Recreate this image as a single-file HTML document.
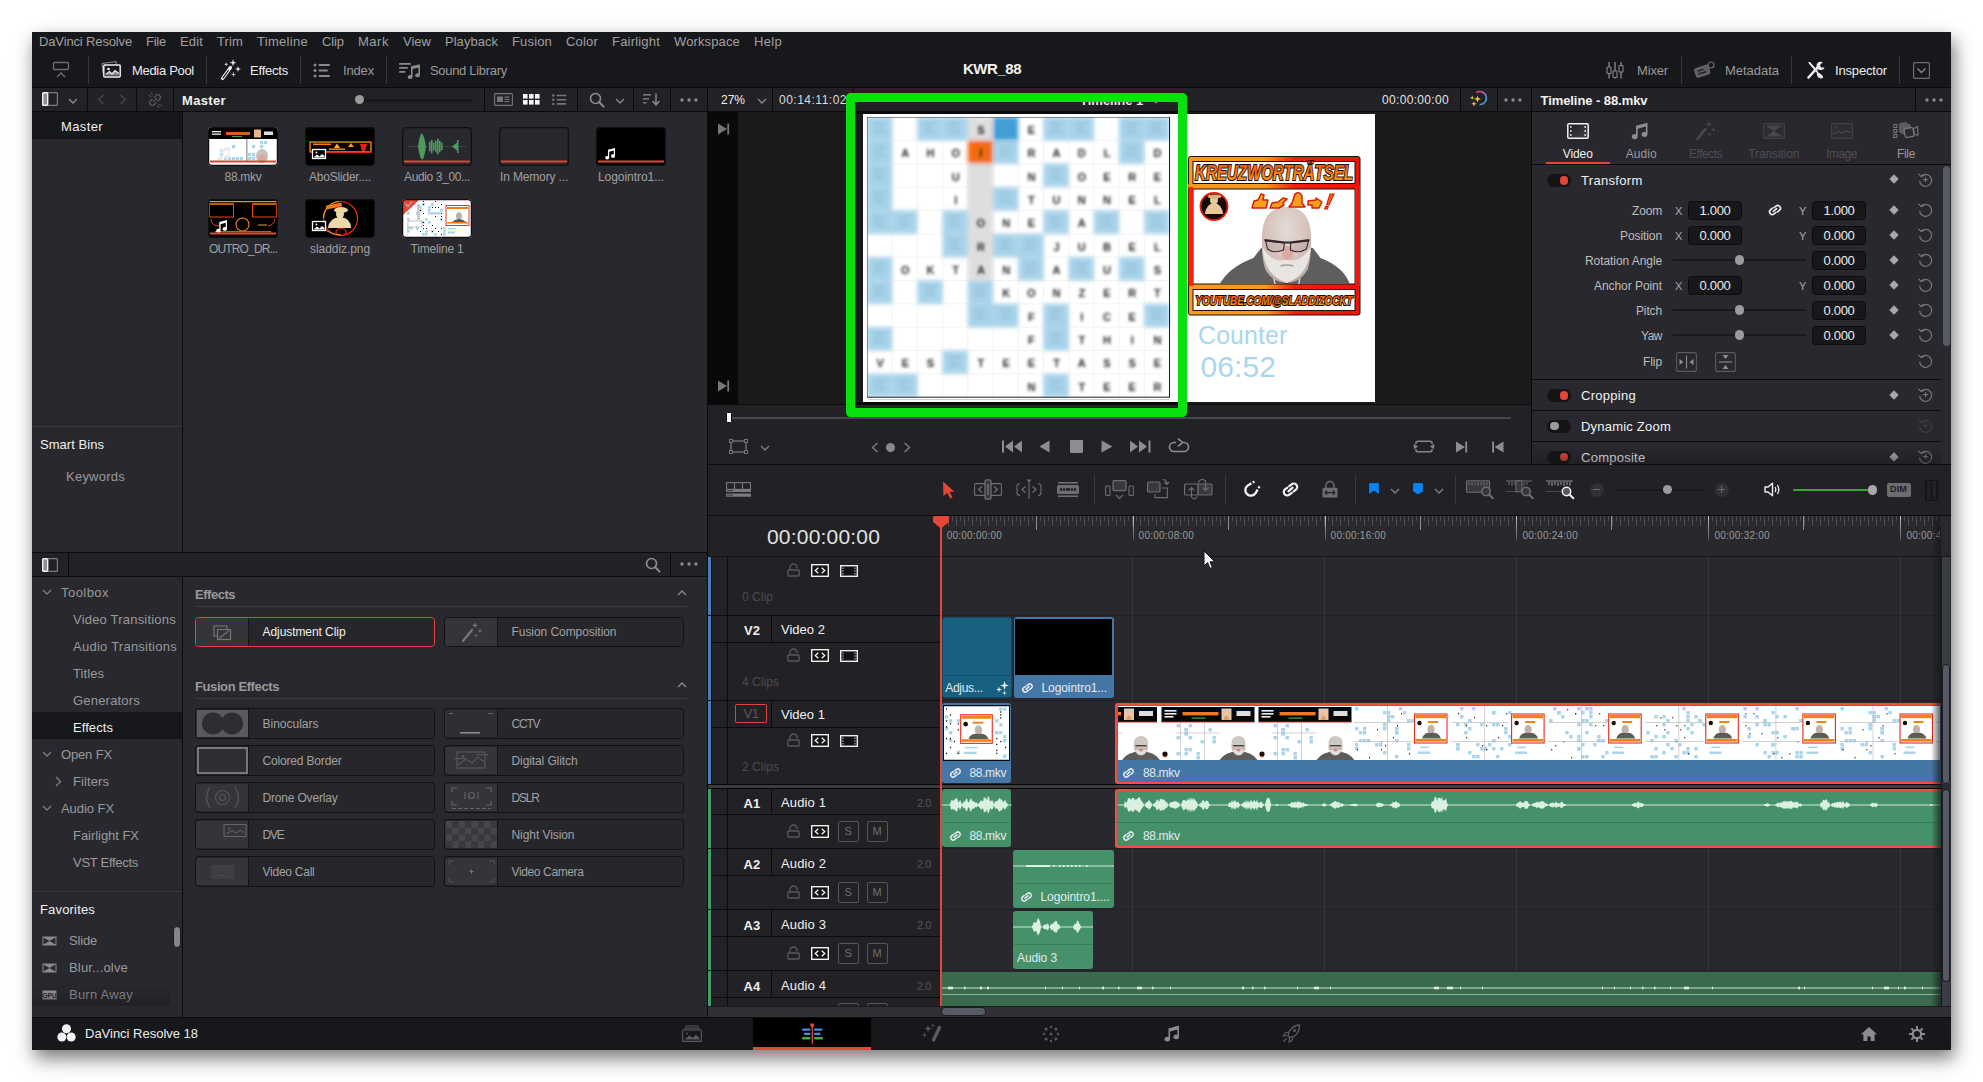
<!DOCTYPE html>
<html><head><meta charset="utf-8"><title>DaVinci Resolve - KWR_88</title>
<style>
html,body{margin:0;padding:0;background:#fff;}
body{width:1983px;height:1082px;position:relative;overflow:hidden;
font-family:"Liberation Sans",sans-serif;font-size:13px;}
div,span,svg{position:absolute;box-sizing:border-box;}
span{white-space:nowrap;display:block;}
svg{overflow:visible;}
</style></head><body>
<div style="left:32px;top:32px;width:1919px;height:1018px;background:#28282e;box-shadow:3px 8px 16px rgba(0,0,0,0.47),2px 10px 30px rgba(0,0,0,0.1);"></div>
<div style="left:32px;top:32px;width:1919px;height:55px;background:#17181b;"></div>
<div style="left:32px;top:87px;width:1919px;height:1px;background:#0b0b0d;"></div>
<span style="left:39.0px;top:31.9px;height:19px;line-height:19px;font-size:13px;color:#a0a0a0;letter-spacing:-0.14px;">DaVinci Resolve</span>
<span style="left:146.0px;top:31.9px;height:19px;line-height:19px;font-size:13px;color:#a0a0a0;letter-spacing:-0.24px;">File</span>
<span style="left:180.0px;top:31.9px;height:19px;line-height:19px;font-size:13px;color:#a0a0a0;letter-spacing:0.15px;">Edit</span>
<span style="left:217.0px;top:31.9px;height:19px;line-height:19px;font-size:13px;color:#a0a0a0;letter-spacing:0.12px;">Trim</span>
<span style="left:257.0px;top:31.9px;height:19px;line-height:19px;font-size:13px;color:#a0a0a0;letter-spacing:0.29px;">Timeline</span>
<span style="left:322.0px;top:31.9px;height:19px;line-height:19px;font-size:13px;color:#a0a0a0;letter-spacing:-0.10px;">Clip</span>
<span style="left:358.0px;top:31.9px;height:19px;line-height:19px;font-size:13px;color:#a0a0a0;letter-spacing:0.53px;">Mark</span>
<span style="left:403.0px;top:31.9px;height:19px;line-height:19px;font-size:13px;color:#a0a0a0;letter-spacing:0.01px;">View</span>
<span style="left:445.0px;top:31.9px;height:19px;line-height:19px;font-size:13px;color:#a0a0a0;letter-spacing:0.03px;">Playback</span>
<span style="left:512.0px;top:31.9px;height:19px;line-height:19px;font-size:13px;color:#a0a0a0;letter-spacing:0.16px;">Fusion</span>
<span style="left:566.0px;top:31.9px;height:19px;line-height:19px;font-size:13px;color:#a0a0a0;letter-spacing:0.18px;">Color</span>
<span style="left:612.0px;top:31.9px;height:19px;line-height:19px;font-size:13px;color:#a0a0a0;letter-spacing:0.19px;">Fairlight</span>
<span style="left:674.0px;top:31.9px;height:19px;line-height:19px;font-size:13px;color:#a0a0a0;letter-spacing:0.13px;">Workspace</span>
<span style="left:754.0px;top:31.9px;height:19px;line-height:19px;font-size:13px;color:#a0a0a0;letter-spacing:0.31px;">Help</span>
<div style="left:88px;top:56px;width:1px;height:28px;background:#38383c;"></div>
<div style="left:206px;top:56px;width:1px;height:28px;background:#38383c;"></div>
<div style="left:300px;top:56px;width:1px;height:28px;background:#38383c;"></div>
<div style="left:386px;top:56px;width:1px;height:28px;background:#38383c;"></div>
<div style="left:1681px;top:56px;width:1px;height:28px;background:#38383c;"></div>
<div style="left:1791px;top:56px;width:1px;height:28px;background:#38383c;"></div>
<div style="left:1899px;top:56px;width:1px;height:28px;background:#38383c;"></div>
<svg style="left:52px;top:61px;" width="18" height="18" viewBox="0 0 18 18"><rect x="1.5" y="1.5" width="15" height="7" rx="1" fill="none" stroke="#6e6e72" stroke-width="1.3"/><path d="M5 16 L9 12 L13 16" fill="none" stroke="#6e6e72" stroke-width="1.4"/></svg>
<svg style="left:100px;top:60px;" width="22" height="20" viewBox="0 0 22 20"><path d="M2 3.5 L16 1.5 L16.4 4" fill="none" stroke="#8c8c8c" stroke-width="1.1"/><path d="M2 3.5 L3 13" fill="none" stroke="#8c8c8c" stroke-width="1.1"/><rect x="3.8" y="5" width="16.4" height="12" rx="1" fill="#17181b" stroke="#f0f0f0" stroke-width="1.5"/><circle cx="8.5" cy="9" r="1.3" fill="#f0f0f0"/><path d="M5.5 15.5 L9.5 11.5 L12 14 L15 10.5 L18.8 13.5 L18.8 15.5 Z" fill="#8a8a8a"/><path d="M5.5 14.5 L9.5 11.5 L12 14 L15 10.5 L18.8 13.5" fill="none" stroke="#f0f0f0" stroke-width="1.2"/></svg>
<span style="left:132.0px;top:60.5px;height:19px;line-height:19px;font-size:13px;color:#ececec;letter-spacing:-0.31px;">Media Pool</span>
<svg style="left:219px;top:58px;" width="24" height="24" viewBox="0 0 24 24"><path d="M3.5 20.5 L11.5 9.5" stroke="#f0f0f0" stroke-width="3.2" stroke-linecap="round"/><path d="M4 19.8 L9.3 12.5" stroke="#17181b" stroke-width="1.2" stroke-linecap="round"/><path d="M14 1 L14.8 4 L17.6 4.8 L14.8 5.6 L14 8.6 L13.2 5.6 L10.4 4.8 L13.2 4 Z" fill="#f0f0f0"/><path d="M19 8 L19.7 10.3 L22 11 L19.7 11.7 L19 14 L18.3 11.7 L16 11 L18.3 10.3 Z" fill="#f0f0f0"/><path d="M14.5 14 L15.1 15.9 L17 16.5 L15.1 17.1 L14.5 19 L13.9 17.1 L12 16.5 L13.9 15.9 Z" fill="#f0f0f0"/><path d="M7.2 4.2 L7.7 5.8 L9.3 6.3 L7.7 6.8 L7.2 8.4 L6.7 6.8 L5.1 6.3 L6.7 5.8 Z" fill="#f0f0f0"/></svg>
<span style="left:250.0px;top:60.5px;height:19px;line-height:19px;font-size:13px;color:#ececec;letter-spacing:-0.21px;">Effects</span>
<svg style="left:313px;top:61.5px;" width="18" height="17" viewBox="0 0 18 17"><circle cx="2" cy="3" r="1.5" fill="#8a8a8a"/><rect x="5.5" y="2" width="11.5" height="2" rx="1" fill="#8a8a8a"/><circle cx="2" cy="8.5" r="1.5" fill="#8a8a8a"/><rect x="5.5" y="7.5" width="9.5" height="2" rx="1" fill="#8a8a8a"/><circle cx="2" cy="14" r="1.5" fill="#8a8a8a"/><rect x="5.5" y="13" width="11.5" height="2" rx="1" fill="#8a8a8a"/></svg>
<span style="left:343.0px;top:60.5px;height:19px;line-height:19px;font-size:13px;color:#9a9a9a;letter-spacing:-0.16px;">Index</span>
<svg style="left:399px;top:62px;" width="22" height="18" viewBox="0 0 22 18"><rect x="0" y="1" width="12" height="1.8" rx=".9" fill="#8a8a8a"/><rect x="0" y="5" width="9" height="1.8" rx=".9" fill="#8a8a8a"/><rect x="0" y="9" width="6.5" height="1.8" rx=".9" fill="#8a8a8a"/><path d="M12 4.2 L21 2.2 L21 13.3 A2.4 2 0 1 1 19.4 11.4 L19.4 5.8 L13.6 7 L13.6 15 A2.4 2 0 1 1 12 13.1 Z" fill="#8a8a8a"/></svg>
<span style="left:430.0px;top:60.5px;height:19px;line-height:19px;font-size:13px;color:#9a9a9a;letter-spacing:-0.31px;">Sound Library</span>
<span style="left:963.0px;top:58.4px;height:21px;line-height:21px;font-size:15px;color:#f2f2f2;font-weight:700;letter-spacing:-0.47px;">KWR_88</span>
<svg style="left:1607px;top:61.5px;" width="18" height="17" viewBox="0 0 18 17"><rect x="1.4" y="0" width="1.3" height="16.5" fill="#8a8a8a"/><rect x="0" y="5" width="4" height="6.5" rx="0.8" fill="#17181b" stroke="#8a8a8a" stroke-width="1.1"/><rect x="7.4" y="0" width="1.3" height="16.5" fill="#8a8a8a"/><rect x="6" y="9" width="4" height="6.5" rx="0.8" fill="#17181b" stroke="#8a8a8a" stroke-width="1.1"/><rect x="13.4" y="0" width="1.3" height="16.5" fill="#8a8a8a"/><rect x="12" y="3.5" width="4" height="6.5" rx="0.8" fill="#17181b" stroke="#8a8a8a" stroke-width="1.1"/></svg>
<span style="left:1637.0px;top:60.5px;height:19px;line-height:19px;font-size:13px;color:#9a9a9a;letter-spacing:-0.16px;">Mixer</span>
<svg style="left:1694px;top:60px;" width="22" height="20" viewBox="0 0 22 20"><g transform="rotate(-18 9 12)"><rect x="1.5" y="6.5" width="14" height="9" rx="1.5" fill="#5e5e62" stroke="#6c6c70" stroke-width="1"/><rect x="4" y="9" width="6" height="1.2" fill="#17181b"/><rect x="4" y="12" width="8" height="1.2" fill="#17181b"/></g><circle cx="17" cy="5" r="3" fill="none" stroke="#6c6c70" stroke-width="1.2"/></svg>
<span style="left:1725.0px;top:60.5px;height:19px;line-height:19px;font-size:13px;color:#9a9a9a;letter-spacing:-0.03px;">Metadata</span>
<svg style="left:1805px;top:60px;" width="22" height="20" viewBox="0 0 22 20"><path d="M3 2.5 L5 2 L13 11 L11.5 12.5 Z" fill="#f0f0f0"/><path d="M11.5 11 L17.5 15.5 Q19 18.5 16 18.5 Q12.5 18 12 15 Z" fill="#f0f0f0"/><path d="M3.5 17.5 L12.5 7.5" stroke="#f0f0f0" stroke-width="2.6" stroke-linecap="round"/><path d="M17.8 2.2 A4.2 4.2 0 1 0 19.6 7.4 L16.2 7.6 L14.8 5.2 Z" fill="#f0f0f0"/></svg>
<span style="left:1835.0px;top:60.5px;height:19px;line-height:19px;font-size:13px;color:#ececec;letter-spacing:-0.16px;">Inspector</span>
<svg style="left:1913px;top:61.5px;" width="17" height="17" viewBox="0 0 17 17"><rect x=".6" y=".6" width="15.8" height="15.8" rx="1" fill="none" stroke="#6e6e72" stroke-width="1.2"/><path d="M4.5 6.5 L8.5 10.5 L12.5 6.5" fill="none" stroke="#8a8a8a" stroke-width="1.4"/></svg>
<div style="left:32px;top:88px;width:675px;height:23px;background:#212126;"></div>
<div style="left:32px;top:111px;width:675px;height:1px;background:#0b0b0d;"></div>
<div style="left:87px;top:88px;width:1px;height:23px;background:#0b0b0d;"></div>
<div style="left:136px;top:88px;width:1px;height:23px;background:#0b0b0d;"></div>
<div style="left:173px;top:88px;width:1px;height:23px;background:#0b0b0d;"></div>
<div style="left:484px;top:88px;width:1px;height:23px;background:#0b0b0d;"></div>
<div style="left:577px;top:88px;width:1px;height:23px;background:#0b0b0d;"></div>
<div style="left:633px;top:88px;width:1px;height:23px;background:#0b0b0d;"></div>
<div style="left:670px;top:88px;width:1px;height:23px;background:#0b0b0d;"></div>
<svg style="left:42px;top:92px;" width="16" height="14" viewBox="0 0 16 14"><rect x=".6" y=".6" width="14.8" height="12.8" rx="1" fill="none" stroke="#7c7c80" stroke-width="1.2"/><rect x=".7" y=".7" width="5" height="12.6" rx="1" fill="#8e8e90" stroke="#f2f2f2" stroke-width="1.4"/></svg>
<svg style="left:68px;top:97.5px;" width="10" height="6" viewBox="0 0 10 6"><path d="M1 1 L5 5 L9 1" fill="none" stroke="#8a8a8a" stroke-width="1.4"/></svg>
<svg style="left:97px;top:94px;" width="8" height="11" viewBox="0 0 8 11"><path d="M6.5 1 L1.5 5.5 L6.5 10" fill="none" stroke="#48484c" stroke-width="1.4"/></svg>
<svg style="left:119px;top:94px;" width="8" height="11" viewBox="0 0 8 11"><path d="M1.5 1 L6.5 5.5 L1.5 10" fill="none" stroke="#48484c" stroke-width="1.4"/></svg>
<svg style="left:146px;top:91px;" width="18" height="17" viewBox="0 0 18 17"><g fill="none" stroke="#56565a" stroke-width="1.4" stroke-linecap="round"><path d="M8.3 6.2 L10 4.5 A2.6 2.6 0 0 1 13.7 8.2 L12 9.9"/><path d="M9.9 12 L8.2 13.7 A2.6 2.6 0 0 1 4.5 10 L6.2 8.3"/><path d="M7.6 10.6 L10.6 7.6"/><path d="M3 4.5 L5 5.5 M5.5 2 L6.3 4 M13.5 13.5 L15.5 14.5 M12 14.5 L12.8 16.5" stroke-width="1"/></g></svg>
<span style="left:182.0px;top:91.2px;height:19px;line-height:19px;font-size:13px;color:#f2f2f2;font-weight:700;letter-spacing:0.35px;">Master</span>
<div style="left:363px;top:98.5px;width:110px;height:3px;background:#19191c;border-radius:1.5px;"></div>
<div style="left:354.5px;top:95px;width:9px;height:9px;background:#9a9a9a;border-radius:50%;"></div>
<svg style="left:494px;top:93px;" width="19" height="13" viewBox="0 0 19 13"><rect x=".6" y=".6" width="17.8" height="11.8" rx="1" fill="none" stroke="#77777b" stroke-width="1.1"/><rect x="3" y="3.5" width="6" height="5.5" fill="#77777b"/><rect x="10.5" y="3.5" width="5" height="1.1" fill="#77777b"/><rect x="10.5" y="5.8" width="5" height="1.1" fill="#77777b"/><rect x="10.5" y="8" width="5" height="1.1" fill="#77777b"/></svg>
<svg style="left:523px;top:94px;" width="17" height="11" viewBox="0 0 17 11"><rect x="0" y="0" width="4.6" height="4.6" fill="#f4f4f4"/><rect x="6" y="0" width="4.6" height="4.6" fill="#f4f4f4"/><rect x="12" y="0" width="4.6" height="4.6" fill="#f4f4f4"/><rect x="0" y="6" width="4.6" height="4.6" fill="#f4f4f4"/><rect x="6" y="6" width="4.6" height="4.6" fill="#f4f4f4"/><rect x="12" y="6" width="4.6" height="4.6" fill="#f4f4f4"/></svg>
<svg style="left:552px;top:94px;" width="15" height="12" viewBox="0 0 15 12"><circle cx="1.3" cy="1.5" r="1.2" fill="#77777b"/><rect x="4.5" y="0.7" width="10" height="1.6" rx=".8" fill="#77777b"/><circle cx="1.3" cy="5.7" r="1.2" fill="#77777b"/><rect x="4.5" y="4.9" width="10" height="1.6" rx=".8" fill="#77777b"/><circle cx="1.3" cy="9.9" r="1.2" fill="#77777b"/><rect x="4.5" y="9.1" width="10" height="1.6" rx=".8" fill="#77777b"/></svg>
<svg style="left:589px;top:91.5px;" width="16" height="16" viewBox="0 0 16 16"><circle cx="6.5" cy="6.5" r="5" fill="none" stroke="#8e8e8e" stroke-width="1.6"/><path d="M10.3 10.3 L14.6 14.6" stroke="#8e8e8e" stroke-width="2" stroke-linecap="round"/></svg>
<svg style="left:614.5px;top:97.5px;" width="10" height="6" viewBox="0 0 10 6"><path d="M1 1 L5 5 L9 1" fill="none" stroke="#8a8a8a" stroke-width="1.4"/></svg>
<svg style="left:643px;top:93px;" width="18" height="13" viewBox="0 0 18 13"><rect x="0" y="1" width="8" height="1.6" fill="#77777b"/><rect x="0" y="5" width="6" height="1.6" fill="#77777b"/><rect x="0" y="9" width="3.5" height="1.6" fill="#77777b"/><path d="M13 .5 L13 11.5 M9.5 8 L13 11.8 L16.5 8" fill="none" stroke="#8a8a8a" stroke-width="1.5"/></svg>
<svg style="left:680px;top:97.5px;" width="18" height="4" viewBox="0 0 18 4"><circle cx="2" cy="2" r="1.7" fill="#8a8a8a"/><circle cx="9" cy="2" r="1.7" fill="#8a8a8a"/><circle cx="16" cy="2" r="1.7" fill="#8a8a8a"/></svg>
<div style="left:32px;top:112px;width:150px;height:27px;background:#17181b;"></div>
<div style="left:182px;top:112px;width:1px;height:440px;background:#0b0b0d;"></div>
<span style="left:61.0px;top:117.4px;height:19px;line-height:19px;font-size:13px;color:#f0f0f0;letter-spacing:0.38px;">Master</span>
<div style="left:32px;top:426px;width:150px;height:1px;background:#38383d;"></div>
<span style="left:40.0px;top:434.5px;height:19px;line-height:19px;font-size:13px;color:#f0f0f0;letter-spacing:0.04px;">Smart Bins</span>
<span style="left:66.0px;top:466.5px;height:19px;line-height:19px;font-size:13px;color:#9a9a9a;letter-spacing:0.24px;">Keywords</span>
<svg style="left:208px;top:126.5px;overflow:hidden;border-radius:4px" width="70" height="39" viewBox="0 0 70 39"><rect x="0" y="0" width="70" height="39" rx="3.5" fill="#fff"/><rect x="1" y="1" width="68" height="11" fill="#000"/><rect x="4" y="4" width="9" height="1.3" fill="#eee"/><rect x="4" y="6.5" width="9" height="1.3" fill="#eee"/><rect x="18" y="5" width="24" height="3" fill="#e25a18"/><rect x="24" y="9" width="10" height="1" fill="#2fae3a"/><rect x="46" y="2.5" width="7" height="8" fill="#e7b58a"/><rect x="56" y="4.5" width="9" height="3.5" fill="#ddd"/><rect x="24" y="30" width="3.2" height="3.2" fill="#a9d4ea"/><rect x="44" y="18" width="3.2" height="3.2" fill="#a9d4ea"/><rect x="32" y="30" width="3.2" height="3.2" fill="#a9d4ea"/><rect x="40" y="30" width="3.2" height="3.2" fill="#a9d4ea"/><rect x="16" y="30" width="3.2" height="3.2" fill="#a9d4ea"/><rect x="12" y="26" width="3.2" height="3.2" fill="#a9d4ea"/><rect x="28" y="30" width="3.2" height="3.2" fill="#a9d4ea"/><rect x="24" y="18" width="3.2" height="3.2" fill="#a9d4ea"/><rect x="56" y="26" width="3.2" height="3.2" fill="#a9d4ea"/><rect x="44" y="30" width="3.2" height="3.2" fill="#a9d4ea"/><rect x="40" y="26" width="3.2" height="3.2" fill="#a9d4ea"/><rect x="52" y="18" width="3.2" height="3.2" fill="#a9d4ea"/><rect x="24" y="18" width="3.2" height="3.2" fill="#a9d4ea"/><rect x="44" y="26" width="3.2" height="3.2" fill="#a9d4ea"/><rect x="56" y="14" width="3.2" height="3.2" fill="#a9d4ea"/><rect x="52" y="14" width="3.2" height="3.2" fill="#a9d4ea"/><rect x="20" y="30" width="3.2" height="3.2" fill="#a9d4ea"/><rect x="12" y="22" width="3.2" height="3.2" fill="#a9d4ea"/><rect x="12" y="22" width="3.2" height="3.2" fill="#a9d4ea"/><rect x="40" y="30" width="3.2" height="3.2" fill="#a9d4ea"/><rect x="56" y="26" width="3.2" height="3.2" fill="#a9d4ea"/><rect x="56" y="26" width="3.2" height="3.2" fill="#a9d4ea"/><rect x="38.5" y="12" width=".8" height="22" fill="#555"/><ellipse cx="54" cy="29" rx="6" ry="7" fill="#c9c0bc"/><ellipse cx="54" cy="32" rx="4.5" ry="4" fill="#d9a8a0"/><g transform="translate(9 20) scale(1.25)"><path d="M3 1.8 L10 0 L10 8.2 A2 1.7 0 1 1 8.8 6.6 L8.8 2.6 L4.2 3.8 L4.2 9.8 A2 1.7 0 1 1 3 8.2 Z" fill="#e8e8e8"/></g><rect x="2" y="33.5" width="66" height="2" fill="#d9483b"/><rect x=".5" y=".5" width="69" height="38" rx="3.5" fill="none" stroke="#101012" stroke-width="1.5"/></svg>
<svg style="left:305px;top:126.5px;overflow:hidden;border-radius:4px" width="70" height="39" viewBox="0 0 70 39"><rect x="0" y="0" width="70" height="39" rx="3.5" fill="#000"/><rect x="4.5" y="14.5" width="62" height="11" rx="1" fill="none" stroke="#ee2a12" stroke-width="1.2"/><rect x="5.5" y="15.5" width="60" height="9" fill="none" stroke="#f39a12" stroke-width=".7"/><rect x="8" y="16.5" width="18" height="1.6" fill="#f07a1a"/><rect x="24" y="21.5" width="16" height="1.4" fill="#f39a12"/><path d="M29 21 L32 16.5 L35 21 Z" fill="#f5b640"/><path d="M43 20 L46 16 L49 20 Z" fill="#f5a020"/><path d="M55 17 L62 17 L60 24 L57 24 Z" fill="#e81f10"/><rect x="7.5" y="22.5" width="13" height="9" fill="#000" stroke="#fff" stroke-width="1.3"/><circle cx="11.5" cy="25.5" r="1" fill="#fff"/><path d="M8.5 30.5 L12.0 27.5 L14.5 29.5 L17.0 27.0 L19.5 29.0 L19.5 30.5 Z" fill="#fff"/><rect x=".5" y=".5" width="69" height="38" rx="3.5" fill="none" stroke="#101012" stroke-width="1.5"/></svg>
<svg style="left:402px;top:126.5px;overflow:hidden;border-radius:4px" width="70" height="39" viewBox="0 0 70 39"><rect x="0" y="0" width="70" height="39" rx="3.5" fill="#28282e"/><path d="M6 19.5 L64 19.5" stroke="#3b5d45" stroke-width=".6"/><path d="M16 19.5 Q18 6 20 6.5 Q22 8 24 19.5 Q22 33 20 32.5 Q18 32 16 19.5 Z" fill="#4e9a61"/><rect x="27" y="14.5" width="1.6" height="10" rx=".8" fill="#4e9a61"/><rect x="29" y="12.5" width="1.6" height="14" rx=".8" fill="#4e9a61"/><rect x="31" y="15.5" width="1.6" height="8" rx=".8" fill="#4e9a61"/><rect x="33" y="13.5" width="1.6" height="12" rx=".8" fill="#4e9a61"/><rect x="35" y="11.5" width="1.6" height="16" rx=".8" fill="#4e9a61"/><rect x="37" y="13.5" width="1.6" height="12" rx=".8" fill="#4e9a61"/><rect x="39" y="15.5" width="1.6" height="8" rx=".8" fill="#4e9a61"/><path d="M50 19.5 L55 15.5 L55 23.5 Z" fill="#4e9a61"/><rect x="55" y="13" width="1.5" height="13" fill="#4e9a61"/><rect x="2" y="33.5" width="66" height="2" fill="#d9483b"/><rect x=".5" y=".5" width="69" height="38" rx="3.5" fill="none" stroke="#101012" stroke-width="1.5"/></svg>
<svg style="left:499px;top:126.5px;overflow:hidden;border-radius:4px" width="70" height="39" viewBox="0 0 70 39"><rect x="0" y="0" width="70" height="39" rx="3.5" fill="#28282e"/><rect x="2" y="33.5" width="66" height="2" fill="#d9483b"/><rect x=".5" y=".5" width="69" height="38" rx="3.5" fill="none" stroke="#101012" stroke-width="1.5"/></svg>
<svg style="left:596px;top:126.5px;overflow:hidden;border-radius:4px" width="70" height="39" viewBox="0 0 70 39"><rect x="0" y="0" width="70" height="39" rx="3.5" fill="#000"/><g transform="translate(9 21) scale(1.0)"><path d="M3 1.8 L10 0 L10 8.2 A2 1.7 0 1 1 8.8 6.6 L8.8 2.6 L4.2 3.8 L4.2 9.8 A2 1.7 0 1 1 3 8.2 Z" fill="#fff"/></g><rect x="2" y="33.5" width="66" height="2" fill="#d9483b"/><rect x=".5" y=".5" width="69" height="38" rx="3.5" fill="none" stroke="#101012" stroke-width="1.5"/></svg>
<svg style="left:208px;top:198.5px;overflow:hidden;border-radius:4px" width="70" height="39" viewBox="0 0 70 39"><rect x="0" y="0" width="70" height="39" rx="3.5" fill="#000"/><rect x="1" y="2" width="68" height="1.2" fill="#f39a12"/><rect x="1.5" y="5" width="24" height="13" fill="none" stroke="#e8481a" stroke-width="1"/><rect x="44.5" y="5" width="24" height="13" fill="none" stroke="#e8481a" stroke-width="1"/><path d="M1.5 5 L25.5 5 M44.5 5 L68.5 5" stroke="#f39a12" stroke-width="1"/><circle cx="34.5" cy="25.5" r="6.5" fill="none" stroke="#f07a1a" stroke-width="1.2"/><path d="M3 20 Q3 27 12 27 M67 20 Q66 26 60 27" fill="none" stroke="#e8481a" stroke-width="1"/><rect x="50" y="25.5" width="9" height="1" fill="#f39a12"/><rect x="7" y="32" width="56" height="1.4" fill="#e8481a"/><g transform="translate(8 21) scale(1.1)"><path d="M3 1.8 L10 0 L10 8.2 A2 1.7 0 1 1 8.8 6.6 L8.8 2.6 L4.2 3.8 L4.2 9.8 A2 1.7 0 1 1 3 8.2 Z" fill="#fff"/></g><rect x="2" y="33.5" width="66" height="2" fill="#d9483b"/><rect x=".5" y=".5" width="69" height="38" rx="3.5" fill="none" stroke="#101012" stroke-width="1.5"/></svg>
<svg style="left:305px;top:198.5px;overflow:hidden;border-radius:4px" width="70" height="39" viewBox="0 0 70 39"><rect x="0" y="0" width="70" height="39" rx="3.5" fill="#000"/><circle cx="35.5" cy="19.5" r="17" fill="none" stroke="#ef2a12" stroke-width="1.2"/><path d="M18.5 19 A17 17 0 0 1 34 2.5" fill="none" stroke="#f39a12" stroke-width="1.2"/><rect x="21" y="5" width="16" height="4" fill="#f07a1a" transform="rotate(-12 29 7)"/><ellipse cx="36" cy="11" rx="7" ry="3" fill="#ead9a4"/><ellipse cx="35" cy="15" rx="4" ry="4.5" fill="#ecd9a8"/><path d="M23 29 Q24 19 35 18 Q46 19 46 29 Z" fill="#ecd9a8"/><ellipse cx="36" cy="33" rx="5" ry="3.5" fill="none" stroke="#ef2a12" stroke-width="1.2"/><path d="M20 31 Q28 36 36 36" fill="none" stroke="#f39a12" stroke-width="1"/><rect x="7.5" y="22.5" width="13" height="9" fill="#000" stroke="#fff" stroke-width="1.3"/><circle cx="11.5" cy="25.5" r="1" fill="#fff"/><path d="M8.5 30.5 L12.0 27.5 L14.5 29.5 L17.0 27.0 L19.5 29.0 L19.5 30.5 Z" fill="#fff"/><rect x=".5" y=".5" width="69" height="38" rx="3.5" fill="none" stroke="#101012" stroke-width="1.5"/></svg>
<svg style="left:402px;top:198.5px;overflow:hidden;border-radius:4px" width="70" height="39" viewBox="0 0 70 39"><rect x="0" y="0" width="70" height="39" rx="3.5" fill="#fff"/><rect x="17" y="10" width="2.6" height="2.6" fill="#a9d4ea"/><rect x="20" y="34" width="2.6" height="2.6" fill="#a9d4ea"/><rect x="2" y="7" width="2.6" height="2.6" fill="#a9d4ea"/><rect x="41" y="28" width="2.6" height="2.6" fill="#a9d4ea"/><rect x="5" y="19" width="2.6" height="2.6" fill="#a9d4ea"/><rect x="29" y="4" width="2.6" height="2.6" fill="#a9d4ea"/><rect x="26" y="13" width="2.6" height="2.6" fill="#a9d4ea"/><rect x="2" y="7" width="2.6" height="2.6" fill="#a9d4ea"/><rect x="20" y="22" width="2.6" height="2.6" fill="#a9d4ea"/><rect x="5" y="13" width="2.6" height="2.6" fill="#a9d4ea"/><rect x="5" y="28" width="2.6" height="2.6" fill="#a9d4ea"/><rect x="20" y="4" width="2.6" height="2.6" fill="#a9d4ea"/><rect x="41" y="31" width="2.6" height="2.6" fill="#a9d4ea"/><rect x="5" y="13" width="2.6" height="2.6" fill="#a9d4ea"/><rect x="32" y="34" width="2.6" height="2.6" fill="#a9d4ea"/><rect x="29" y="4" width="2.6" height="2.6" fill="#a9d4ea"/><rect x="29" y="31" width="2.6" height="2.6" fill="#a9d4ea"/><rect x="20" y="4" width="2.6" height="2.6" fill="#a9d4ea"/><rect x="11" y="4" width="2.6" height="2.6" fill="#a9d4ea"/><rect x="26" y="10" width="2.6" height="2.6" fill="#a9d4ea"/><rect x="14" y="22" width="2.6" height="2.6" fill="#a9d4ea"/><rect x="8" y="28" width="2.6" height="2.6" fill="#a9d4ea"/><rect x="5" y="31" width="2.6" height="2.6" fill="#a9d4ea"/><rect x="14" y="28" width="2.6" height="2.6" fill="#a9d4ea"/><rect x="41" y="34" width="2.6" height="2.6" fill="#a9d4ea"/><rect x="8" y="7" width="2.6" height="2.6" fill="#a9d4ea"/><rect x="29" y="31" width="2.6" height="2.6" fill="#a9d4ea"/><rect x="32" y="13" width="2.6" height="2.6" fill="#a9d4ea"/><rect x="17" y="7" width="2.6" height="2.6" fill="#a9d4ea"/><rect x="26" y="7" width="2.6" height="2.6" fill="#a9d4ea"/><rect x="29" y="4" width="2.6" height="2.6" fill="#a9d4ea"/><rect x="29" y="13" width="2.6" height="2.6" fill="#a9d4ea"/><rect x="23" y="34" width="2.6" height="2.6" fill="#a9d4ea"/><rect x="26" y="22" width="2.6" height="2.6" fill="#a9d4ea"/><rect x="38" y="19" width="2.6" height="2.6" fill="#a9d4ea"/><rect x="23" y="31" width="2.6" height="2.6" fill="#a9d4ea"/><rect x="23" y="19" width="2.6" height="2.6" fill="#a9d4ea"/><rect x="14" y="13" width="2.6" height="2.6" fill="#a9d4ea"/><rect x="38" y="10" width="2.6" height="2.6" fill="#a9d4ea"/><rect x="35" y="13" width="2.6" height="2.6" fill="#a9d4ea"/><rect x="21" y="29" width="1" height="1" fill="#111"/><rect x="30" y="26" width="1" height="1" fill="#111"/><rect x="39" y="17" width="1" height="1" fill="#111"/><rect x="39" y="14" width="1" height="1" fill="#111"/><rect x="21" y="5" width="1" height="1" fill="#111"/><rect x="36" y="8" width="1" height="1" fill="#111"/><rect x="33" y="8" width="1" height="1" fill="#111"/><rect x="39" y="20" width="1" height="1" fill="#111"/><rect x="18" y="32" width="1" height="1" fill="#111"/><rect x="21" y="26" width="1" height="1" fill="#111"/><rect x="33" y="17" width="1" height="1" fill="#111"/><rect x="33" y="29" width="1" height="1" fill="#111"/><rect x="39" y="29" width="1" height="1" fill="#111"/><rect x="39" y="5" width="1" height="1" fill="#111"/><rect x="21" y="14" width="1" height="1" fill="#111"/><rect x="39" y="35" width="1" height="1" fill="#111"/><rect x="21" y="2" width="1" height="1" fill="#111"/><rect x="30" y="32" width="1" height="1" fill="#111"/><rect x="39" y="14" width="1" height="1" fill="#111"/><rect x="36" y="32" width="1" height="1" fill="#111"/><rect x="33" y="2" width="1" height="1" fill="#111"/><rect x="39" y="17" width="1" height="1" fill="#111"/><rect x="24" y="29" width="1" height="1" fill="#111"/><rect x="21" y="23" width="1" height="1" fill="#111"/><rect x="18" y="11" width="1" height="1" fill="#111"/><rect x="30" y="8" width="1" height="1" fill="#111"/><rect x="15" y="5" width="3" height="16" fill="#ccc"/><rect x="44" y="6.5" width="23" height="20" fill="#fff" stroke="#e23a1a" stroke-width="1"/><rect x="45" y="8" width="21" height="2" fill="#f07a1a"/><rect x="45" y="23" width="21" height="1.6" fill="#f07a1a"/><ellipse cx="57" cy="17" rx="3" ry="3.8" fill="#b9b0ac"/><path d="M50 23 Q57 17 64 23 Z" fill="#555"/><rect x="46" y="29" width="8" height="1.4" fill="#a9d4ea"/><rect x="46" y="32.5" width="7" height="2" fill="#a9d4ea"/><rect x="6" y="22" width="14" height="6" fill="#fff" stroke="#999" stroke-width=".6"/><path d="M0 0 L18 0 L0 17 Z" fill="#e0483c"/><path d="M3.5 5 L6 7.5 L10 2.5" fill="none" stroke="#b8b0a8" stroke-width="1.2"/><rect x=".5" y=".5" width="69" height="38" rx="3.5" fill="none" stroke="#101012" stroke-width="1.5"/></svg>
<span style="left:224.5px;top:168.3px;height:18px;line-height:18px;font-size:12px;color:#a0a0a0;letter-spacing:-0.28px;">88.mkv</span>
<span style="left:309.0px;top:168.3px;height:18px;line-height:18px;font-size:12px;color:#a0a0a0;letter-spacing:-0.21px;">AboSlider....</span>
<span style="left:404.0px;top:168.3px;height:18px;line-height:18px;font-size:12px;color:#a0a0a0;letter-spacing:-0.36px;">Audio 3_00...</span>
<span style="left:500.0px;top:168.3px;height:18px;line-height:18px;font-size:12px;color:#a0a0a0;letter-spacing:-0.15px;">In Memory ...</span>
<span style="left:598.0px;top:168.3px;height:18px;line-height:18px;font-size:12px;color:#a0a0a0;letter-spacing:-0.05px;">Logointro1...</span>
<span style="left:209.0px;top:240.3px;height:18px;line-height:18px;font-size:12px;color:#a0a0a0;letter-spacing:-0.85px;">OUTRO_DR...</span>
<span style="left:310.0px;top:240.3px;height:18px;line-height:18px;font-size:12px;color:#a0a0a0;letter-spacing:-0.06px;">sladdiz.png</span>
<span style="left:410.5px;top:240.3px;height:18px;line-height:18px;font-size:12px;color:#a0a0a0;letter-spacing:-0.19px;">Timeline 1</span>
<div style="left:32px;top:552px;width:675px;height:1px;background:#0b0b0d;"></div>
<div style="left:707px;top:88px;width:1px;height:929px;background:#0b0b0d;"></div>
<div style="left:708px;top:88px;width:823px;height:23px;background:#212126;"></div>
<div style="left:708px;top:111px;width:823px;height:1px;background:#0b0b0d;"></div>
<div style="left:772px;top:88px;width:1px;height:23px;background:#0b0b0d;"></div>
<div style="left:853px;top:88px;width:1px;height:23px;background:#0b0b0d;"></div>
<div style="left:1460px;top:88px;width:1px;height:23px;background:#0b0b0d;"></div>
<div style="left:1497px;top:88px;width:1px;height:23px;background:#0b0b0d;"></div>
<div style="left:1531px;top:88px;width:1px;height:377px;background:#0b0b0d;"></div>
<span style="left:721.0px;top:91.0px;height:18px;line-height:18px;font-size:12px;color:#f0f0f0;letter-spacing:-0.01px;">27%</span>
<svg style="left:756.5px;top:97.5px;" width="10" height="6" viewBox="0 0 10 6"><path d="M1 1 L5 5 L9 1" fill="none" stroke="#8a8a8a" stroke-width="1.4"/></svg>
<span style="left:779.0px;top:91.0px;height:18px;line-height:18px;font-size:12px;color:#dcdcdc;letter-spacing:0.50px;">00:14:11:02</span>
<span style="left:1382.0px;top:91.0px;height:18px;line-height:18px;font-size:12px;color:#e4e4e4;letter-spacing:0.33px;">00:00:00:00</span>
<svg style="left:1469px;top:90px;" width="20" height="20" viewBox="0 0 20 20"><defs><linearGradient id="cw" x1="0" y1="0" x2="1" y2="1"><stop offset="0" stop-color="#e8502a"/><stop offset=".45" stop-color="#c05cd8"/><stop offset=".8" stop-color="#3aa0e0"/><stop offset="1" stop-color="#48c060"/></linearGradient></defs><path d="M7.5 2.5 A6.5 6.5 0 1 1 10.5 14.5" fill="none" stroke="url(#cw)" stroke-width="1.6"/><path d="M8.5 5.5 L9.4 8.1 L12 9 L9.4 9.9 L8.5 12.5 L7.6 9.9 L5 9 L7.6 8.1 Z" fill="#e8c83a"/><path d="M3.2 5.5 L3.8 7.2 L5.5 7.8 L3.8 8.4 L3.2 10.1 L2.6 8.4 L.9 7.8 L2.6 7.2 Z" fill="#e8c83a"/><path d="M5 11 L5.7 13 L7.7 13.7 L5.7 14.4 L5 16.4 L4.3 14.4 L2.3 13.7 L4.3 13 Z" fill="#e8c83a"/></svg>
<svg style="left:1504px;top:97.5px;" width="18" height="4" viewBox="0 0 18 4"><circle cx="2" cy="2" r="1.7" fill="#8a8a8a"/><circle cx="9" cy="2" r="1.7" fill="#8a8a8a"/><circle cx="16" cy="2" r="1.7" fill="#8a8a8a"/></svg>
<div style="left:708px;top:112px;width:823px;height:292px;background:#1a1a1a;"></div>
<div style="left:708px;top:112px;width:30px;height:292px;background:#090909;"></div>
<div style="left:708px;top:404px;width:823px;height:1px;background:#0b0b0d;"></div>
<svg style="left:718px;top:122.5px;" width="12" height="12" viewBox="0 0 12 12"><path d="M0 .5 L9 6 L0 11.5 Z" fill="#77777a"/><rect x="9.3" y=".5" width="1.8" height="11" fill="#77777a"/></svg>
<svg style="left:718px;top:380px;" width="12" height="12" viewBox="0 0 12 12"><path d="M0 .5 L9 6 L0 11.5 Z" fill="#77777a"/><rect x="9.3" y=".5" width="1.8" height="11" fill="#77777a"/></svg>
<div style="left:708px;top:405px;width:823px;height:59px;background:#212126;"></div>
<div style="left:708px;top:464px;width:1243px;height:1px;background:#0b0b0d;"></div>
<div style="left:1180px;top:114px;width:195px;height:288px;background:#fff;"></div>
<div style="left:850px;top:98px;width:333px;height:315px;background:#1a1a1a;"></div>
<div style="left:850px;top:402px;width:333px;height:3px;background:#070708;"></div>
<div style="left:850px;top:405px;width:333px;height:8px;background:#212126;"></div>
<div style="left:852px;top:100px;width:330px;height:11px;background:#212126;"></div>
<div style="left:852px;top:111px;width:330px;height:2.5px;background:#0a0a0c;"></div>
<div style="left:855px;top:101px;width:324px;height:9px;overflow:hidden;"><span style="left:225px;top:-10.5px;height:19px;line-height:19px;font-size:13px;font-weight:700;color:#e8e8e8;">Timeline 1</span><svg style="left:297px;top:-1px" width="8" height="5"><path d="M1 0 L4 3 L7 0" fill="none" stroke="#888" stroke-width="1.2"/></svg></div>
<div style="left:863px;top:114px;width:318px;height:288px;background:#fff;"></div>
<svg style="left:866.9px;top:117.2px;overflow:hidden" width="304" height="281"><defs><filter id="bl" x="-5%" y="-5%" width="110%" height="110%"><feGaussianBlur stdDeviation="1.9"/></filter><filter id="bl2"><feGaussianBlur stdDeviation="1.4"/></filter></defs><g filter="url(#bl)"><rect x="0.0" y="0.0" width="25.2" height="23.4" fill="#a6d3ea"/><rect x="50.4" y="0.0" width="25.2" height="23.4" fill="#a6d3ea"/><rect x="75.6" y="0.0" width="25.2" height="23.4" fill="#a6d3ea"/><rect x="100.8" y="0.0" width="25.2" height="23.4" fill="#dedede"/><rect x="126.1" y="0.0" width="25.2" height="23.4" fill="#3c9fd8"/><rect x="176.5" y="0.0" width="25.2" height="23.4" fill="#a6d3ea"/><rect x="201.7" y="0.0" width="25.2" height="23.4" fill="#a6d3ea"/><rect x="252.1" y="0.0" width="25.2" height="23.4" fill="#a6d3ea"/><rect x="277.3" y="0.0" width="25.2" height="23.4" fill="#a6d3ea"/><rect x="0.0" y="23.4" width="25.2" height="23.4" fill="#a6d3ea"/><rect x="100.8" y="23.4" width="25.2" height="23.4" fill="#f46a10"/><rect x="126.1" y="23.4" width="25.2" height="23.4" fill="#a6d3ea"/><rect x="252.1" y="23.4" width="25.2" height="23.4" fill="#a6d3ea"/><rect x="0.0" y="46.7" width="25.2" height="23.4" fill="#a6d3ea"/><rect x="100.8" y="46.7" width="25.2" height="23.4" fill="#dedede"/><rect x="176.5" y="46.7" width="25.2" height="23.4" fill="#a6d3ea"/><rect x="0.0" y="70.1" width="25.2" height="23.4" fill="#a6d3ea"/><rect x="100.8" y="70.1" width="25.2" height="23.4" fill="#dedede"/><rect x="126.1" y="70.1" width="25.2" height="23.4" fill="#a6d3ea"/><rect x="0.0" y="93.4" width="25.2" height="23.4" fill="#a6d3ea"/><rect x="25.2" y="93.4" width="25.2" height="23.4" fill="#a6d3ea"/><rect x="75.6" y="93.4" width="25.2" height="23.4" fill="#a6d3ea"/><rect x="100.8" y="93.4" width="25.2" height="23.4" fill="#dedede"/><rect x="176.5" y="93.4" width="25.2" height="23.4" fill="#a6d3ea"/><rect x="226.9" y="93.4" width="25.2" height="23.4" fill="#a6d3ea"/><rect x="277.3" y="93.4" width="25.2" height="23.4" fill="#a6d3ea"/><rect x="75.6" y="116.8" width="25.2" height="23.4" fill="#a6d3ea"/><rect x="100.8" y="116.8" width="25.2" height="23.4" fill="#dedede"/><rect x="126.1" y="116.8" width="25.2" height="23.4" fill="#a6d3ea"/><rect x="151.3" y="116.8" width="25.2" height="23.4" fill="#a6d3ea"/><rect x="0.0" y="140.1" width="25.2" height="23.4" fill="#a6d3ea"/><rect x="100.8" y="140.1" width="25.2" height="23.4" fill="#dedede"/><rect x="151.3" y="140.1" width="25.2" height="23.4" fill="#a6d3ea"/><rect x="201.7" y="140.1" width="25.2" height="23.4" fill="#a6d3ea"/><rect x="252.1" y="140.1" width="25.2" height="23.4" fill="#a6d3ea"/><rect x="0.0" y="163.5" width="25.2" height="23.4" fill="#a6d3ea"/><rect x="50.4" y="163.5" width="25.2" height="23.4" fill="#a6d3ea"/><rect x="100.8" y="163.5" width="25.2" height="23.4" fill="#a6d3ea"/><rect x="100.8" y="186.8" width="25.2" height="23.4" fill="#a6d3ea"/><rect x="126.1" y="186.8" width="25.2" height="23.4" fill="#a6d3ea"/><rect x="176.5" y="186.8" width="25.2" height="23.4" fill="#a6d3ea"/><rect x="277.3" y="186.8" width="25.2" height="23.4" fill="#a6d3ea"/><rect x="0.0" y="210.2" width="25.2" height="23.4" fill="#a6d3ea"/><rect x="176.5" y="210.2" width="25.2" height="23.4" fill="#a6d3ea"/><rect x="75.6" y="233.5" width="25.2" height="23.4" fill="#a6d3ea"/><rect x="0.0" y="256.9" width="25.2" height="23.4" fill="#a6d3ea"/><rect x="25.2" y="256.9" width="25.2" height="23.4" fill="#a6d3ea"/><rect x="176.5" y="256.9" width="25.2" height="23.4" fill="#a6d3ea"/></g><g stroke="#d8d8d8" stroke-width="1" opacity=".3"><path d="M25.2 0 V280.2"/><path d="M50.4 0 V280.2"/><path d="M75.6 0 V280.2"/><path d="M100.8 0 V280.2"/><path d="M126.1 0 V280.2"/><path d="M151.3 0 V280.2"/><path d="M176.5 0 V280.2"/><path d="M201.7 0 V280.2"/><path d="M226.9 0 V280.2"/><path d="M252.1 0 V280.2"/><path d="M277.3 0 V280.2"/><path d="M0 23.4 H302.5"/><path d="M0 46.7 H302.5"/><path d="M0 70.1 H302.5"/><path d="M0 93.4 H302.5"/><path d="M0 116.8 H302.5"/><path d="M0 140.1 H302.5"/><path d="M0 163.5 H302.5"/><path d="M0 186.8 H302.5"/><path d="M0 210.2 H302.5"/><path d="M0 233.5 H302.5"/><path d="M0 256.9 H302.5"/></g><g filter="url(#bl2)" font-family="Liberation Sans, sans-serif" font-weight="700" font-size="11" fill="#262626" text-anchor="middle"><text x="113.9" y="16.8">S</text><text x="164.4" y="16.8">E</text><text x="38.3" y="40.2">A</text><text x="63.5" y="40.2">H</text><text x="88.7" y="40.2">O</text><text x="113.9" y="40.2">I</text><text x="164.4" y="40.2">R</text><text x="189.6" y="40.2">A</text><text x="214.8" y="40.2">D</text><text x="240.0" y="40.2">L</text><text x="290.4" y="40.2">D</text><text x="88.7" y="63.5">U</text><text x="164.4" y="63.5">N</text><text x="214.8" y="63.5">O</text><text x="240.0" y="63.5">E</text><text x="265.2" y="63.5">R</text><text x="290.4" y="63.5">E</text><text x="88.7" y="86.9">I</text><text x="164.4" y="86.9">T</text><text x="189.6" y="86.9">U</text><text x="214.8" y="86.9">N</text><text x="240.0" y="86.9">N</text><text x="265.2" y="86.9">E</text><text x="290.4" y="86.9">L</text><text x="113.9" y="110.2">O</text><text x="139.2" y="110.2">N</text><text x="164.4" y="110.2">E</text><text x="214.8" y="110.2">A</text><text x="113.9" y="133.6">R</text><text x="189.6" y="133.6">J</text><text x="214.8" y="133.6">U</text><text x="240.0" y="133.6">B</text><text x="265.2" y="133.6">E</text><text x="290.4" y="133.6">L</text><text x="38.3" y="156.9">O</text><text x="63.5" y="156.9">K</text><text x="88.7" y="156.9">T</text><text x="113.9" y="156.9">A</text><text x="139.2" y="156.9">N</text><text x="189.6" y="156.9">A</text><text x="240.0" y="156.9">U</text><text x="290.4" y="156.9">S</text><text x="139.2" y="180.3">K</text><text x="164.4" y="180.3">O</text><text x="189.6" y="180.3">N</text><text x="214.8" y="180.3">Z</text><text x="240.0" y="180.3">E</text><text x="265.2" y="180.3">R</text><text x="290.4" y="180.3">T</text><text x="164.4" y="203.6">F</text><text x="214.8" y="203.6">I</text><text x="240.0" y="203.6">C</text><text x="265.2" y="203.6">E</text><text x="164.4" y="227.0">F</text><text x="214.8" y="227.0">T</text><text x="240.0" y="227.0">H</text><text x="265.2" y="227.0">I</text><text x="290.4" y="227.0">N</text><text x="13.1" y="250.3">V</text><text x="38.3" y="250.3">E</text><text x="63.5" y="250.3">S</text><text x="113.9" y="250.3">T</text><text x="139.2" y="250.3">E</text><text x="164.4" y="250.3">E</text><text x="189.6" y="250.3">T</text><text x="214.8" y="250.3">A</text><text x="240.0" y="250.3">S</text><text x="265.2" y="250.3">S</text><text x="290.4" y="250.3">E</text><text x="164.4" y="273.7">N</text><text x="214.8" y="273.7">T</text><text x="240.0" y="273.7">E</text><text x="265.2" y="273.7">E</text><text x="290.4" y="273.7">R</text><rect x="7.0" y="6.0" width="11" height="1.2" fill="#7f9fb4" opacity=".55"/><rect x="7.0" y="10.0" width="9" height="1.2" fill="#7f9fb4" opacity=".55"/><rect x="7.0" y="14.0" width="11" height="1.2" fill="#7f9fb4" opacity=".55"/><rect x="57.4" y="6.0" width="11" height="1.2" fill="#7f9fb4" opacity=".55"/><rect x="57.4" y="10.0" width="9" height="1.2" fill="#7f9fb4" opacity=".55"/><rect x="57.4" y="14.0" width="11" height="1.2" fill="#7f9fb4" opacity=".55"/><rect x="82.6" y="6.0" width="11" height="1.2" fill="#7f9fb4" opacity=".55"/><rect x="82.6" y="10.0" width="9" height="1.2" fill="#7f9fb4" opacity=".55"/><rect x="82.6" y="14.0" width="11" height="1.2" fill="#7f9fb4" opacity=".55"/><rect x="133.1" y="6.0" width="11" height="1.2" fill="#7f9fb4" opacity=".55"/><rect x="133.1" y="10.0" width="9" height="1.2" fill="#7f9fb4" opacity=".55"/><rect x="133.1" y="14.0" width="11" height="1.2" fill="#7f9fb4" opacity=".55"/><rect x="183.5" y="6.0" width="11" height="1.2" fill="#7f9fb4" opacity=".55"/><rect x="183.5" y="10.0" width="9" height="1.2" fill="#7f9fb4" opacity=".55"/><rect x="183.5" y="14.0" width="11" height="1.2" fill="#7f9fb4" opacity=".55"/><rect x="208.7" y="6.0" width="11" height="1.2" fill="#7f9fb4" opacity=".55"/><rect x="208.7" y="10.0" width="9" height="1.2" fill="#7f9fb4" opacity=".55"/><rect x="208.7" y="14.0" width="11" height="1.2" fill="#7f9fb4" opacity=".55"/><rect x="259.1" y="6.0" width="11" height="1.2" fill="#7f9fb4" opacity=".55"/><rect x="259.1" y="10.0" width="9" height="1.2" fill="#7f9fb4" opacity=".55"/><rect x="259.1" y="14.0" width="11" height="1.2" fill="#7f9fb4" opacity=".55"/><rect x="284.3" y="6.0" width="11" height="1.2" fill="#7f9fb4" opacity=".55"/><rect x="284.3" y="10.0" width="9" height="1.2" fill="#7f9fb4" opacity=".55"/><rect x="284.3" y="14.0" width="11" height="1.2" fill="#7f9fb4" opacity=".55"/><rect x="7.0" y="29.4" width="11" height="1.2" fill="#7f9fb4" opacity=".55"/><rect x="7.0" y="33.4" width="9" height="1.2" fill="#7f9fb4" opacity=".55"/><rect x="7.0" y="37.4" width="11" height="1.2" fill="#7f9fb4" opacity=".55"/><rect x="133.1" y="29.4" width="11" height="1.2" fill="#7f9fb4" opacity=".55"/><rect x="133.1" y="33.4" width="9" height="1.2" fill="#7f9fb4" opacity=".55"/><rect x="133.1" y="37.4" width="11" height="1.2" fill="#7f9fb4" opacity=".55"/><rect x="259.1" y="29.4" width="11" height="1.2" fill="#7f9fb4" opacity=".55"/><rect x="259.1" y="33.4" width="9" height="1.2" fill="#7f9fb4" opacity=".55"/><rect x="259.1" y="37.4" width="11" height="1.2" fill="#7f9fb4" opacity=".55"/><rect x="7.0" y="52.7" width="11" height="1.2" fill="#7f9fb4" opacity=".55"/><rect x="7.0" y="56.7" width="9" height="1.2" fill="#7f9fb4" opacity=".55"/><rect x="7.0" y="60.7" width="11" height="1.2" fill="#7f9fb4" opacity=".55"/><rect x="183.5" y="52.7" width="11" height="1.2" fill="#7f9fb4" opacity=".55"/><rect x="183.5" y="56.7" width="9" height="1.2" fill="#7f9fb4" opacity=".55"/><rect x="183.5" y="60.7" width="11" height="1.2" fill="#7f9fb4" opacity=".55"/><rect x="7.0" y="76.1" width="11" height="1.2" fill="#7f9fb4" opacity=".55"/><rect x="7.0" y="80.1" width="9" height="1.2" fill="#7f9fb4" opacity=".55"/><rect x="7.0" y="84.1" width="11" height="1.2" fill="#7f9fb4" opacity=".55"/><rect x="133.1" y="76.1" width="11" height="1.2" fill="#7f9fb4" opacity=".55"/><rect x="133.1" y="80.1" width="9" height="1.2" fill="#7f9fb4" opacity=".55"/><rect x="133.1" y="84.1" width="11" height="1.2" fill="#7f9fb4" opacity=".55"/><rect x="7.0" y="99.4" width="11" height="1.2" fill="#7f9fb4" opacity=".55"/><rect x="7.0" y="103.4" width="9" height="1.2" fill="#7f9fb4" opacity=".55"/><rect x="7.0" y="107.4" width="11" height="1.2" fill="#7f9fb4" opacity=".55"/><rect x="32.2" y="99.4" width="11" height="1.2" fill="#7f9fb4" opacity=".55"/><rect x="32.2" y="103.4" width="9" height="1.2" fill="#7f9fb4" opacity=".55"/><rect x="32.2" y="107.4" width="11" height="1.2" fill="#7f9fb4" opacity=".55"/><rect x="82.6" y="99.4" width="11" height="1.2" fill="#7f9fb4" opacity=".55"/><rect x="82.6" y="103.4" width="9" height="1.2" fill="#7f9fb4" opacity=".55"/><rect x="82.6" y="107.4" width="11" height="1.2" fill="#7f9fb4" opacity=".55"/><rect x="183.5" y="99.4" width="11" height="1.2" fill="#7f9fb4" opacity=".55"/><rect x="183.5" y="103.4" width="9" height="1.2" fill="#7f9fb4" opacity=".55"/><rect x="183.5" y="107.4" width="11" height="1.2" fill="#7f9fb4" opacity=".55"/><rect x="233.9" y="99.4" width="11" height="1.2" fill="#7f9fb4" opacity=".55"/><rect x="233.9" y="103.4" width="9" height="1.2" fill="#7f9fb4" opacity=".55"/><rect x="233.9" y="107.4" width="11" height="1.2" fill="#7f9fb4" opacity=".55"/><rect x="284.3" y="99.4" width="11" height="1.2" fill="#7f9fb4" opacity=".55"/><rect x="284.3" y="103.4" width="9" height="1.2" fill="#7f9fb4" opacity=".55"/><rect x="284.3" y="107.4" width="11" height="1.2" fill="#7f9fb4" opacity=".55"/><rect x="82.6" y="122.8" width="11" height="1.2" fill="#7f9fb4" opacity=".55"/><rect x="82.6" y="126.8" width="9" height="1.2" fill="#7f9fb4" opacity=".55"/><rect x="82.6" y="130.8" width="11" height="1.2" fill="#7f9fb4" opacity=".55"/><rect x="133.1" y="122.8" width="11" height="1.2" fill="#7f9fb4" opacity=".55"/><rect x="133.1" y="126.8" width="9" height="1.2" fill="#7f9fb4" opacity=".55"/><rect x="133.1" y="130.8" width="11" height="1.2" fill="#7f9fb4" opacity=".55"/><rect x="158.3" y="122.8" width="11" height="1.2" fill="#7f9fb4" opacity=".55"/><rect x="158.3" y="126.8" width="9" height="1.2" fill="#7f9fb4" opacity=".55"/><rect x="158.3" y="130.8" width="11" height="1.2" fill="#7f9fb4" opacity=".55"/><rect x="7.0" y="146.1" width="11" height="1.2" fill="#7f9fb4" opacity=".55"/><rect x="7.0" y="150.1" width="9" height="1.2" fill="#7f9fb4" opacity=".55"/><rect x="7.0" y="154.1" width="11" height="1.2" fill="#7f9fb4" opacity=".55"/><rect x="158.3" y="146.1" width="11" height="1.2" fill="#7f9fb4" opacity=".55"/><rect x="158.3" y="150.1" width="9" height="1.2" fill="#7f9fb4" opacity=".55"/><rect x="158.3" y="154.1" width="11" height="1.2" fill="#7f9fb4" opacity=".55"/><rect x="208.7" y="146.1" width="11" height="1.2" fill="#7f9fb4" opacity=".55"/><rect x="208.7" y="150.1" width="9" height="1.2" fill="#7f9fb4" opacity=".55"/><rect x="208.7" y="154.1" width="11" height="1.2" fill="#7f9fb4" opacity=".55"/><rect x="259.1" y="146.1" width="11" height="1.2" fill="#7f9fb4" opacity=".55"/><rect x="259.1" y="150.1" width="9" height="1.2" fill="#7f9fb4" opacity=".55"/><rect x="259.1" y="154.1" width="11" height="1.2" fill="#7f9fb4" opacity=".55"/><rect x="7.0" y="169.5" width="11" height="1.2" fill="#7f9fb4" opacity=".55"/><rect x="7.0" y="173.5" width="9" height="1.2" fill="#7f9fb4" opacity=".55"/><rect x="7.0" y="177.5" width="11" height="1.2" fill="#7f9fb4" opacity=".55"/><rect x="57.4" y="169.5" width="11" height="1.2" fill="#7f9fb4" opacity=".55"/><rect x="57.4" y="173.5" width="9" height="1.2" fill="#7f9fb4" opacity=".55"/><rect x="57.4" y="177.5" width="11" height="1.2" fill="#7f9fb4" opacity=".55"/><rect x="107.8" y="169.5" width="11" height="1.2" fill="#7f9fb4" opacity=".55"/><rect x="107.8" y="173.5" width="9" height="1.2" fill="#7f9fb4" opacity=".55"/><rect x="107.8" y="177.5" width="11" height="1.2" fill="#7f9fb4" opacity=".55"/><rect x="107.8" y="192.8" width="11" height="1.2" fill="#7f9fb4" opacity=".55"/><rect x="107.8" y="196.8" width="9" height="1.2" fill="#7f9fb4" opacity=".55"/><rect x="107.8" y="200.8" width="11" height="1.2" fill="#7f9fb4" opacity=".55"/><rect x="133.1" y="192.8" width="11" height="1.2" fill="#7f9fb4" opacity=".55"/><rect x="133.1" y="196.8" width="9" height="1.2" fill="#7f9fb4" opacity=".55"/><rect x="133.1" y="200.8" width="11" height="1.2" fill="#7f9fb4" opacity=".55"/><rect x="183.5" y="192.8" width="11" height="1.2" fill="#7f9fb4" opacity=".55"/><rect x="183.5" y="196.8" width="9" height="1.2" fill="#7f9fb4" opacity=".55"/><rect x="183.5" y="200.8" width="11" height="1.2" fill="#7f9fb4" opacity=".55"/><rect x="284.3" y="192.8" width="11" height="1.2" fill="#7f9fb4" opacity=".55"/><rect x="284.3" y="196.8" width="9" height="1.2" fill="#7f9fb4" opacity=".55"/><rect x="284.3" y="200.8" width="11" height="1.2" fill="#7f9fb4" opacity=".55"/><rect x="7.0" y="216.2" width="11" height="1.2" fill="#7f9fb4" opacity=".55"/><rect x="7.0" y="220.2" width="9" height="1.2" fill="#7f9fb4" opacity=".55"/><rect x="7.0" y="224.2" width="11" height="1.2" fill="#7f9fb4" opacity=".55"/><rect x="183.5" y="216.2" width="11" height="1.2" fill="#7f9fb4" opacity=".55"/><rect x="183.5" y="220.2" width="9" height="1.2" fill="#7f9fb4" opacity=".55"/><rect x="183.5" y="224.2" width="11" height="1.2" fill="#7f9fb4" opacity=".55"/><rect x="82.6" y="239.5" width="11" height="1.2" fill="#7f9fb4" opacity=".55"/><rect x="82.6" y="243.5" width="9" height="1.2" fill="#7f9fb4" opacity=".55"/><rect x="82.6" y="247.5" width="11" height="1.2" fill="#7f9fb4" opacity=".55"/><rect x="7.0" y="262.9" width="11" height="1.2" fill="#7f9fb4" opacity=".55"/><rect x="7.0" y="266.9" width="9" height="1.2" fill="#7f9fb4" opacity=".55"/><rect x="7.0" y="270.9" width="11" height="1.2" fill="#7f9fb4" opacity=".55"/><rect x="32.2" y="262.9" width="11" height="1.2" fill="#7f9fb4" opacity=".55"/><rect x="32.2" y="266.9" width="9" height="1.2" fill="#7f9fb4" opacity=".55"/><rect x="32.2" y="270.9" width="11" height="1.2" fill="#7f9fb4" opacity=".55"/><rect x="183.5" y="262.9" width="11" height="1.2" fill="#7f9fb4" opacity=".55"/><rect x="183.5" y="266.9" width="9" height="1.2" fill="#7f9fb4" opacity=".55"/><rect x="183.5" y="270.9" width="11" height="1.2" fill="#7f9fb4" opacity=".55"/></g><rect x="0" y="0" width="302.5" height="280.2" fill="none" stroke="#222" stroke-width="1"/></svg>
<div style="left:868px;top:399px;width:302px;height:1px;background:#d0d0d0;"></div>
<div style="left:845.9px;top:92.6px;width:341px;height:324.4px;border:9px solid #08e010;border-radius:4.5px;"></div>
<svg style="left:1187.5px;top:156px" width="173" height="160" viewBox="0 0 173 160"><defs><linearGradient id="fr" x1="0" y1="0" x2="1" y2="0"><stop offset="0" stop-color="#f8981c"/><stop offset=".45" stop-color="#f8981c"/><stop offset=".62" stop-color="#f0200c"/><stop offset="1" stop-color="#f01008"/></linearGradient><linearGradient id="tx" x1="0" y1="0" x2="0" y2="1"><stop offset="0" stop-color="#f04a10"/><stop offset="1" stop-color="#f8a81c"/></linearGradient><clipPath id="ph"><rect x="5" y="33" width="162" height="95"/></clipPath><filter id="bl3"><feGaussianBlur stdDeviation="0.7"/></filter></defs><rect x=".5" y=".5" width="171.5" height="158.5" rx="2" fill="url(#fr)" stroke="#201008" stroke-width="1"/><rect x="5" y="5.5" width="162" height="22" fill="#fff" stroke="#201008" stroke-width="1"/><rect x="5" y="33" width="162" height="95" fill="#fff" stroke="#201008" stroke-width="1"/><rect x="5" y="133.5" width="162" height="21" fill="#fff" stroke="#201008" stroke-width="1"/><rect x="0" y="28.5" width="172" height="3" fill="url(#fr)"/><rect x=".5" y="31" width="4.5" height="99" fill="#f3260e"/><rect x="167" y="31" width="5" height="99" fill="#f3160a"/><g clip-path="url(#ph)" filter="url(#bl3)"><g transform="translate(98.5 77) scale(1.0)"><defs><radialGradient id="hd" cx=".5" cy=".3" r=".7"><stop offset="0" stop-color="#e3dbd8"/><stop offset=".6" stop-color="#d6c2ba"/><stop offset="1" stop-color="#b9a9a4"/></radialGradient></defs><path d="M-68 53 Q-58 34 -33 25 L-27 17 Q-24 12 -20 18 L20 18 Q25 12 28 17 L34 25 Q58 34 64 53 Z" fill="#5f5d5d"/><path d="M-24 10 Q-22 40 0 52 Q22 40 24 10 Z" fill="#454444"/><path d="M-14 40 L-11 53 M14 40 L12 53" stroke="#d8d8d8" stroke-width="1.4"/><path d="M0 -26 Q23 -26 24.5 2 Q25.5 24 21 37 Q13 50 0 50 Q-13 50 -21 37 Q-25.5 24 -24.5 2 Q-23 -26 0 -26 Z" fill="url(#hd)"/><path d="M-24 14 Q-23 42 0 50 Q23 42 24 14 Q15 30 0 27 Q-15 30 -24 14 Z" fill="#e9e5e2"/><ellipse cx="1" cy="20" rx="5.5" ry="7" fill="#dba9a4"/><path d="M-6 33 Q0 31 7 33" stroke="#a89a9c" stroke-width="1.6" fill="none"/><path d="M-21 8 L-2 10 L-3 17 Q-12 21 -19 16 Z M4 10 L22 8 L20 16 Q12 21 4 17 Z" fill="#9d9398" fill-opacity=".3" stroke="#3a2b2a" stroke-width="1.1"/><path d="M-22 7 L-2 9.5 L4 9.5 L23 7" stroke="#33262a" stroke-width="2.2" fill="none"/></g></g><circle cx="26" cy="50.5" r="13.5" fill="#120a06" stroke="#e81c0c" stroke-width="1.8"/><path d="M17 58 Q18 48 26 47 Q34 48 35 58 Z" fill="#e9c99a"/><ellipse cx="26" cy="44" rx="4" ry="4.2" fill="#e9c99a"/><ellipse cx="26.5" cy="40.5" rx="7" ry="2" fill="#d9b27a"/><path d="M64 52 L66 45 L70 44 L73 38 L76 39 L75 44 L80 44 L78 52 Z" fill="#f8a01c" stroke="#d81c0c" stroke-width="1.5" stroke-linejoin="round"/><path d="M82 52 L84 47 L90 46 L95 42 L99 43 L95 47 L96 49 L91 52 Z" fill="#f8a01c" stroke="#d81c0c" stroke-width="1.5" stroke-linejoin="round"/><path d="M101 51 L104 47 L107 38 Q112 35 114 40 L114 47 L117 51 Z" fill="#f8a01c" stroke="#d81c0c" stroke-width="1.5" stroke-linejoin="round"/><path d="M120 45 L128 44 L128 42 L134 46 L131 52 L124 52 L124 49 L120 49 Z" fill="#f8a01c" stroke="#d81c0c" stroke-width="1.5" stroke-linejoin="round"/><path d="M142 38 L146 38 L141 49 L138.5 49 Z M137.4 50.5 L140.2 50.5 L139.5 53 L136.7 53 Z" fill="#f8601c" stroke="#d81c0c" stroke-width="1.1"/><g font-family="Liberation Sans, sans-serif" font-weight="700" font-style="italic" paint-order="stroke" stroke="#200c06" stroke-width="2.2" fill="url(#tx)"><text x="86" y="24.2" font-size="22" text-anchor="middle" textLength="158" lengthAdjust="spacingAndGlyphs">KREUZWORTRÄTSEL</text><text x="86" y="148.6" font-size="13" text-anchor="middle" textLength="157" lengthAdjust="spacingAndGlyphs">YOUTUBE.COM/@SLADDIZOCKT</text></g></svg>
<span style="left:1198.0px;top:320.2px;height:31px;line-height:31px;font-size:25px;color:#a9d7ee;letter-spacing:0.08px;">Counter</span>
<span style="left:1200.5px;top:349.4px;height:36px;line-height:36px;font-size:30px;color:#a9d7ee;letter-spacing:0.08px;">06:52</span>
<div style="left:730px;top:417px;width:781px;height:2px;background:#454852;border-radius:1px;"></div>
<div style="left:725.5px;top:412.3px;width:6px;height:11px;background:#fafafa;border:1px solid #0a0a0a;border-radius:1.5px;"></div>
<svg style="left:729px;top:439px;" width="19" height="15" viewBox="0 0 19 15"><rect x="2" y="2" width="15" height="11" fill="none" stroke="#7d7d80" stroke-width="1.2"/><rect x="0.5" y="0.5" width="3" height="3" fill="#212126" stroke="#7d7d80" stroke-width=".9"/><rect x="0.5" y="11.5" width="3" height="3" fill="#212126" stroke="#7d7d80" stroke-width=".9"/><rect x="15.5" y="0.5" width="3" height="3" fill="#212126" stroke="#7d7d80" stroke-width=".9"/><rect x="15.5" y="11.5" width="3" height="3" fill="#212126" stroke="#7d7d80" stroke-width=".9"/></svg>
<svg style="left:759.5px;top:444.5px;" width="10" height="6" viewBox="0 0 10 6"><path d="M1 1 L5 5 L9 1" fill="none" stroke="#7d7d80" stroke-width="1.4"/></svg>
<svg style="left:871px;top:441.5px;" width="8" height="11" viewBox="0 0 8 11"><path d="M6.5 1 L1.5 5.5 L6.5 10" fill="none" stroke="#7d7d80" stroke-width="1.4"/></svg>
<div style="left:885.5px;top:443px;width:9px;height:9px;background:#8a8a8c;border-radius:50%;"></div>
<svg style="left:903px;top:441.5px;" width="8" height="11" viewBox="0 0 8 11"><path d="M1.5 1 L6.5 5.5 L1.5 10" fill="none" stroke="#7d7d80" stroke-width="1.4"/></svg>
<svg style="left:1002px;top:440px;" width="21" height="13" viewBox="0 0 21 13"><rect x="0" y=".5" width="2" height="12" fill="#8e8e90"/><path d="M11 .5 L3 6.5 L11 12.5 Z M20 .5 L12 6.5 L20 12.5 Z" fill="#8e8e90"/></svg>
<svg style="left:1039px;top:440px;" width="11" height="13" viewBox="0 0 11 13"><path d="M10.5 .5 L.5 6.5 L10.5 12.5 Z" fill="#8e8e90"/></svg>
<div style="left:1069.5px;top:440px;width:13px;height:13px;background:#8e8e90;border-radius:1px;"></div>
<svg style="left:1101px;top:440px;" width="12" height="13" viewBox="0 0 12 13"><path d="M.5 .5 L11.5 6.5 L.5 12.5 Z" fill="#8e8e90"/></svg>
<svg style="left:1130px;top:440px;" width="21" height="13" viewBox="0 0 21 13"><path d="M0 .5 L8 6.5 L0 12.5 Z M9 .5 L17 6.5 L9 12.5 Z" fill="#8e8e90"/><rect x="18.5" y=".5" width="2" height="12" fill="#8e8e90"/></svg>
<svg style="left:1168px;top:438px;" width="22" height="16" viewBox="0 0 22 16"><path d="M6 4.5 H16 A4.5 4.5 0 0 1 16 13.5 H6 A4.5 4.5 0 0 1 6 4.5" fill="none" stroke="#8e8e90" stroke-width="1.6"/><rect x="8" y="2" width="7" height="5" fill="#212126"/><path d="M10 .6 L14.6 4.5 L10 8.4" fill="none" stroke="#8e8e90" stroke-width="1.6"/></svg>
<svg style="left:1413px;top:439px;" width="22" height="15" viewBox="0 0 22 15"><rect x="2.8" y="2.2" width="16.4" height="10.6" rx="2.6" fill="none" stroke="#85858a" stroke-width="1.5"/><rect x="1" y="5" width="4" height="5" fill="#212126"/><rect x="17" y="5" width="4" height="5" fill="#212126"/><path d="M.8 4.8 L5 7.5 L.8 10.2 Z M21.2 4.8 L17 7.5 L21.2 10.2 Z" fill="#85858a"/></svg>
<svg style="left:1455.5px;top:440.5px;" width="12" height="12" viewBox="0 0 12 12"><path d="M0 .5 L9 6 L0 11.5 Z" fill="#8e8e90"/><rect x="9.3" y=".5" width="1.8" height="11" fill="#8e8e90"/></svg>
<svg style="left:1492px;top:440.5px;" width="12" height="12" viewBox="0 0 12 12"><rect x=".2" y=".5" width="1.8" height="11" fill="#8e8e90"/><path d="M11.5 .5 L2.5 6 L11.5 11.5 Z" fill="#8e8e90"/></svg>
<div style="left:1532px;top:88px;width:419px;height:23px;background:#212126;"></div>
<div style="left:1532px;top:111px;width:419px;height:1px;background:#0b0b0d;"></div>
<div style="left:1915px;top:88px;width:1px;height:23px;background:#0b0b0d;"></div>
<span style="left:1540.5px;top:90.9px;height:19px;line-height:19px;font-size:13px;color:#f2f2f2;font-weight:700;letter-spacing:-0.07px;">Timeline - 88.mkv</span>
<svg style="left:1925px;top:97.5px;" width="18" height="4" viewBox="0 0 18 4"><circle cx="2" cy="2" r="1.7" fill="#8a8a8a"/><circle cx="9" cy="2" r="1.7" fill="#8a8a8a"/><circle cx="16" cy="2" r="1.7" fill="#8a8a8a"/></svg>
<div style="left:1532px;top:163.5px;width:419px;height:1px;background:#0b0b0d;"></div>
<div style="left:1546px;top:161.5px;width:64px;height:2.5px;background:#e5463a;"></div>
<span style="left:1562.7px;top:145.0px;height:18px;line-height:18px;font-size:12px;color:#f0f0f0;letter-spacing:-0.09px;">Video</span>
<span style="left:1625.7px;top:145.0px;height:18px;line-height:18px;font-size:12px;color:#9a9a9a;letter-spacing:0.06px;">Audio</span>
<span style="left:1689.1px;top:145.0px;height:18px;line-height:18px;font-size:12px;color:#4e4e52;letter-spacing:-0.49px;">Effects</span>
<span style="left:1748.3px;top:145.0px;height:18px;line-height:18px;font-size:12px;color:#4e4e52;letter-spacing:-0.12px;">Transition</span>
<span style="left:1826.0px;top:145.0px;height:18px;line-height:18px;font-size:12px;color:#4e4e52;letter-spacing:-0.47px;">Image</span>
<span style="left:1897.0px;top:145.0px;height:18px;line-height:18px;font-size:12px;color:#9a9a9a;letter-spacing:-0.34px;">File</span>
<svg style="left:1567px;top:123px;" width="22" height="16" viewBox="0 0 22 16"><defs><linearGradient id="vg" x1="0" y1="0" x2="1" y2="1"><stop offset="0" stop-color="#1a1a1d"/><stop offset="1" stop-color="#48484c"/></linearGradient></defs><rect x=".8" y=".8" width="20.4" height="14.4" rx="1" fill="url(#vg)" stroke="#f2f2f2" stroke-width="1.5"/><rect x="3" y="3.2" width="1.6" height="1.6" fill="#f2f2f2"/><rect x="3" y="7.2" width="1.6" height="1.6" fill="#f2f2f2"/><rect x="3" y="11.2" width="1.6" height="1.6" fill="#f2f2f2"/><rect x="17.4" y="3.2" width="1.6" height="1.6" fill="#f2f2f2"/><rect x="17.4" y="7.2" width="1.6" height="1.6" fill="#f2f2f2"/><rect x="17.4" y="11.2" width="1.6" height="1.6" fill="#f2f2f2"/></svg>
<svg style="left:1631px;top:122px;" width="18" height="18" viewBox="0 0 18 18"><path d="M5 3.8 L16.5 .8 L16.5 12.5 A3 2.5 0 1 1 14.8 10.2 L14.8 4.6 L6.7 6.7 L6.7 14.8 A3 2.5 0 1 1 5 12.5 Z" fill="#8e8e90"/></svg>
<svg style="left:1695px;top:121px;" width="22" height="20" viewBox="0 0 22 20"><path d="M2.5 18 L10.5 8" stroke="#4a4a4e" stroke-width="2.4" stroke-linecap="round"/><path d="M14 0 L14.7 2.6 L17.3 3.3 L14.7 4 L14 6.6 L13.3 4 L10.7 3.3 L13.3 2.6 Z M18.5 6 L19.1 8 L21 8.6 L19.1 9.2 L18.5 11.2 L17.9 9.2 L16 8.6 L17.9 8 Z M14.5 11 L15 12.6 L16.6 13.1 L15 13.6 L14.5 15.2 L14 13.6 L12.4 13.1 L14 12.6 Z" fill="#4a4a4e"/></svg>
<svg style="left:1763px;top:123px;" width="22" height="16" viewBox="0 0 22 16"><rect x=".6" y=".6" width="20.8" height="14.8" rx="1" fill="#2c2c31" stroke="#424246" stroke-width="1.2"/><path d="M2.5 2.5 H19.5 L11 8 Z M2.5 13.5 H19.5 L11 8 Z" fill="#48484c"/></svg>
<svg style="left:1831px;top:123px;" width="22" height="16" viewBox="0 0 22 16"><rect x=".6" y=".6" width="20.8" height="14.8" rx="1" fill="#2c2c31" stroke="#424246" stroke-width="1.2"/><circle cx="5" cy="4.5" r="1" fill="#48484c"/><path d="M2.5 11.5 L7.5 8 L11 10.5 L15 7.5 L19.5 10" fill="none" stroke="#48484c" stroke-width="1.1"/></svg>
<svg style="left:1893px;top:121px;" width="26" height="20" viewBox="0 0 26 20"><rect x=".8" y="3.5" width="3" height="3" fill="none" stroke="#7a7a7e" stroke-width="1"/><rect x=".8" y="8.5" width="3" height="3" fill="none" stroke="#7a7a7e" stroke-width="1"/><rect x=".8" y="13.5" width="3" height="3" fill="none" stroke="#7a7a7e" stroke-width="1"/><path d="M6 2.5 L12 1 L18 4 L18 13 L10 13.5 L6 11 Z" fill="#5c5c60"/><rect x="11.5" y="7" width="9" height="9" rx="1.5" fill="#2a2a2f" stroke="#7a7a7e" stroke-width="1.2" transform="rotate(-10 16 11)"/><path d="M20.5 7.5 L24.5 5.5 L25 14 L21.5 13.5 Z" fill="none" stroke="#7a7a7e" stroke-width="1.1"/></svg>
<div style="left:1547px;top:173.8px;width:24px;height:13px;background:#141417;border-radius:7px;"></div>
<div style="left:1559.5px;top:176.10000000000002px;width:8.6px;height:8.6px;background:#e5463a;border-radius:50%;"></div>
<span style="left:1581.0px;top:170.9px;height:19px;line-height:19px;font-size:13px;color:#f2f2f2;letter-spacing:0.31px;">Transform</span>
<svg style="left:1889.3px;top:174.3px;" width="10" height="10" viewBox="0 0 10 10"><path d="M5 .3 L9.7 5 L5 9.7 L.3 5 Z" fill="#a8a8a8"/></svg>
<svg style="left:1917.5px;top:171.8px;" width="15" height="15" viewBox="0 0 15 15"><path d="M3.2 4.2 A6 6 0 1 1 1.6 8.6" fill="none" stroke="#78787c" stroke-width="1.2"/><path d="M.6 1.8 L3.2 4.6 L6.4 3.2" fill="none" stroke="#78787c" stroke-width="1.2"/><path d="M5.2 7.6 H9.8 M7.5 5.3 V9.9" stroke="#78787c" stroke-width="1.1"/></svg>
<span style="left:1632.0px;top:202.1px;height:18px;line-height:18px;font-size:12px;color:#bdbdbd;letter-spacing:-0.17px;">Zoom</span>
<span style="left:1620.0px;top:227.1px;height:18px;line-height:18px;font-size:12px;color:#bdbdbd;letter-spacing:-0.09px;">Position</span>
<span style="left:1585.0px;top:252.1px;height:18px;line-height:18px;font-size:12px;color:#bdbdbd;letter-spacing:-0.07px;">Rotation Angle</span>
<span style="left:1594.0px;top:277.1px;height:18px;line-height:18px;font-size:12px;color:#bdbdbd;letter-spacing:-0.06px;">Anchor Point</span>
<span style="left:1636.0px;top:302.1px;height:18px;line-height:18px;font-size:12px;color:#bdbdbd;letter-spacing:-0.13px;">Pitch</span>
<span style="left:1641.0px;top:327.1px;height:18px;line-height:18px;font-size:12px;color:#bdbdbd;letter-spacing:-0.48px;">Yaw</span>
<span style="left:1643.0px;top:352.8px;height:18px;line-height:18px;font-size:12px;color:#bdbdbd;letter-spacing:-0.09px;">Flip</span>
<span style="left:1675.0px;top:203.1px;height:17px;line-height:17px;font-size:11px;color:#a8a8a8;">X</span>
<span style="left:1799.0px;top:203.1px;height:17px;line-height:17px;font-size:11px;color:#a8a8a8;">Y</span>
<div style="left:1688px;top:200.49999999999997px;width:54px;height:19.6px;background:#18181b;border:1px solid #0c0c0e;border-radius:3.5px;"></div>
<span style="left:1699.5px;top:200.9px;height:19px;line-height:19px;font-size:13px;color:#ececec;letter-spacing:-0.31px;">1.000</span>
<div style="left:1812px;top:200.49999999999997px;width:54px;height:19.6px;background:#18181b;border:1px solid #0c0c0e;border-radius:3.5px;"></div>
<span style="left:1823.5px;top:200.9px;height:19px;line-height:19px;font-size:13px;color:#ececec;letter-spacing:-0.31px;">1.000</span>
<span style="left:1675.0px;top:228.1px;height:17px;line-height:17px;font-size:11px;color:#a8a8a8;">X</span>
<span style="left:1799.0px;top:228.1px;height:17px;line-height:17px;font-size:11px;color:#a8a8a8;">Y</span>
<div style="left:1688px;top:225.49999999999997px;width:54px;height:19.6px;background:#18181b;border:1px solid #0c0c0e;border-radius:3.5px;"></div>
<span style="left:1699.5px;top:225.9px;height:19px;line-height:19px;font-size:13px;color:#ececec;letter-spacing:-0.31px;">0.000</span>
<div style="left:1812px;top:225.49999999999997px;width:54px;height:19.6px;background:#18181b;border:1px solid #0c0c0e;border-radius:3.5px;"></div>
<span style="left:1823.5px;top:225.9px;height:19px;line-height:19px;font-size:13px;color:#ececec;letter-spacing:-0.31px;">0.000</span>
<span style="left:1675.0px;top:278.2px;height:17px;line-height:17px;font-size:11px;color:#a8a8a8;">X</span>
<span style="left:1799.0px;top:278.2px;height:17px;line-height:17px;font-size:11px;color:#a8a8a8;">Y</span>
<div style="left:1688px;top:275.5px;width:54px;height:19.6px;background:#18181b;border:1px solid #0c0c0e;border-radius:3.5px;"></div>
<span style="left:1699.5px;top:276.0px;height:19px;line-height:19px;font-size:13px;color:#ececec;letter-spacing:-0.31px;">0.000</span>
<div style="left:1812px;top:275.5px;width:54px;height:19.6px;background:#18181b;border:1px solid #0c0c0e;border-radius:3.5px;"></div>
<span style="left:1823.5px;top:276.0px;height:19px;line-height:19px;font-size:13px;color:#ececec;letter-spacing:-0.31px;">0.000</span>
<div style="left:1672px;top:259.1px;width:134px;height:2px;background:#19191c;border-radius:1px;"></div>
<div style="left:1734.8px;top:255.40000000000003px;width:9.4px;height:9.4px;background:#9c9c9c;border-radius:50%;"></div>
<div style="left:1812px;top:250.5px;width:54px;height:19.6px;background:#18181b;border:1px solid #0c0c0e;border-radius:3.5px;"></div>
<span style="left:1823.5px;top:250.9px;height:19px;line-height:19px;font-size:13px;color:#ececec;letter-spacing:-0.31px;">0.000</span>
<div style="left:1672px;top:309.1px;width:134px;height:2px;background:#19191c;border-radius:1px;"></div>
<div style="left:1734.8px;top:305.40000000000003px;width:9.4px;height:9.4px;background:#9c9c9c;border-radius:50%;"></div>
<div style="left:1812px;top:300.5px;width:54px;height:19.6px;background:#18181b;border:1px solid #0c0c0e;border-radius:3.5px;"></div>
<span style="left:1823.5px;top:301.0px;height:19px;line-height:19px;font-size:13px;color:#ececec;letter-spacing:-0.31px;">0.000</span>
<div style="left:1672px;top:334.1px;width:134px;height:2px;background:#19191c;border-radius:1px;"></div>
<div style="left:1734.8px;top:330.40000000000003px;width:9.4px;height:9.4px;background:#9c9c9c;border-radius:50%;"></div>
<div style="left:1812px;top:325.5px;width:54px;height:19.6px;background:#18181b;border:1px solid #0c0c0e;border-radius:3.5px;"></div>
<span style="left:1823.5px;top:326.0px;height:19px;line-height:19px;font-size:13px;color:#ececec;letter-spacing:-0.31px;">0.000</span>
<svg style="left:1767px;top:203px;" width="16" height="14" viewBox="0 0 16 14"><g fill="none" stroke="#f0f0f0" stroke-width="1.6" stroke-linecap="round"><path d="M7 4.6 L9 3.2 A2.7 2.7 0 0 1 12.4 7.4 L10.6 8.8"/><path d="M9 9.4 L7 10.8 A2.7 2.7 0 0 1 3.6 6.6 L5.4 5.2"/><path d="M6.3 8.3 L9.7 5.7"/></g></svg>
<svg style="left:1889.3px;top:204.9px;" width="10" height="10" viewBox="0 0 10 10"><path d="M5 .3 L9.7 5 L5 9.7 L.3 5 Z" fill="#a8a8a8"/></svg>
<svg style="left:1917.5px;top:202.4px;" width="15" height="15" viewBox="0 0 15 15"><path d="M3.2 4.2 A6 6 0 1 1 1.6 8.6" fill="none" stroke="#78787c" stroke-width="1.2"/><path d="M.6 1.8 L3.2 4.6 L6.4 3.2" fill="none" stroke="#78787c" stroke-width="1.2"/></svg>
<svg style="left:1889.3px;top:229.9px;" width="10" height="10" viewBox="0 0 10 10"><path d="M5 .3 L9.7 5 L5 9.7 L.3 5 Z" fill="#a8a8a8"/></svg>
<svg style="left:1917.5px;top:227.4px;" width="15" height="15" viewBox="0 0 15 15"><path d="M3.2 4.2 A6 6 0 1 1 1.6 8.6" fill="none" stroke="#78787c" stroke-width="1.2"/><path d="M.6 1.8 L3.2 4.6 L6.4 3.2" fill="none" stroke="#78787c" stroke-width="1.2"/></svg>
<svg style="left:1889.3px;top:254.90000000000003px;" width="10" height="10" viewBox="0 0 10 10"><path d="M5 .3 L9.7 5 L5 9.7 L.3 5 Z" fill="#a8a8a8"/></svg>
<svg style="left:1917.5px;top:252.40000000000003px;" width="15" height="15" viewBox="0 0 15 15"><path d="M3.2 4.2 A6 6 0 1 1 1.6 8.6" fill="none" stroke="#78787c" stroke-width="1.2"/><path d="M.6 1.8 L3.2 4.6 L6.4 3.2" fill="none" stroke="#78787c" stroke-width="1.2"/></svg>
<svg style="left:1889.3px;top:279.90000000000003px;" width="10" height="10" viewBox="0 0 10 10"><path d="M5 .3 L9.7 5 L5 9.7 L.3 5 Z" fill="#a8a8a8"/></svg>
<svg style="left:1917.5px;top:277.40000000000003px;" width="15" height="15" viewBox="0 0 15 15"><path d="M3.2 4.2 A6 6 0 1 1 1.6 8.6" fill="none" stroke="#78787c" stroke-width="1.2"/><path d="M.6 1.8 L3.2 4.6 L6.4 3.2" fill="none" stroke="#78787c" stroke-width="1.2"/></svg>
<svg style="left:1889.3px;top:304.90000000000003px;" width="10" height="10" viewBox="0 0 10 10"><path d="M5 .3 L9.7 5 L5 9.7 L.3 5 Z" fill="#a8a8a8"/></svg>
<svg style="left:1917.5px;top:302.40000000000003px;" width="15" height="15" viewBox="0 0 15 15"><path d="M3.2 4.2 A6 6 0 1 1 1.6 8.6" fill="none" stroke="#78787c" stroke-width="1.2"/><path d="M.6 1.8 L3.2 4.6 L6.4 3.2" fill="none" stroke="#78787c" stroke-width="1.2"/></svg>
<svg style="left:1889.3px;top:329.90000000000003px;" width="10" height="10" viewBox="0 0 10 10"><path d="M5 .3 L9.7 5 L5 9.7 L.3 5 Z" fill="#a8a8a8"/></svg>
<svg style="left:1917.5px;top:327.40000000000003px;" width="15" height="15" viewBox="0 0 15 15"><path d="M3.2 4.2 A6 6 0 1 1 1.6 8.6" fill="none" stroke="#78787c" stroke-width="1.2"/><path d="M.6 1.8 L3.2 4.6 L6.4 3.2" fill="none" stroke="#78787c" stroke-width="1.2"/></svg>
<svg style="left:1917.5px;top:352.5px;" width="15" height="15" viewBox="0 0 15 15"><path d="M3.2 4.2 A6 6 0 1 1 1.6 8.6" fill="none" stroke="#78787c" stroke-width="1.2"/><path d="M.6 1.8 L3.2 4.6 L6.4 3.2" fill="none" stroke="#78787c" stroke-width="1.2"/></svg>
<svg style="left:1676px;top:352px;" width="21" height="20" viewBox="0 0 21 20"><rect x=".6" y=".6" width="19.8" height="18.8" rx="2" fill="none" stroke="#5a5a5e" stroke-width="1.1"/><g transform="rotate(0 10.5 10)"><path d="M10.5 3.5 V16.5" stroke="#8e8e90" stroke-width="1.1"/><path d="M3.5 7 L7.5 10 L3.5 13 Z M17.5 7 L13.5 10 L17.5 13 Z" fill="#8e8e90"/></g></svg>
<svg style="left:1715px;top:352px;" width="21" height="20" viewBox="0 0 21 20"><rect x=".6" y=".6" width="19.8" height="18.8" rx="2" fill="none" stroke="#5a5a5e" stroke-width="1.1"/><g transform="rotate(90 10.5 10)"><path d="M10.5 3.5 V16.5" stroke="#8e8e90" stroke-width="1.1"/><path d="M3.5 7 L7.5 10 L3.5 13 Z M17.5 7 L13.5 10 L17.5 13 Z" fill="#8e8e90"/></g></svg>
<div style="left:1532px;top:379px;width:409px;height:1px;background:#0b0b0d;"></div>
<div style="left:1532px;top:410px;width:409px;height:1px;background:#0b0b0d;"></div>
<div style="left:1532px;top:441px;width:409px;height:1px;background:#0b0b0d;"></div>
<div style="left:1547px;top:388.8px;width:24px;height:13px;background:#141417;border-radius:7px;"></div>
<div style="left:1559.5px;top:391.1px;width:8.6px;height:8.6px;background:#e5463a;border-radius:50%;"></div>
<span style="left:1581.0px;top:386.0px;height:19px;line-height:19px;font-size:13px;color:#f2f2f2;letter-spacing:0.28px;">Cropping</span>
<svg style="left:1889.3px;top:389.7px;" width="10" height="10" viewBox="0 0 10 10"><path d="M5 .3 L9.7 5 L5 9.7 L.3 5 Z" fill="#a8a8a8"/></svg>
<svg style="left:1917.5px;top:387.2px;" width="15" height="15" viewBox="0 0 15 15"><path d="M3.2 4.2 A6 6 0 1 1 1.6 8.6" fill="none" stroke="#78787c" stroke-width="1.2"/><path d="M.6 1.8 L3.2 4.6 L6.4 3.2" fill="none" stroke="#78787c" stroke-width="1.2"/><path d="M5.2 7.6 H9.8 M7.5 5.3 V9.9" stroke="#78787c" stroke-width="1.1"/></svg>
<div style="left:1547px;top:419.5px;width:24px;height:13px;background:#141417;border-radius:7px;"></div>
<div style="left:1550px;top:421.8px;width:8.6px;height:8.6px;background:#9a9a9a;border-radius:50%;"></div>
<span style="left:1581.0px;top:416.8px;height:19px;line-height:19px;font-size:13px;color:#f2f2f2;letter-spacing:0.21px;">Dynamic Zoom</span>
<svg style="left:1917.5px;top:418.0px;" width="15" height="15" viewBox="0 0 15 15"><path d="M3.2 4.2 A6 6 0 1 1 1.6 8.6" fill="none" stroke="#404044" stroke-width="1.2"/><path d="M.6 1.8 L3.2 4.6 L6.4 3.2" fill="none" stroke="#404044" stroke-width="1.2"/><path d="M5.2 7.6 H9.8 M7.5 5.3 V9.9" stroke="#404044" stroke-width="1.1"/></svg>
<div style="left:1547px;top:450.5px;width:24px;height:13px;background:#141417;border-radius:7px;"></div>
<div style="left:1559.5px;top:452.8px;width:8.6px;height:8.6px;background:#e5463a;border-radius:50%;"></div>
<span style="left:1581.0px;top:447.7px;height:19px;line-height:19px;font-size:13px;color:#f2f2f2;letter-spacing:0.26px;">Composite</span>
<svg style="left:1889.3px;top:451.5px;" width="10" height="10" viewBox="0 0 10 10"><path d="M5 .3 L9.7 5 L5 9.7 L.3 5 Z" fill="#a8a8a8"/></svg>
<svg style="left:1917.5px;top:449.0px;" width="15" height="15" viewBox="0 0 15 15"><path d="M3.2 4.2 A6 6 0 1 1 1.6 8.6" fill="none" stroke="#78787c" stroke-width="1.2"/><path d="M.6 1.8 L3.2 4.6 L6.4 3.2" fill="none" stroke="#78787c" stroke-width="1.2"/><path d="M5.2 7.6 H9.8 M7.5 5.3 V9.9" stroke="#78787c" stroke-width="1.1"/></svg>
<div style="left:1532px;top:448px;width:409px;height:16px;background:linear-gradient(rgba(20,20,24,0),rgba(20,20,24,.4));"></div>
<div style="left:1943px;top:166px;width:6.5px;height:180px;background:#575b66;border-radius:3.5px;"></div>
<div style="left:32px;top:553px;width:675px;height:23px;background:#212126;"></div>
<div style="left:32px;top:576px;width:675px;height:1px;background:#0b0b0d;"></div>
<div style="left:68px;top:552px;width:1px;height:24px;background:#0b0b0d;"></div>
<div style="left:670px;top:552px;width:1px;height:24px;background:#0b0b0d;"></div>
<svg style="left:42px;top:557.5px;" width="16" height="14" viewBox="0 0 16 14"><rect x=".6" y=".6" width="14.8" height="12.8" rx="1" fill="none" stroke="#7c7c80" stroke-width="1.2"/><rect x=".7" y=".7" width="5" height="12.6" rx="1" fill="#8e8e90" stroke="#f2f2f2" stroke-width="1.4"/></svg>
<svg style="left:644.5px;top:556.5px;" width="16" height="16" viewBox="0 0 16 16"><circle cx="6.5" cy="6.5" r="5" fill="none" stroke="#8e8e8e" stroke-width="1.6"/><path d="M10.3 10.3 L14.6 14.6" stroke="#8e8e8e" stroke-width="2" stroke-linecap="round"/></svg>
<svg style="left:680px;top:562px;" width="18" height="4" viewBox="0 0 18 4"><circle cx="2" cy="2" r="1.7" fill="#8a8a8a"/><circle cx="9" cy="2" r="1.7" fill="#8a8a8a"/><circle cx="16" cy="2" r="1.7" fill="#8a8a8a"/></svg>
<div style="left:182px;top:577px;width:1px;height:440px;background:#0b0b0d;"></div>
<div style="left:32px;top:712px;width:150px;height:27px;background:#17181b;"></div>
<span style="left:61.0px;top:583.0px;height:19px;line-height:19px;font-size:13px;color:#9a9a9a;letter-spacing:0.45px;">Toolbox</span>
<svg style="left:41.5px;top:589.0px;" width="10" height="6" viewBox="0 0 10 6"><path d="M1 1 L5 5 L9 1" fill="none" stroke="#7d7d80" stroke-width="1.4"/></svg>
<span style="left:73.0px;top:610.0px;height:19px;line-height:19px;font-size:13px;color:#9a9a9a;letter-spacing:0.20px;">Video Transitions</span>
<span style="left:73.0px;top:637.0px;height:19px;line-height:19px;font-size:13px;color:#9a9a9a;letter-spacing:0.25px;">Audio Transitions</span>
<span style="left:73.0px;top:664.0px;height:19px;line-height:19px;font-size:13px;color:#9a9a9a;letter-spacing:0.07px;">Titles</span>
<span style="left:73.0px;top:691.0px;height:19px;line-height:19px;font-size:13px;color:#9a9a9a;letter-spacing:0.20px;">Generators</span>
<span style="left:73.0px;top:718.0px;height:19px;line-height:19px;font-size:13px;color:#f0f0f0;letter-spacing:0.07px;">Effects</span>
<span style="left:61.0px;top:745.0px;height:19px;line-height:19px;font-size:13px;color:#9a9a9a;letter-spacing:-0.15px;">Open FX</span>
<svg style="left:41.5px;top:751.0px;" width="10" height="6" viewBox="0 0 10 6"><path d="M1 1 L5 5 L9 1" fill="none" stroke="#7d7d80" stroke-width="1.4"/></svg>
<span style="left:73.0px;top:772.0px;height:19px;line-height:19px;font-size:13px;color:#9a9a9a;letter-spacing:0.09px;">Filters</span>
<svg style="left:55px;top:775.5px;" width="7" height="11" viewBox="0 0 7 11"><path d="M1 1 L5.5 5.5 L1 10" fill="none" stroke="#7d7d80" stroke-width="1.4"/></svg>
<span style="left:61.0px;top:799.0px;height:19px;line-height:19px;font-size:13px;color:#9a9a9a;letter-spacing:-0.06px;">Audio FX</span>
<svg style="left:41.5px;top:805.0px;" width="10" height="6" viewBox="0 0 10 6"><path d="M1 1 L5 5 L9 1" fill="none" stroke="#7d7d80" stroke-width="1.4"/></svg>
<span style="left:73.0px;top:826.0px;height:19px;line-height:19px;font-size:13px;color:#9a9a9a;letter-spacing:-0.04px;">Fairlight FX</span>
<span style="left:73.0px;top:853.0px;height:19px;line-height:19px;font-size:13px;color:#9a9a9a;letter-spacing:-0.29px;">VST Effects</span>
<div style="left:32px;top:891px;width:150px;height:1px;background:#38383d;"></div>
<span style="left:40.0px;top:900.2px;height:19px;line-height:19px;font-size:13px;color:#f0f0f0;letter-spacing:0.17px;">Favorites</span>
<svg style="left:42px;top:935.5px;" width="15" height="10" viewBox="0 0 15 10"><rect x=".5" y=".5" width="14" height="9" fill="#8a8a8c"/><path d="M1.5 1.5 L7.5 5 L1.5 8.5 Z M13.5 1.5 L7.5 5 L13.5 8.5 Z" fill="#2a2a2f"/></svg>
<span style="left:69.0px;top:931.0px;height:19px;line-height:19px;font-size:13px;color:#9a9a9a;letter-spacing:-0.18px;">Slide</span>
<svg style="left:42px;top:962.5px;" width="15" height="10" viewBox="0 0 15 10"><rect x=".5" y=".5" width="14" height="9" fill="#8a8a8c"/><path d="M1.5 1.5 L7.5 5 L1.5 8.5 Z M13.5 1.5 L7.5 5 L13.5 8.5 Z" fill="#2a2a2f"/></svg>
<span style="left:69.0px;top:958.2px;height:19px;line-height:19px;font-size:13px;color:#9a9a9a;letter-spacing:0.17px;">Blur...olve</span>
<svg style="left:42px;top:989.5px;" width="15" height="10" viewBox="0 0 15 10"><rect x=".5" y=".5" width="14" height="9" fill="#a2a2a4"/><text x="7.5" y="7.8" font-size="6.5" font-weight="700" text-anchor="middle" fill="#28282e" font-family="Liberation Sans, sans-serif">GPU</text></svg>
<span style="left:69.0px;top:985.0px;height:19px;line-height:19px;font-size:13px;color:#9a9a9a;letter-spacing:0.23px;">Burn Away</span>
<div style="left:32px;top:984px;width:139px;height:22px;background:linear-gradient(rgba(24,24,28,0),rgba(24,24,28,.45));"></div>
<div style="left:32px;top:1006px;width:150px;height:11px;background:#28282e;"></div>
<div style="left:172.5px;top:926px;width:8px;height:22px;background:#85858a;border-radius:4px;border:1px solid #1a1a1e;"></div>
<span style="left:195.0px;top:584.8px;height:19px;line-height:19px;font-size:13px;color:#9a9a9a;font-weight:700;letter-spacing:-0.48px;">Effects</span>
<svg style="left:676.5px;top:590.0px;" width="10" height="6" viewBox="0 0 10 6"><path d="M1 5 L5 1 L9 5" fill="none" stroke="#8a8a8a" stroke-width="1.4"/></svg>
<div style="left:195px;top:606px;width:492px;height:1px;background:#3a3a40;"></div>
<div style="left:194.5px;top:616.5px;width:240px;height:30.5px;background:#26262b;border:1.6px solid #e5463a;border-radius:3.5px;"></div>
<div style="left:196.0px;top:618.0px;width:51.5px;height:27.5px;background:#34343a;border-radius:2.5px 0 0 2.5px;"></div>
<div style="left:247.5px;top:617.5px;width:1px;height:28.5px;background:#151517;"></div>
<svg style="left:196.5px;top:618.5px;overflow:hidden" width="51" height="27" viewBox="0 0 51 27"><rect x="17" y="7" width="13" height="10" fill="none" stroke="#77777b" stroke-width="1.1"/><rect x="20.5" y="10.5" width="13" height="10" fill="#34343a" stroke="#77777b" stroke-width="1.1"/><path d="M22 19.5 L32 11.5" stroke="#77777b" stroke-width="1.1"/></svg>
<span style="left:262.5px;top:623.4px;height:18px;line-height:18px;font-size:12px;color:#f0f0f0;letter-spacing:-0.07px;">Adjustment Clip</span>
<div style="left:443.5px;top:616.5px;width:240px;height:30.5px;background:#26262b;border:1px solid #121214;border-radius:3.5px;"></div>
<div style="left:445.0px;top:618.0px;width:51.5px;height:27.5px;background:#34343a;border-radius:2.5px 0 0 2.5px;"></div>
<div style="left:496.5px;top:617.5px;width:1px;height:28.5px;background:#151517;"></div>
<svg style="left:445.5px;top:618.5px;overflow:hidden" width="51" height="27" viewBox="0 0 51 27"><path d="M17 22 L26 11" stroke="#77777b" stroke-width="2.2" stroke-linecap="round"/><path d="M29 3 L29.7 5.6 L32.3 6.3 L29.7 7 L29 9.6 L28.3 7 L25.7 6.3 L28.3 5.6 Z M34 9.5 L34.6 11.4 L36.5 12 L34.6 12.6 L34 14.5 L33.4 12.6 L31.5 12 L33.4 11.4 Z M30 14.5 L30.5 16 L32 16.5 L30.5 17 L30 18.5 L29.5 17 L28 16.5 L29.5 16 Z" fill="#77777b"/></svg>
<span style="left:511.5px;top:623.4px;height:18px;line-height:18px;font-size:12px;color:#a2a2a2;letter-spacing:-0.06px;">Fusion Composition</span>
<span style="left:195.0px;top:676.7px;height:19px;line-height:19px;font-size:13px;color:#9a9a9a;font-weight:700;letter-spacing:-0.40px;">Fusion Effects</span>
<svg style="left:676.5px;top:682.0px;" width="10" height="6" viewBox="0 0 10 6"><path d="M1 5 L5 1 L9 5" fill="none" stroke="#8a8a8a" stroke-width="1.4"/></svg>
<div style="left:195px;top:698px;width:492px;height:1px;background:#3a3a40;"></div>
<div style="left:194.5px;top:708px;width:240px;height:30.5px;background:#26262b;border:1px solid #121214;border-radius:3.5px;"></div>
<div style="left:196.0px;top:709.5px;width:51.5px;height:27.5px;background:#34343a;border-radius:2.5px 0 0 2.5px;"></div>
<div style="left:247.5px;top:709px;width:1px;height:28.5px;background:#151517;"></div>
<svg style="left:196.5px;top:710px;overflow:hidden" width="51" height="27" viewBox="0 0 51 27"><rect width="51" height="27" fill="#5a5a5e"/><circle cx="16" cy="13.5" r="11" fill="#2e2e32"/><circle cx="35" cy="13.5" r="11" fill="#2e2e32"/></svg>
<span style="left:262.5px;top:714.9px;height:18px;line-height:18px;font-size:12px;color:#a2a2a2;letter-spacing:-0.00px;">Binoculars</span>
<div style="left:443.5px;top:708px;width:240px;height:30.5px;background:#26262b;border:1px solid #121214;border-radius:3.5px;"></div>
<div style="left:445.0px;top:709.5px;width:51.5px;height:27.5px;background:#34343a;border-radius:2.5px 0 0 2.5px;"></div>
<div style="left:496.5px;top:709px;width:1px;height:28.5px;background:#151517;"></div>
<svg style="left:445.5px;top:710px;overflow:hidden" width="51" height="27" viewBox="0 0 51 27"><rect width="51" height="27" fill="#2e2e33"/><rect x="14" y="22" width="20" height="1.6" fill="#8a8a8e"/><rect x="3" y="3" width="4" height="1" fill="#66666a"/><rect x="42" y="3" width="5" height="1" fill="#66666a"/></svg>
<span style="left:511.5px;top:714.9px;height:18px;line-height:18px;font-size:12px;color:#a2a2a2;letter-spacing:-1.20px;">CCTV</span>
<div style="left:194.5px;top:745px;width:240px;height:30.5px;background:#26262b;border:1px solid #121214;border-radius:3.5px;"></div>
<div style="left:196.0px;top:746.5px;width:51.5px;height:27.5px;background:#34343a;border-radius:2.5px 0 0 2.5px;"></div>
<div style="left:247.5px;top:746px;width:1px;height:28.5px;background:#151517;"></div>
<svg style="left:196.5px;top:747px;overflow:hidden" width="51" height="27" viewBox="0 0 51 27"><rect x="1" y="1" width="49" height="25" fill="#2e2e33" stroke="#88888c" stroke-width="1.6"/></svg>
<span style="left:262.5px;top:751.9px;height:18px;line-height:18px;font-size:12px;color:#a2a2a2;letter-spacing:-0.17px;">Colored Border</span>
<div style="left:443.5px;top:745px;width:240px;height:30.5px;background:#26262b;border:1px solid #121214;border-radius:3.5px;"></div>
<div style="left:445.0px;top:746.5px;width:51.5px;height:27.5px;background:#34343a;border-radius:2.5px 0 0 2.5px;"></div>
<div style="left:496.5px;top:746px;width:1px;height:28.5px;background:#151517;"></div>
<svg style="left:445.5px;top:747px;overflow:hidden" width="51" height="27" viewBox="0 0 51 27"><rect x="11" y="5" width="28" height="16" fill="none" stroke="#55555a" stroke-width="1.2"/><circle cx="17" cy="9.5" r="1.4" fill="#55555a"/><path d="M12 18 L20 12 L26 16 L32 10 L38 15" fill="none" stroke="#55555a" stroke-width="1.2"/><rect x="8" y="11" width="12" height="1.2" fill="#55555a"/><rect x="30" y="7" width="12" height="1.2" fill="#55555a"/></svg>
<span style="left:511.5px;top:751.9px;height:18px;line-height:18px;font-size:12px;color:#a2a2a2;letter-spacing:-0.10px;">Digital Glitch</span>
<div style="left:194.5px;top:782px;width:240px;height:30.5px;background:#26262b;border:1px solid #121214;border-radius:3.5px;"></div>
<div style="left:196.0px;top:783.5px;width:51.5px;height:27.5px;background:#34343a;border-radius:2.5px 0 0 2.5px;"></div>
<div style="left:247.5px;top:783px;width:1px;height:28.5px;background:#151517;"></div>
<svg style="left:196.5px;top:784px;overflow:hidden" width="51" height="27" viewBox="0 0 51 27"><circle cx="25.5" cy="13.5" r="7" fill="none" stroke="#55555a" stroke-width="1.2"/><circle cx="25.5" cy="13.5" r="3" fill="none" stroke="#55555a" stroke-width="1.2"/><path d="M13 3 Q6 13.5 13 24 M38 3 Q45 13.5 38 24" fill="none" stroke="#55555a" stroke-width="1.2"/></svg>
<span style="left:262.5px;top:788.9px;height:18px;line-height:18px;font-size:12px;color:#a2a2a2;letter-spacing:-0.18px;">Drone Overlay</span>
<div style="left:443.5px;top:782px;width:240px;height:30.5px;background:#26262b;border:1px solid #121214;border-radius:3.5px;"></div>
<div style="left:445.0px;top:783.5px;width:51.5px;height:27.5px;background:#34343a;border-radius:2.5px 0 0 2.5px;"></div>
<div style="left:496.5px;top:783px;width:1px;height:28.5px;background:#151517;"></div>
<svg style="left:445.5px;top:784px;overflow:hidden" width="51" height="27" viewBox="0 0 51 27"><path d="M6 8 V4 H11 M40 4 H45 V8 M6 17 V21 H11 M40 21 H45 V17" fill="none" stroke="#66666a" stroke-width="1.2"/><circle cx="25.5" cy="11.5" r="3" fill="none" stroke="#66666a" stroke-width="1.2"/><path d="M19 8 V15 M32 8 V15" stroke="#66666a" stroke-width="1"/><path d="M6 24.5 H45" stroke="#66666a" stroke-width="1" stroke-dasharray="4 2"/></svg>
<span style="left:511.5px;top:788.9px;height:18px;line-height:18px;font-size:12px;color:#a2a2a2;letter-spacing:-1.20px;">DSLR</span>
<div style="left:194.5px;top:819px;width:240px;height:30.5px;background:#26262b;border:1px solid #121214;border-radius:3.5px;"></div>
<div style="left:196.0px;top:820.5px;width:51.5px;height:27.5px;background:#34343a;border-radius:2.5px 0 0 2.5px;"></div>
<div style="left:247.5px;top:820px;width:1px;height:28.5px;background:#151517;"></div>
<svg style="left:196.5px;top:821px;overflow:hidden" width="51" height="27" viewBox="0 0 51 27"><rect x="27" y="3.5" width="22" height="12" fill="none" stroke="#66666a" stroke-width="1"/><circle cx="32" cy="7.5" r="1" fill="#66666a"/><path d="M29 13 L35 9.5 L39 12 L43 9 L47 11.5" fill="none" stroke="#66666a" stroke-width="1"/></svg>
<span style="left:262.5px;top:825.9px;height:18px;line-height:18px;font-size:12px;color:#a2a2a2;letter-spacing:-1.20px;">DVE</span>
<div style="left:443.5px;top:819px;width:240px;height:30.5px;background:#26262b;border:1px solid #121214;border-radius:3.5px;"></div>
<div style="left:445.0px;top:820.5px;width:51.5px;height:27.5px;background:#34343a;border-radius:2.5px 0 0 2.5px;"></div>
<div style="left:496.5px;top:820px;width:1px;height:28.5px;background:#151517;"></div>
<svg style="left:445.5px;top:821px;overflow:hidden" width="51" height="27" viewBox="0 0 51 27"><rect x="0.0" y="0.0" width="6.4" height="6.75" fill="#46464b"/><rect x="6.4" y="0.0" width="6.4" height="6.75" fill="#38383d"/><rect x="12.8" y="0.0" width="6.4" height="6.75" fill="#46464b"/><rect x="19.2" y="0.0" width="6.4" height="6.75" fill="#38383d"/><rect x="25.6" y="0.0" width="6.4" height="6.75" fill="#46464b"/><rect x="32.0" y="0.0" width="6.4" height="6.75" fill="#38383d"/><rect x="38.4" y="0.0" width="6.4" height="6.75" fill="#46464b"/><rect x="44.8" y="0.0" width="6.4" height="6.75" fill="#38383d"/><rect x="0.0" y="6.8" width="6.4" height="6.75" fill="#38383d"/><rect x="6.4" y="6.8" width="6.4" height="6.75" fill="#46464b"/><rect x="12.8" y="6.8" width="6.4" height="6.75" fill="#38383d"/><rect x="19.2" y="6.8" width="6.4" height="6.75" fill="#46464b"/><rect x="25.6" y="6.8" width="6.4" height="6.75" fill="#38383d"/><rect x="32.0" y="6.8" width="6.4" height="6.75" fill="#46464b"/><rect x="38.4" y="6.8" width="6.4" height="6.75" fill="#38383d"/><rect x="44.8" y="6.8" width="6.4" height="6.75" fill="#46464b"/><rect x="0.0" y="13.5" width="6.4" height="6.75" fill="#46464b"/><rect x="6.4" y="13.5" width="6.4" height="6.75" fill="#38383d"/><rect x="12.8" y="13.5" width="6.4" height="6.75" fill="#46464b"/><rect x="19.2" y="13.5" width="6.4" height="6.75" fill="#38383d"/><rect x="25.6" y="13.5" width="6.4" height="6.75" fill="#46464b"/><rect x="32.0" y="13.5" width="6.4" height="6.75" fill="#38383d"/><rect x="38.4" y="13.5" width="6.4" height="6.75" fill="#46464b"/><rect x="44.8" y="13.5" width="6.4" height="6.75" fill="#38383d"/><rect x="0.0" y="20.2" width="6.4" height="6.75" fill="#38383d"/><rect x="6.4" y="20.2" width="6.4" height="6.75" fill="#46464b"/><rect x="12.8" y="20.2" width="6.4" height="6.75" fill="#38383d"/><rect x="19.2" y="20.2" width="6.4" height="6.75" fill="#46464b"/><rect x="25.6" y="20.2" width="6.4" height="6.75" fill="#38383d"/><rect x="32.0" y="20.2" width="6.4" height="6.75" fill="#46464b"/><rect x="38.4" y="20.2" width="6.4" height="6.75" fill="#38383d"/><rect x="44.8" y="20.2" width="6.4" height="6.75" fill="#46464b"/></svg>
<span style="left:511.5px;top:825.9px;height:18px;line-height:18px;font-size:12px;color:#a2a2a2;letter-spacing:-0.07px;">Night Vision</span>
<div style="left:194.5px;top:856px;width:240px;height:30.5px;background:#26262b;border:1px solid #121214;border-radius:3.5px;"></div>
<div style="left:196.0px;top:857.5px;width:51.5px;height:27.5px;background:#34343a;border-radius:2.5px 0 0 2.5px;"></div>
<div style="left:247.5px;top:857px;width:1px;height:28.5px;background:#151517;"></div>
<svg style="left:196.5px;top:858px;overflow:hidden" width="51" height="27" viewBox="0 0 51 27"><rect x="14" y="7" width="23" height="14" fill="#3e3e44"/><text x="25.5" y="18" font-size="8" text-anchor="middle" fill="#6a6a6e" font-family="Liberation Sans, sans-serif">...</text></svg>
<span style="left:262.5px;top:862.9px;height:18px;line-height:18px;font-size:12px;color:#a2a2a2;letter-spacing:-0.25px;">Video Call</span>
<div style="left:443.5px;top:856px;width:240px;height:30.5px;background:#26262b;border:1px solid #121214;border-radius:3.5px;"></div>
<div style="left:445.0px;top:857.5px;width:51.5px;height:27.5px;background:#34343a;border-radius:2.5px 0 0 2.5px;"></div>
<div style="left:496.5px;top:857px;width:1px;height:28.5px;background:#151517;"></div>
<svg style="left:445.5px;top:858px;overflow:hidden" width="51" height="27" viewBox="0 0 51 27"><path d="M3 7 V3 H8 M43 3 H48 V7 M3 20 V24 H8 M43 24 H48 V20" fill="none" stroke="#55555a" stroke-width="1"/><path d="M23.5 13.5 H27.5 M25.5 11.5 V15.5" stroke="#77777b" stroke-width="1"/></svg>
<span style="left:511.5px;top:862.9px;height:18px;line-height:18px;font-size:12px;color:#a2a2a2;letter-spacing:-0.37px;">Video Camera</span>
<div style="left:708px;top:465px;width:1243px;height:50px;background:#212126;"></div>
<svg style="left:726px;top:482px;" width="25" height="15" viewBox="0 0 25 15"><rect x=".6" y=".6" width="23.8" height="6.8" fill="none" stroke="#7a7a7e" stroke-width="1.1"/><path d="M8.5 .6 V7.4 M16.5 .6 V7.4" stroke="#7a7a7e" stroke-width="1.1"/><rect x="0" y="7" width="25" height="3" fill="#7a7a7e"/><rect x="0" y="11.5" width="25" height="3.3" rx=".6" fill="#7a7a7e"/><rect x="1" y="8" width="6" height="1" fill="#3a3a3e"/><rect x="1" y="12.6" width="6" height="1" fill="#3a3a3e"/></svg>
<svg style="left:942px;top:481px;" width="14" height="18" viewBox="0 0 14 18"><path d="M1 .5 L12.2 10.5 L7.6 11 L10.6 16.6 L8.2 17.6 L5.4 12 L1.4 15 Z" fill="#e5463a"/></svg>
<svg style="left:974px;top:479px;" width="28" height="21" viewBox="0 0 28 21"><rect x=".6" y="4.6" width="26.8" height="11.8" rx="1" fill="none" stroke="#6e6e72" stroke-width="1.1"/><rect x="11" y=".8" width="6" height="19.4" rx="2" fill="#3a3a3e" stroke="#6e6e72" stroke-width="1.3"/><rect x="13.3" y="5" width="1.6" height="11" fill="#6e6e72"/><path d="M8 7.5 L4.5 10.5 L8 13.5 M20 7.5 L23.5 10.5 L20 13.5" fill="none" stroke="#6e6e72" stroke-width="1.2"/></svg>
<svg style="left:1016px;top:479px;" width="26" height="21" viewBox="0 0 26 21"><path d="M4 4.5 Q1 5 1 7 V14 Q1 16 4 16.5 M22 4.5 Q25 5 25 7 V14 Q25 16 22 16.5" fill="none" stroke="#6e6e72" stroke-width="1.1"/><path d="M13 1 V20" stroke="#6e6e72" stroke-width="1.1"/><path d="M10.5 .5 H15.5 L13 3.5 Z" fill="#6e6e72"/><path d="M9.5 7.5 L6 10.5 L9.5 13.5 M16.5 7.5 L20 10.5 L16.5 13.5" fill="none" stroke="#6e6e72" stroke-width="1.2"/></svg>
<svg style="left:1057px;top:482px;" width="22" height="15" viewBox="0 0 22 15"><rect x="1" y="0" width="20" height="1.6" fill="#6e6e72"/><rect x="1" y="13.4" width="20" height="1.6" fill="#6e6e72"/><rect x="0" y="3" width="22" height="9" rx="1.5" fill="#6e6e72"/><path d="M2.5 7.5 L4 5.5 L5.5 7.5 L7 5.5 L8.5 7.5 L10 6 H12 L13.5 7.5 L15 5.5 L16.5 7.5 L18 5.5 L19.5 7.5 L18 9.5 L16.5 7.5 L15 9.5 L13.5 7.5 L12 9 H10 L8.5 7.5 L7 9.5 L5.5 7.5 L4 9.5 Z" fill="#212126"/></svg>
<div style="left:1093.5px;top:474.5px;width:1px;height:30px;background:#3a3a3e;"></div>
<div style="left:1224.5px;top:474.5px;width:1px;height:30px;background:#3a3a3e;"></div>
<div style="left:1355px;top:474.5px;width:1px;height:30px;background:#3a3a3e;"></div>
<div style="left:1454.5px;top:474.5px;width:1px;height:30px;background:#3a3a3e;"></div>
<svg style="left:1105px;top:480px;" width="29" height="20" viewBox="0 0 29 20"><rect x="8" y=".6" width="13" height="10" rx="1" fill="#3a3a3e" stroke="#6e6e72" stroke-width="1.2"/><rect x=".6" y="6" width="4.4" height="9.4" rx="1" fill="none" stroke="#6e6e72" stroke-width="1.1"/><rect x="24" y="6" width="4.4" height="9.4" rx="1" fill="none" stroke="#6e6e72" stroke-width="1.1"/><path d="M11 15 L14.5 18.5 L18 15" fill="none" stroke="#6e6e72" stroke-width="1.2"/></svg>
<svg style="left:1147px;top:478px;" width="24" height="21" viewBox="0 0 24 21"><rect x=".6" y="4" width="12.4" height="10" rx="1" fill="#3a3a3e" stroke="#6e6e72" stroke-width="1.2"/><path d="M8 16 V19.6 H20.4 V10 H15" fill="none" stroke="#6e6e72" stroke-width="1.1"/><path d="M15.5 1.5 Q19.5 1.5 19.8 5.5 M17.4 4 L19.8 6.4 L22.2 4" fill="none" stroke="#6e6e72" stroke-width="1.1"/></svg>
<svg style="left:1184px;top:478px;" width="29" height="22" viewBox="0 0 29 22"><rect x=".6" y="6" width="13.4" height="11" rx="1" fill="none" stroke="#6e6e72" stroke-width="1.2"/><rect x="14" y="6" width="14" height="11" rx="1" fill="#3a3a3e" stroke="#6e6e72" stroke-width="1.1"/><path d="M14 5 Q17 -1 21.5 3 V12 M18.5 9.5 L21.5 12.5 L24.5 9.5" fill="none" stroke="#6e6e72" stroke-width="1.2"/><path d="M13.5 18.5 Q10 23 7.5 19 V10 M4.5 12.5 L7.5 9.5 L10.5 12.5" fill="none" stroke="#6e6e72" stroke-width="1.2"/></svg>
<svg style="left:1242px;top:480px;" width="19" height="19" viewBox="0 0 19 19"><path d="M9.5 3.2 L5.6 5.6 A5.6 5.6 0 1 0 13.6 13.2 L15.6 9.6" fill="none" stroke="#f2f2f2" stroke-width="2.3"/><path d="M10.8 2.4 L12.4 1.4 M16.4 8.2 L17.6 6.4" stroke="#f2f2f2" stroke-width="2.3"/></svg>
<svg style="left:1281px;top:481px;" width="19" height="17" viewBox="0 0 19 17"><g fill="none" stroke="#f2f2f2" stroke-width="2.2" stroke-linecap="round"><path d="M8.2 5.2 L10.6 3.4 A3.4 3.4 0 0 1 15 8.6 L12.6 10.4"/><path d="M10.8 11.8 L8.4 13.6 A3.4 3.4 0 0 1 4 8.4 L6.4 6.6"/><path d="M7.4 10.3 L11.6 6.7"/></g></svg>
<svg style="left:1322px;top:481px;" width="16" height="17" viewBox="0 0 16 17"><path d="M4 7 V4.5 A4 4 0 0 1 12 4.5 V7" fill="none" stroke="#6e6e72" stroke-width="1.4"/><rect x=".5" y="6.8" width="15" height="9.8" rx="1.2" fill="#6e6e72"/><path d="M3 11.7 H13 M5.2 9.5 L3 11.7 L5.2 13.9 M10.8 9.5 L13 11.7 L10.8 13.9" fill="none" stroke="#212126" stroke-width="1.2"/></svg>
<svg style="left:1368px;top:482px;" width="12" height="14" viewBox="0 0 12 14"><path d="M.6 .6 H11.4 V13 L6 9 L.6 13 Z" fill="#0a84ea" stroke="#0a1220" stroke-width=".8"/></svg>
<svg style="left:1389.5px;top:487.5px;" width="10" height="6" viewBox="0 0 10 6"><path d="M1 1 L5 5 L9 1" fill="none" stroke="#7d7d80" stroke-width="1.4"/></svg>
<svg style="left:1412px;top:482px;" width="12" height="14" viewBox="0 0 12 14"><path d="M.6 2 Q.6 .6 2 .6 H10 Q11.4 .6 11.4 2 V9.5 L6 13 L.6 9.5 Z" fill="#0a84ea" stroke="#0a1220" stroke-width=".8"/></svg>
<svg style="left:1433.5px;top:487.5px;" width="10" height="6" viewBox="0 0 10 6"><path d="M1 1 L5 5 L9 1" fill="none" stroke="#7d7d80" stroke-width="1.4"/></svg>
<svg style="left:1466px;top:480px;" width="29" height="20" viewBox="0 0 29 20"><rect x=".6" y=".8" width="23" height="11.4" rx="1" fill="#38383c" stroke="#6e6e72" stroke-width="1.1"/><rect x="2.5" y="2" width="1" height="3" fill="#6e6e72"/><rect x="5.5" y="2" width="1" height="4" fill="#6e6e72"/><rect x="8.5" y="2" width="1" height="3" fill="#6e6e72"/><rect x="11.5" y="2" width="1" height="4" fill="#6e6e72"/><rect x="14.5" y="2" width="1" height="3" fill="#6e6e72"/><rect x="17.5" y="2" width="1" height="4" fill="#6e6e72"/><rect x="20.5" y="2" width="1" height="3" fill="#6e6e72"/><circle cx="20" cy="11.5" r="4.2" fill="#38383c" stroke="#6e6e72" stroke-width="1.5"/><path d="M23.2 14.7 L26.8 18.3" stroke="#6e6e72" stroke-width="2" stroke-linecap="round"/></svg>
<svg style="left:1506px;top:480px;" width="29" height="20" viewBox="0 0 29 20"><rect x="0" y=".5" width="26" height="1" fill="#6e6e72"/><rect x="0" y="11" width="26" height="1" fill="#4a4a4e"/><rect x="2.5" y="2" width="1" height="3" fill="#6e6e72"/><rect x="5.5" y="2" width="1" height="4" fill="#6e6e72"/><rect x="8.5" y="2" width="1" height="3" fill="#6e6e72"/><rect x="11.5" y="2" width="1" height="4" fill="#6e6e72"/><rect x="14.5" y="2" width="1" height="3" fill="#6e6e72"/><rect x="17.5" y="2" width="1" height="4" fill="#6e6e72"/><rect x="20.5" y="2" width="1" height="3" fill="#6e6e72"/><rect x="10" y=".8" width="6" height="11" fill="#38383c" stroke="#6e6e72" stroke-width="1"/><circle cx="20" cy="11.5" r="4.2" fill="#38383c" stroke="#6e6e72" stroke-width="1.5"/><path d="M23.2 14.7 L26.8 18.3" stroke="#6e6e72" stroke-width="2" stroke-linecap="round"/></svg>
<svg style="left:1546px;top:480px;" width="29" height="20" viewBox="0 0 29 20"><rect x="0" y=".5" width="27" height="1" fill="#8a8a8e"/><rect x="0" y="11" width="16" height="1" fill="#4a4a4e"/><rect x="2.5" y="2" width="1" height="3" fill="#a0a0a0"/><rect x="5.5" y="2" width="1" height="4" fill="#a0a0a0"/><rect x="8.5" y="2" width="1" height="3" fill="#a0a0a0"/><rect x="11.5" y="2" width="1" height="4" fill="#a0a0a0"/><rect x="14.5" y="2" width="1" height="3" fill="#a0a0a0"/><rect x="17.5" y="2" width="1" height="4" fill="#a0a0a0"/><rect x="20.5" y="2" width="1" height="3" fill="#a0a0a0"/><rect x="23.5" y="2" width="1" height="4" fill="#a0a0a0"/><circle cx="20.5" cy="11.5" r="4.2" fill="#5a5a5e" stroke="#f4f4f4" stroke-width="1.5"/><path d="M23.7 14.7 L27.3 18.3" stroke="#f4f4f4" stroke-width="2" stroke-linecap="round"/></svg>
<div style="left:1589.5px;top:482.5px;width:14px;height:14px;background:#303035;border-radius:50%;"></div>
<div style="left:1593px;top:489px;width:7px;height:1.4px;background:#6e6e72;"></div>
<div style="left:1616.5px;top:489px;width:86px;height:2px;background:#19191c;border-radius:1px;"></div>
<div style="left:1662.8px;top:485px;width:9.4px;height:9.4px;background:#9c9c9c;border-radius:50%;"></div>
<div style="left:1714.8px;top:482.5px;width:14px;height:14px;background:#303035;border-radius:50%;"></div>
<div style="left:1718.3px;top:489px;width:7px;height:1.4px;background:#6e6e72;"></div>
<div style="left:1721.1px;top:486.2px;width:1.4px;height:7px;background:#6e6e72;"></div>
<svg style="left:1764px;top:482px;" width="18" height="15" viewBox="0 0 18 15"><path d="M1 5 H4 L8.5 1.2 V13.8 L4 10 H1 Z" fill="none" stroke="#f0f0f0" stroke-width="1.4" stroke-linejoin="round"/><path d="M11 5 Q12.6 7.5 11 10 M13.4 3 Q16.2 7.5 13.4 12" fill="none" stroke="#f0f0f0" stroke-width="1.3"/></svg>
<div style="left:1793px;top:489px;width:78px;height:2.2px;background:#3aa82c;border-radius:1px;"></div>
<div style="left:1867.6px;top:485.4px;width:9.4px;height:9.4px;background:#a8a8a8;border-radius:50%;"></div>
<div style="left:1886.5px;top:482.5px;width:24px;height:14px;background:#6c6c70;border-radius:2px;"></div>
<span style="left:1890.0px;top:482.3px;height:15px;line-height:15px;font-size:9px;color:#1e1e22;font-weight:700;letter-spacing:0.17px;">DIM</span>
<svg style="left:1925px;top:479.5px;" width="13" height="21" viewBox="0 0 13 21"><path d="M1.2 .5 V20.5 M6.5 .5 V20.5 M12 .5 V20.5" stroke="#151518" stroke-width="1.6"/><rect x=".5" y=".5" width="12.2" height="20" fill="none" stroke="#151518" stroke-width="1"/></svg>
<div style="left:708px;top:516px;width:233px;height:40px;background:#212126;"></div>
<div style="left:941px;top:516px;width:1010px;height:40px;background:#28282d;"></div>
<div style="left:708px;top:515px;width:1243px;height:1px;background:#0b0b0d;"></div>
<div style="left:708px;top:556px;width:1243px;height:1px;background:#161619;"></div>
<span style="left:767.0px;top:523.1px;height:27px;line-height:27px;font-size:21px;color:#e2e2e2;letter-spacing:0.19px;">00:00:00:00</span>
<svg style="left:941px;top:516px;overflow:hidden;" width="1000" height="26" viewBox="0 0 1000 26"><defs><linearGradient id="mj" x1="0" y1="0" x2="0" y2="1"><stop offset="0" stop-color="#c8c8c8"/><stop offset="1" stop-color="#55555a"/></linearGradient></defs><rect x="3.0" y="0" width="1" height="5" fill="#4a4e55"/><rect x="7.0" y="0" width="1" height="10" fill="#4a4e55"/><rect x="11.0" y="0" width="1" height="5" fill="#4a4e55"/><rect x="15.0" y="0" width="1" height="10" fill="#4a4e55"/><rect x="19.0" y="0" width="1" height="5" fill="#4a4e55"/><rect x="23.0" y="0" width="1" height="10" fill="#4a4e55"/><rect x="27.0" y="0" width="1" height="5" fill="#4a4e55"/><rect x="31.0" y="0" width="1" height="10" fill="#4a4e55"/><rect x="35.0" y="0" width="1" height="5" fill="#4a4e55"/><rect x="39.0" y="0" width="1" height="10" fill="#4a4e55"/><rect x="43.0" y="0" width="1" height="5" fill="#4a4e55"/><rect x="47.0" y="0" width="1" height="10" fill="#4a4e55"/><rect x="51.0" y="0" width="1" height="5" fill="#4a4e55"/><rect x="55.0" y="0" width="1" height="10" fill="#4a4e55"/><rect x="59.0" y="0" width="1" height="5" fill="#4a4e55"/><rect x="63.0" y="0" width="1" height="10" fill="#4a4e55"/><rect x="67.0" y="0" width="1" height="5" fill="#4a4e55"/><rect x="71.0" y="0" width="1" height="10" fill="#4a4e55"/><rect x="75.0" y="0" width="1" height="5" fill="#4a4e55"/><rect x="79.0" y="0" width="1" height="10" fill="#4a4e55"/><rect x="83.0" y="0" width="1" height="5" fill="#4a4e55"/><rect x="87.0" y="0" width="1" height="10" fill="#4a4e55"/><rect x="91.0" y="0" width="1" height="5" fill="#4a4e55"/><rect x="95.0" y="0" width="1" height="10" fill="#4a4e55"/><rect x="99.0" y="0" width="1" height="5" fill="#4a4e55"/><rect x="103.0" y="0" width="1" height="10" fill="#4a4e55"/><rect x="107.0" y="0" width="1" height="5" fill="#4a4e55"/><rect x="111.0" y="0" width="1" height="10" fill="#4a4e55"/><rect x="115.0" y="0" width="1" height="5" fill="#4a4e55"/><rect x="119.0" y="0" width="1" height="10" fill="#4a4e55"/><rect x="123.0" y="0" width="1" height="5" fill="#4a4e55"/><rect x="127.0" y="0" width="1" height="10" fill="#4a4e55"/><rect x="131.0" y="0" width="1" height="5" fill="#4a4e55"/><rect x="135.0" y="0" width="1" height="10" fill="#4a4e55"/><rect x="139.0" y="0" width="1" height="5" fill="#4a4e55"/><rect x="143.0" y="0" width="1" height="10" fill="#4a4e55"/><rect x="147.0" y="0" width="1" height="5" fill="#4a4e55"/><rect x="151.0" y="0" width="1" height="10" fill="#4a4e55"/><rect x="155.0" y="0" width="1" height="5" fill="#4a4e55"/><rect x="159.0" y="0" width="1" height="10" fill="#4a4e55"/><rect x="163.0" y="0" width="1" height="5" fill="#4a4e55"/><rect x="167.0" y="0" width="1" height="10" fill="#4a4e55"/><rect x="171.0" y="0" width="1" height="5" fill="#4a4e55"/><rect x="175.0" y="0" width="1" height="10" fill="#4a4e55"/><rect x="179.0" y="0" width="1" height="5" fill="#4a4e55"/><rect x="183.0" y="0" width="1" height="10" fill="#4a4e55"/><rect x="187.0" y="0" width="1" height="5" fill="#4a4e55"/><rect x="191.0" y="0" width="1" height="10" fill="#4a4e55"/><rect x="195.0" y="0" width="1" height="5" fill="#4a4e55"/><rect x="199.0" y="0" width="1" height="10" fill="#4a4e55"/><rect x="203.0" y="0" width="1" height="5" fill="#4a4e55"/><rect x="207.0" y="0" width="1" height="10" fill="#4a4e55"/><rect x="211.0" y="0" width="1" height="5" fill="#4a4e55"/><rect x="215.0" y="0" width="1" height="10" fill="#4a4e55"/><rect x="219.0" y="0" width="1" height="5" fill="#4a4e55"/><rect x="223.0" y="0" width="1" height="10" fill="#4a4e55"/><rect x="227.0" y="0" width="1" height="5" fill="#4a4e55"/><rect x="231.0" y="0" width="1" height="10" fill="#4a4e55"/><rect x="235.0" y="0" width="1" height="5" fill="#4a4e55"/><rect x="239.0" y="0" width="1" height="10" fill="#4a4e55"/><rect x="243.0" y="0" width="1" height="5" fill="#4a4e55"/><rect x="247.0" y="0" width="1" height="10" fill="#4a4e55"/><rect x="251.0" y="0" width="1" height="5" fill="#4a4e55"/><rect x="255.0" y="0" width="1" height="10" fill="#4a4e55"/><rect x="259.0" y="0" width="1" height="5" fill="#4a4e55"/><rect x="263.0" y="0" width="1" height="10" fill="#4a4e55"/><rect x="267.0" y="0" width="1" height="5" fill="#4a4e55"/><rect x="271.0" y="0" width="1" height="10" fill="#4a4e55"/><rect x="275.0" y="0" width="1" height="5" fill="#4a4e55"/><rect x="279.0" y="0" width="1" height="10" fill="#4a4e55"/><rect x="283.0" y="0" width="1" height="5" fill="#4a4e55"/><rect x="287.0" y="0" width="1" height="10" fill="#4a4e55"/><rect x="291.0" y="0" width="1" height="5" fill="#4a4e55"/><rect x="295.0" y="0" width="1" height="10" fill="#4a4e55"/><rect x="299.0" y="0" width="1" height="5" fill="#4a4e55"/><rect x="303.0" y="0" width="1" height="10" fill="#4a4e55"/><rect x="307.0" y="0" width="1" height="5" fill="#4a4e55"/><rect x="311.0" y="0" width="1" height="10" fill="#4a4e55"/><rect x="315.0" y="0" width="1" height="5" fill="#4a4e55"/><rect x="319.0" y="0" width="1" height="10" fill="#4a4e55"/><rect x="323.0" y="0" width="1" height="5" fill="#4a4e55"/><rect x="327.0" y="0" width="1" height="10" fill="#4a4e55"/><rect x="331.0" y="0" width="1" height="5" fill="#4a4e55"/><rect x="335.0" y="0" width="1" height="10" fill="#4a4e55"/><rect x="339.0" y="0" width="1" height="5" fill="#4a4e55"/><rect x="343.0" y="0" width="1" height="10" fill="#4a4e55"/><rect x="347.0" y="0" width="1" height="5" fill="#4a4e55"/><rect x="351.0" y="0" width="1" height="10" fill="#4a4e55"/><rect x="355.0" y="0" width="1" height="5" fill="#4a4e55"/><rect x="359.0" y="0" width="1" height="10" fill="#4a4e55"/><rect x="363.0" y="0" width="1" height="5" fill="#4a4e55"/><rect x="367.0" y="0" width="1" height="10" fill="#4a4e55"/><rect x="371.0" y="0" width="1" height="5" fill="#4a4e55"/><rect x="375.0" y="0" width="1" height="10" fill="#4a4e55"/><rect x="379.0" y="0" width="1" height="5" fill="#4a4e55"/><rect x="383.0" y="0" width="1" height="10" fill="#4a4e55"/><rect x="387.0" y="0" width="1" height="5" fill="#4a4e55"/><rect x="391.0" y="0" width="1" height="10" fill="#4a4e55"/><rect x="395.0" y="0" width="1" height="5" fill="#4a4e55"/><rect x="399.0" y="0" width="1" height="10" fill="#4a4e55"/><rect x="403.0" y="0" width="1" height="5" fill="#4a4e55"/><rect x="407.0" y="0" width="1" height="10" fill="#4a4e55"/><rect x="411.0" y="0" width="1" height="5" fill="#4a4e55"/><rect x="415.0" y="0" width="1" height="10" fill="#4a4e55"/><rect x="419.0" y="0" width="1" height="5" fill="#4a4e55"/><rect x="423.0" y="0" width="1" height="10" fill="#4a4e55"/><rect x="427.0" y="0" width="1" height="5" fill="#4a4e55"/><rect x="431.0" y="0" width="1" height="10" fill="#4a4e55"/><rect x="435.0" y="0" width="1" height="5" fill="#4a4e55"/><rect x="439.0" y="0" width="1" height="10" fill="#4a4e55"/><rect x="443.0" y="0" width="1" height="5" fill="#4a4e55"/><rect x="447.0" y="0" width="1" height="10" fill="#4a4e55"/><rect x="451.0" y="0" width="1" height="5" fill="#4a4e55"/><rect x="455.0" y="0" width="1" height="10" fill="#4a4e55"/><rect x="459.0" y="0" width="1" height="5" fill="#4a4e55"/><rect x="463.0" y="0" width="1" height="10" fill="#4a4e55"/><rect x="467.0" y="0" width="1" height="5" fill="#4a4e55"/><rect x="471.0" y="0" width="1" height="10" fill="#4a4e55"/><rect x="475.0" y="0" width="1" height="5" fill="#4a4e55"/><rect x="479.0" y="0" width="1" height="10" fill="#4a4e55"/><rect x="483.0" y="0" width="1" height="5" fill="#4a4e55"/><rect x="487.0" y="0" width="1" height="10" fill="#4a4e55"/><rect x="491.0" y="0" width="1" height="5" fill="#4a4e55"/><rect x="495.0" y="0" width="1" height="10" fill="#4a4e55"/><rect x="499.0" y="0" width="1" height="5" fill="#4a4e55"/><rect x="503.0" y="0" width="1" height="10" fill="#4a4e55"/><rect x="507.0" y="0" width="1" height="5" fill="#4a4e55"/><rect x="511.0" y="0" width="1" height="10" fill="#4a4e55"/><rect x="515.0" y="0" width="1" height="5" fill="#4a4e55"/><rect x="519.0" y="0" width="1" height="10" fill="#4a4e55"/><rect x="523.0" y="0" width="1" height="5" fill="#4a4e55"/><rect x="527.0" y="0" width="1" height="10" fill="#4a4e55"/><rect x="531.0" y="0" width="1" height="5" fill="#4a4e55"/><rect x="535.0" y="0" width="1" height="10" fill="#4a4e55"/><rect x="539.0" y="0" width="1" height="5" fill="#4a4e55"/><rect x="543.0" y="0" width="1" height="10" fill="#4a4e55"/><rect x="547.0" y="0" width="1" height="5" fill="#4a4e55"/><rect x="551.0" y="0" width="1" height="10" fill="#4a4e55"/><rect x="555.0" y="0" width="1" height="5" fill="#4a4e55"/><rect x="559.0" y="0" width="1" height="10" fill="#4a4e55"/><rect x="563.0" y="0" width="1" height="5" fill="#4a4e55"/><rect x="567.0" y="0" width="1" height="10" fill="#4a4e55"/><rect x="571.0" y="0" width="1" height="5" fill="#4a4e55"/><rect x="575.0" y="0" width="1" height="10" fill="#4a4e55"/><rect x="579.0" y="0" width="1" height="5" fill="#4a4e55"/><rect x="583.0" y="0" width="1" height="10" fill="#4a4e55"/><rect x="587.0" y="0" width="1" height="5" fill="#4a4e55"/><rect x="591.0" y="0" width="1" height="10" fill="#4a4e55"/><rect x="595.0" y="0" width="1" height="5" fill="#4a4e55"/><rect x="599.0" y="0" width="1" height="10" fill="#4a4e55"/><rect x="603.0" y="0" width="1" height="5" fill="#4a4e55"/><rect x="607.0" y="0" width="1" height="10" fill="#4a4e55"/><rect x="611.0" y="0" width="1" height="5" fill="#4a4e55"/><rect x="615.0" y="0" width="1" height="10" fill="#4a4e55"/><rect x="619.0" y="0" width="1" height="5" fill="#4a4e55"/><rect x="623.0" y="0" width="1" height="10" fill="#4a4e55"/><rect x="627.0" y="0" width="1" height="5" fill="#4a4e55"/><rect x="631.0" y="0" width="1" height="10" fill="#4a4e55"/><rect x="635.0" y="0" width="1" height="5" fill="#4a4e55"/><rect x="639.0" y="0" width="1" height="10" fill="#4a4e55"/><rect x="643.0" y="0" width="1" height="5" fill="#4a4e55"/><rect x="647.0" y="0" width="1" height="10" fill="#4a4e55"/><rect x="651.0" y="0" width="1" height="5" fill="#4a4e55"/><rect x="655.0" y="0" width="1" height="10" fill="#4a4e55"/><rect x="659.0" y="0" width="1" height="5" fill="#4a4e55"/><rect x="663.0" y="0" width="1" height="10" fill="#4a4e55"/><rect x="667.0" y="0" width="1" height="5" fill="#4a4e55"/><rect x="671.0" y="0" width="1" height="10" fill="#4a4e55"/><rect x="675.0" y="0" width="1" height="5" fill="#4a4e55"/><rect x="679.0" y="0" width="1" height="10" fill="#4a4e55"/><rect x="683.0" y="0" width="1" height="5" fill="#4a4e55"/><rect x="687.0" y="0" width="1" height="10" fill="#4a4e55"/><rect x="691.0" y="0" width="1" height="5" fill="#4a4e55"/><rect x="695.0" y="0" width="1" height="10" fill="#4a4e55"/><rect x="699.0" y="0" width="1" height="5" fill="#4a4e55"/><rect x="703.0" y="0" width="1" height="10" fill="#4a4e55"/><rect x="707.0" y="0" width="1" height="5" fill="#4a4e55"/><rect x="711.0" y="0" width="1" height="10" fill="#4a4e55"/><rect x="715.0" y="0" width="1" height="5" fill="#4a4e55"/><rect x="719.0" y="0" width="1" height="10" fill="#4a4e55"/><rect x="723.0" y="0" width="1" height="5" fill="#4a4e55"/><rect x="727.0" y="0" width="1" height="10" fill="#4a4e55"/><rect x="731.0" y="0" width="1" height="5" fill="#4a4e55"/><rect x="735.0" y="0" width="1" height="10" fill="#4a4e55"/><rect x="739.0" y="0" width="1" height="5" fill="#4a4e55"/><rect x="743.0" y="0" width="1" height="10" fill="#4a4e55"/><rect x="747.0" y="0" width="1" height="5" fill="#4a4e55"/><rect x="751.0" y="0" width="1" height="10" fill="#4a4e55"/><rect x="755.0" y="0" width="1" height="5" fill="#4a4e55"/><rect x="759.0" y="0" width="1" height="10" fill="#4a4e55"/><rect x="763.0" y="0" width="1" height="5" fill="#4a4e55"/><rect x="767.0" y="0" width="1" height="10" fill="#4a4e55"/><rect x="771.0" y="0" width="1" height="5" fill="#4a4e55"/><rect x="775.0" y="0" width="1" height="10" fill="#4a4e55"/><rect x="779.0" y="0" width="1" height="5" fill="#4a4e55"/><rect x="783.0" y="0" width="1" height="10" fill="#4a4e55"/><rect x="787.0" y="0" width="1" height="5" fill="#4a4e55"/><rect x="791.0" y="0" width="1" height="10" fill="#4a4e55"/><rect x="795.0" y="0" width="1" height="5" fill="#4a4e55"/><rect x="799.0" y="0" width="1" height="10" fill="#4a4e55"/><rect x="803.0" y="0" width="1" height="5" fill="#4a4e55"/><rect x="807.0" y="0" width="1" height="10" fill="#4a4e55"/><rect x="811.0" y="0" width="1" height="5" fill="#4a4e55"/><rect x="815.0" y="0" width="1" height="10" fill="#4a4e55"/><rect x="819.0" y="0" width="1" height="5" fill="#4a4e55"/><rect x="823.0" y="0" width="1" height="10" fill="#4a4e55"/><rect x="827.0" y="0" width="1" height="5" fill="#4a4e55"/><rect x="831.0" y="0" width="1" height="10" fill="#4a4e55"/><rect x="835.0" y="0" width="1" height="5" fill="#4a4e55"/><rect x="839.0" y="0" width="1" height="10" fill="#4a4e55"/><rect x="843.0" y="0" width="1" height="5" fill="#4a4e55"/><rect x="847.0" y="0" width="1" height="10" fill="#4a4e55"/><rect x="851.0" y="0" width="1" height="5" fill="#4a4e55"/><rect x="855.0" y="0" width="1" height="10" fill="#4a4e55"/><rect x="859.0" y="0" width="1" height="5" fill="#4a4e55"/><rect x="863.0" y="0" width="1" height="10" fill="#4a4e55"/><rect x="867.0" y="0" width="1" height="5" fill="#4a4e55"/><rect x="871.0" y="0" width="1" height="10" fill="#4a4e55"/><rect x="875.0" y="0" width="1" height="5" fill="#4a4e55"/><rect x="879.0" y="0" width="1" height="10" fill="#4a4e55"/><rect x="883.0" y="0" width="1" height="5" fill="#4a4e55"/><rect x="887.0" y="0" width="1" height="10" fill="#4a4e55"/><rect x="891.0" y="0" width="1" height="5" fill="#4a4e55"/><rect x="895.0" y="0" width="1" height="10" fill="#4a4e55"/><rect x="899.0" y="0" width="1" height="5" fill="#4a4e55"/><rect x="903.0" y="0" width="1" height="10" fill="#4a4e55"/><rect x="907.0" y="0" width="1" height="5" fill="#4a4e55"/><rect x="911.0" y="0" width="1" height="10" fill="#4a4e55"/><rect x="915.0" y="0" width="1" height="5" fill="#4a4e55"/><rect x="919.0" y="0" width="1" height="10" fill="#4a4e55"/><rect x="923.0" y="0" width="1" height="5" fill="#4a4e55"/><rect x="927.0" y="0" width="1" height="10" fill="#4a4e55"/><rect x="931.0" y="0" width="1" height="5" fill="#4a4e55"/><rect x="935.0" y="0" width="1" height="10" fill="#4a4e55"/><rect x="939.0" y="0" width="1" height="5" fill="#4a4e55"/><rect x="943.0" y="0" width="1" height="10" fill="#4a4e55"/><rect x="947.0" y="0" width="1" height="5" fill="#4a4e55"/><rect x="951.0" y="0" width="1" height="10" fill="#4a4e55"/><rect x="955.0" y="0" width="1" height="5" fill="#4a4e55"/><rect x="959.0" y="0" width="1" height="10" fill="#4a4e55"/><rect x="963.0" y="0" width="1" height="5" fill="#4a4e55"/><rect x="967.0" y="0" width="1" height="10" fill="#4a4e55"/><rect x="971.0" y="0" width="1" height="5" fill="#4a4e55"/><rect x="975.0" y="0" width="1" height="10" fill="#4a4e55"/><rect x="979.0" y="0" width="1" height="5" fill="#4a4e55"/><rect x="983.0" y="0" width="1" height="10" fill="#4a4e55"/><rect x="987.0" y="0" width="1" height="5" fill="#4a4e55"/><rect x="991.0" y="0" width="1" height="10" fill="#4a4e55"/><rect x="995.0" y="0" width="1" height="5" fill="#4a4e55"/><rect x="999.0" y="0" width="1" height="10" fill="#4a4e55"/><rect x="0" y="0" width="1" height="24" fill="url(#mj)"/><rect x="95" y="0" width="1" height="14" fill="#8e8e92"/><rect x="192" y="0" width="1" height="24" fill="url(#mj)"/><rect x="287" y="0" width="1" height="14" fill="#8e8e92"/><rect x="384" y="0" width="1" height="24" fill="url(#mj)"/><rect x="479" y="0" width="1" height="14" fill="#8e8e92"/><rect x="575" y="0" width="1" height="24" fill="url(#mj)"/><rect x="670" y="0" width="1" height="14" fill="#8e8e92"/><rect x="767" y="0" width="1" height="24" fill="url(#mj)"/><rect x="862" y="0" width="1" height="14" fill="#8e8e92"/><rect x="959" y="0" width="1" height="24" fill="url(#mj)"/><rect x="1054" y="0" width="1" height="14" fill="#8e8e92"/></svg>
<div style="left:941px;top:526px;width:999px;height:18px;overflow:hidden;">
<span style="left:5.7px;top:2.0px;height:16px;line-height:16px;font-size:10px;color:#9a9a9a;letter-spacing:0.24px;">00:00:00:00</span>
<span style="left:197.6px;top:2.0px;height:16px;line-height:16px;font-size:10px;color:#9a9a9a;letter-spacing:0.24px;">00:00:08:00</span>
<span style="left:389.6px;top:2.0px;height:16px;line-height:16px;font-size:10px;color:#9a9a9a;letter-spacing:0.24px;">00:00:16:00</span>
<span style="left:581.5px;top:2.0px;height:16px;line-height:16px;font-size:10px;color:#9a9a9a;letter-spacing:0.24px;">00:00:24:00</span>
<span style="left:773.4px;top:2.0px;height:16px;line-height:16px;font-size:10px;color:#9a9a9a;letter-spacing:0.24px;">00:00:32:00</span>
<span style="left:965.4px;top:2.0px;height:16px;line-height:16px;font-size:10px;color:#9a9a9a;letter-spacing:0.24px;">00:00:40:00</span>
</div>
<div style="left:708px;top:557px;width:232px;height:449px;background:#212126;"></div>
<div style="left:708px;top:557px;width:3.4px;height:228px;background:#4a7fb8;"></div>
<div style="left:708px;top:789px;width:3.4px;height:217px;background:#3f9f68;"></div>
<div style="left:727px;top:557px;width:1px;height:449px;background:#0b0b0d;"></div>
<div style="left:711.4px;top:557px;width:1px;height:449px;background:#101012;"></div>
<svg style="left:786.5px;top:563.3px;" width="13" height="14" viewBox="0 0 13 14"><path d="M3 7 V4.5 A3.5 3.5 0 0 1 10 4.5 V5.5" fill="none" stroke="#5a5a5e" stroke-width="1.3"/><rect x=".8" y="7" width="11.4" height="6" rx="1" fill="none" stroke="#5a5a5e" stroke-width="1.3"/></svg>
<svg style="left:810.5px;top:564.0px;" width="18" height="13" viewBox="0 0 18 13"><rect x=".7" y=".7" width="16.6" height="11.6" fill="#141417" stroke="#f0f0f0" stroke-width="1.4"/><path d="M7.3 3.8 L4.3 6.5 L7.3 9.2 M10.7 3.8 L13.7 6.5 L10.7 9.2" fill="none" stroke="#f0f0f0" stroke-width="1.4"/></svg>
<svg style="left:839.5px;top:564.5px;" width="18" height="12" viewBox="0 0 18 12"><rect x=".7" y=".7" width="16.6" height="10.6" fill="#141417" stroke="#f0f0f0" stroke-width="1.4"/><rect x="2.5" y="2.6" width="1" height="1.2" fill="#f0f0f0"/><rect x="2.5" y="5.4" width="1" height="1.2" fill="#f0f0f0"/><rect x="2.5" y="8.2" width="1" height="1.2" fill="#f0f0f0"/><rect x="14.5" y="2.6" width="1" height="1.2" fill="#f0f0f0"/><rect x="14.5" y="5.4" width="1" height="1.2" fill="#f0f0f0"/><rect x="14.5" y="8.2" width="1" height="1.2" fill="#f0f0f0"/></svg>
<span style="left:742.0px;top:587.5px;height:18px;line-height:18px;font-size:12px;color:#4c4c50;letter-spacing:0.05px;">0 Clip</span>
<div style="left:708px;top:615px;width:232px;height:1px;background:#0b0b0d;"></div>
<div style="left:771px;top:616px;width:1px;height:26px;background:#0b0b0d;"></div>
<div style="left:712px;top:642px;width:228px;height:1px;background:#0b0b0d;"></div>
<span style="left:744.0px;top:620.5px;height:19px;line-height:19px;font-size:13px;color:#f0f0f0;font-weight:700;letter-spacing:0.05px;">V2</span>
<span style="left:781.0px;top:620.0px;height:19px;line-height:19px;font-size:13px;color:#f0f0f0;letter-spacing:0.02px;">Video 2</span>
<svg style="left:786.5px;top:648.3px;" width="13" height="14" viewBox="0 0 13 14"><path d="M3 7 V4.5 A3.5 3.5 0 0 1 10 4.5 V5.5" fill="none" stroke="#5a5a5e" stroke-width="1.3"/><rect x=".8" y="7" width="11.4" height="6" rx="1" fill="none" stroke="#5a5a5e" stroke-width="1.3"/></svg>
<svg style="left:810.5px;top:649.0px;" width="18" height="13" viewBox="0 0 18 13"><rect x=".7" y=".7" width="16.6" height="11.6" fill="#141417" stroke="#f0f0f0" stroke-width="1.4"/><path d="M7.3 3.8 L4.3 6.5 L7.3 9.2 M10.7 3.8 L13.7 6.5 L10.7 9.2" fill="none" stroke="#f0f0f0" stroke-width="1.4"/></svg>
<svg style="left:839.5px;top:649.5px;" width="18" height="12" viewBox="0 0 18 12"><rect x=".7" y=".7" width="16.6" height="10.6" fill="#141417" stroke="#f0f0f0" stroke-width="1.4"/><rect x="2.5" y="2.6" width="1" height="1.2" fill="#f0f0f0"/><rect x="2.5" y="5.4" width="1" height="1.2" fill="#f0f0f0"/><rect x="2.5" y="8.2" width="1" height="1.2" fill="#f0f0f0"/><rect x="14.5" y="2.6" width="1" height="1.2" fill="#f0f0f0"/><rect x="14.5" y="5.4" width="1" height="1.2" fill="#f0f0f0"/><rect x="14.5" y="8.2" width="1" height="1.2" fill="#f0f0f0"/></svg>
<span style="left:742.0px;top:672.5px;height:18px;line-height:18px;font-size:12px;color:#4c4c50;letter-spacing:0.04px;">4 Clips</span>
<div style="left:708px;top:700px;width:232px;height:1px;background:#0b0b0d;"></div>
<div style="left:771px;top:701px;width:1px;height:26px;background:#0b0b0d;"></div>
<div style="left:712px;top:727px;width:228px;height:1px;background:#0b0b0d;"></div>
<div style="left:735px;top:703.5px;width:32px;height:19.5px;border:1.3px solid #d9483b;border-radius:1.5px;"></div>
<span style="left:743.5px;top:704.0px;height:19px;line-height:19px;font-size:13px;color:#5a5a5e;letter-spacing:-0.45px;">V1</span>
<span style="left:781.0px;top:705.0px;height:19px;line-height:19px;font-size:13px;color:#f0f0f0;letter-spacing:0.02px;">Video 1</span>
<svg style="left:786.5px;top:733.3px;" width="13" height="14" viewBox="0 0 13 14"><path d="M3 7 V4.5 A3.5 3.5 0 0 1 10 4.5 V5.5" fill="none" stroke="#5a5a5e" stroke-width="1.3"/><rect x=".8" y="7" width="11.4" height="6" rx="1" fill="none" stroke="#5a5a5e" stroke-width="1.3"/></svg>
<svg style="left:810.5px;top:734.0px;" width="18" height="13" viewBox="0 0 18 13"><rect x=".7" y=".7" width="16.6" height="11.6" fill="#141417" stroke="#f0f0f0" stroke-width="1.4"/><path d="M7.3 3.8 L4.3 6.5 L7.3 9.2 M10.7 3.8 L13.7 6.5 L10.7 9.2" fill="none" stroke="#f0f0f0" stroke-width="1.4"/></svg>
<svg style="left:839.5px;top:734.5px;" width="18" height="12" viewBox="0 0 18 12"><rect x=".7" y=".7" width="16.6" height="10.6" fill="#141417" stroke="#f0f0f0" stroke-width="1.4"/><rect x="2.5" y="2.6" width="1" height="1.2" fill="#f0f0f0"/><rect x="2.5" y="5.4" width="1" height="1.2" fill="#f0f0f0"/><rect x="2.5" y="8.2" width="1" height="1.2" fill="#f0f0f0"/><rect x="14.5" y="2.6" width="1" height="1.2" fill="#f0f0f0"/><rect x="14.5" y="5.4" width="1" height="1.2" fill="#f0f0f0"/><rect x="14.5" y="8.2" width="1" height="1.2" fill="#f0f0f0"/></svg>
<span style="left:742.0px;top:757.5px;height:18px;line-height:18px;font-size:12px;color:#4c4c50;letter-spacing:0.04px;">2 Clips</span>
<div style="left:708px;top:784px;width:1243px;height:5px;background:#060607;"></div>
<div style="left:708px;top:785px;width:1243px;height:2.8px;background:#3c3c3e;"></div>
<div style="left:771px;top:788.2px;width:1px;height:25px;background:#0b0b0d;"></div>
<div style="left:712px;top:813.7px;width:228px;height:1px;background:#0b0b0d;"></div>
<div style="left:708px;top:848.2px;width:232px;height:1px;background:#0b0b0d;"></div>
<span style="left:743.5px;top:793.5px;height:19px;line-height:19px;font-size:13px;color:#f0f0f0;font-weight:700;letter-spacing:0.19px;">A1</span>
<span style="left:781.0px;top:793.0px;height:19px;line-height:19px;font-size:13px;color:#f0f0f0;letter-spacing:0.13px;">Audio 1</span>
<span style="left:917.0px;top:795.1px;height:17px;line-height:17px;font-size:11px;color:#55555a;letter-spacing:-0.44px;">2.0</span>
<svg style="left:786.5px;top:823.8px;" width="13" height="14" viewBox="0 0 13 14"><path d="M3 7 V4.5 A3.5 3.5 0 0 1 10 4.5 V5.5" fill="none" stroke="#5a5a5e" stroke-width="1.3"/><rect x=".8" y="7" width="11.4" height="6" rx="1" fill="none" stroke="#5a5a5e" stroke-width="1.3"/></svg>
<svg style="left:810.5px;top:824.5px;" width="18" height="13" viewBox="0 0 18 13"><rect x=".7" y=".7" width="16.6" height="11.6" fill="#141417" stroke="#f0f0f0" stroke-width="1.4"/><path d="M7.3 3.8 L4.3 6.5 L7.3 9.2 M10.7 3.8 L13.7 6.5 L10.7 9.2" fill="none" stroke="#f0f0f0" stroke-width="1.4"/></svg>
<div style="left:838px;top:821px;width:20.5px;height:20.5px;border:1.2px solid #55555a;border-radius:2px;"></div>
<span style="left:844.5px;top:822.8px;height:17px;line-height:17px;font-size:11px;color:#6e6e72;">S</span>
<div style="left:867px;top:821px;width:20.5px;height:20.5px;border:1.2px solid #55555a;border-radius:2px;"></div>
<span style="left:872.6px;top:822.8px;height:17px;line-height:17px;font-size:11px;color:#6e6e72;">M</span>
<div style="left:771px;top:849.2px;width:1px;height:25px;background:#0b0b0d;"></div>
<div style="left:712px;top:874.7px;width:228px;height:1px;background:#0b0b0d;"></div>
<div style="left:708px;top:909.2px;width:232px;height:1px;background:#0b0b0d;"></div>
<span style="left:743.5px;top:854.5px;height:19px;line-height:19px;font-size:13px;color:#f0f0f0;font-weight:700;letter-spacing:0.19px;">A2</span>
<span style="left:781.0px;top:854.0px;height:19px;line-height:19px;font-size:13px;color:#f0f0f0;letter-spacing:0.13px;">Audio 2</span>
<span style="left:917.0px;top:856.1px;height:17px;line-height:17px;font-size:11px;color:#55555a;letter-spacing:-0.44px;">2.0</span>
<svg style="left:786.5px;top:884.8px;" width="13" height="14" viewBox="0 0 13 14"><path d="M3 7 V4.5 A3.5 3.5 0 0 1 10 4.5 V5.5" fill="none" stroke="#5a5a5e" stroke-width="1.3"/><rect x=".8" y="7" width="11.4" height="6" rx="1" fill="none" stroke="#5a5a5e" stroke-width="1.3"/></svg>
<svg style="left:810.5px;top:885.5px;" width="18" height="13" viewBox="0 0 18 13"><rect x=".7" y=".7" width="16.6" height="11.6" fill="#141417" stroke="#f0f0f0" stroke-width="1.4"/><path d="M7.3 3.8 L4.3 6.5 L7.3 9.2 M10.7 3.8 L13.7 6.5 L10.7 9.2" fill="none" stroke="#f0f0f0" stroke-width="1.4"/></svg>
<div style="left:838px;top:882px;width:20.5px;height:20.5px;border:1.2px solid #55555a;border-radius:2px;"></div>
<span style="left:844.5px;top:883.8px;height:17px;line-height:17px;font-size:11px;color:#6e6e72;">S</span>
<div style="left:867px;top:882px;width:20.5px;height:20.5px;border:1.2px solid #55555a;border-radius:2px;"></div>
<span style="left:872.6px;top:883.8px;height:17px;line-height:17px;font-size:11px;color:#6e6e72;">M</span>
<div style="left:771px;top:910.2px;width:1px;height:25px;background:#0b0b0d;"></div>
<div style="left:712px;top:935.7px;width:228px;height:1px;background:#0b0b0d;"></div>
<div style="left:708px;top:970.2px;width:232px;height:1px;background:#0b0b0d;"></div>
<span style="left:743.5px;top:915.5px;height:19px;line-height:19px;font-size:13px;color:#f0f0f0;font-weight:700;letter-spacing:0.19px;">A3</span>
<span style="left:781.0px;top:915.0px;height:19px;line-height:19px;font-size:13px;color:#f0f0f0;letter-spacing:0.13px;">Audio 3</span>
<span style="left:917.0px;top:917.1px;height:17px;line-height:17px;font-size:11px;color:#55555a;letter-spacing:-0.44px;">2.0</span>
<svg style="left:786.5px;top:945.8px;" width="13" height="14" viewBox="0 0 13 14"><path d="M3 7 V4.5 A3.5 3.5 0 0 1 10 4.5 V5.5" fill="none" stroke="#5a5a5e" stroke-width="1.3"/><rect x=".8" y="7" width="11.4" height="6" rx="1" fill="none" stroke="#5a5a5e" stroke-width="1.3"/></svg>
<svg style="left:810.5px;top:946.5px;" width="18" height="13" viewBox="0 0 18 13"><rect x=".7" y=".7" width="16.6" height="11.6" fill="#141417" stroke="#f0f0f0" stroke-width="1.4"/><path d="M7.3 3.8 L4.3 6.5 L7.3 9.2 M10.7 3.8 L13.7 6.5 L10.7 9.2" fill="none" stroke="#f0f0f0" stroke-width="1.4"/></svg>
<div style="left:838px;top:943px;width:20.5px;height:20.5px;border:1.2px solid #55555a;border-radius:2px;"></div>
<span style="left:844.5px;top:944.8px;height:17px;line-height:17px;font-size:11px;color:#6e6e72;">S</span>
<div style="left:867px;top:943px;width:20.5px;height:20.5px;border:1.2px solid #55555a;border-radius:2px;"></div>
<span style="left:872.6px;top:944.8px;height:17px;line-height:17px;font-size:11px;color:#6e6e72;">M</span>
<div style="left:771px;top:971.2px;width:1px;height:25px;background:#0b0b0d;"></div>
<div style="left:712px;top:996.7px;width:228px;height:1px;background:#0b0b0d;"></div>
<span style="left:743.5px;top:976.5px;height:19px;line-height:19px;font-size:13px;color:#f0f0f0;font-weight:700;letter-spacing:0.19px;">A4</span>
<span style="left:781.0px;top:976.0px;height:19px;line-height:19px;font-size:13px;color:#f0f0f0;letter-spacing:0.13px;">Audio 4</span>
<span style="left:917.0px;top:978.1px;height:17px;line-height:17px;font-size:11px;color:#55555a;letter-spacing:-0.44px;">2.0</span>
<div style="left:836px;top:999px;width:60px;height:7px;overflow:hidden;"><div style="left:2px;top:4px;width:20.5px;height:20.5px;border:1.2px solid #55555a;border-radius:2px;"></div><div style="left:31px;top:4px;width:20.5px;height:20.5px;border:1.2px solid #55555a;border-radius:2px;"></div></div>
<div style="left:941px;top:557px;width:1000px;height:449px;background:#28282e;"></div>
<div style="left:941px;top:615px;width:1000px;height:1px;background:#212125;"></div>
<div style="left:941px;top:700px;width:1000px;height:1px;background:#212125;"></div>
<div style="left:941px;top:848.2px;width:1000px;height:1px;background:#212125;"></div>
<div style="left:941px;top:909.2px;width:1000px;height:1px;background:#212125;"></div>
<div style="left:941px;top:970.2px;width:1000px;height:1px;background:#212125;"></div>
<div style="left:1132.3300000000002px;top:557px;width:1px;height:449px;background:#38383d;"></div>
<div style="left:1324.26px;top:557px;width:1px;height:449px;background:#38383d;"></div>
<div style="left:1516.19px;top:557px;width:1px;height:449px;background:#38383d;"></div>
<div style="left:1708.1200000000001px;top:557px;width:1px;height:449px;background:#38383d;"></div>
<div style="left:1900.0500000000002px;top:557px;width:1px;height:449px;background:#38383d;"></div>
<div style="left:940px;top:784px;width:1002px;height:5px;background:#060607;"></div>
<div style="left:940px;top:785px;width:1002px;height:2.8px;background:#3c3c3e;"></div>
<div style="left:942px;top:617.3px;width:69.7px;height:81.2px;background:#17607f;border-radius:3px;border:1px solid #124c68;"></div>
<div style="left:943px;top:674.5px;width:68px;height:1px;background:#134f6b;"></div>
<span style="left:945.3px;top:679.0px;height:18px;line-height:18px;font-size:12px;color:#e4e9ef;letter-spacing:-0.31px;">Adjus...</span>
<svg style="left:996px;top:681px;" width="14" height="14" viewBox="0 0 14 14"><path d="M8.5 0 L9.6 3.4 L13 4.5 L9.6 5.6 L8.5 9 L7.4 5.6 L4 4.5 L7.4 3.4 Z M3 5.5 L3.7 7.8 L6 8.5 L3.7 9.2 L3 11.5 L2.3 9.2 L0 8.5 L2.3 7.8 Z M8.5 9.5 L9.1 11.4 L11 12 L9.1 12.6 L8.5 14.5 L7.9 12.6 L6 12 L7.9 11.4 Z" fill="#e8eef2"/></svg>
<div style="left:1013.5px;top:617.3px;width:100.6px;height:81.2px;background:#4577a6;border-radius:3px;"></div>
<div style="left:1015.3px;top:619.3px;width:97.2px;height:55.4px;background:#000;"></div>
<svg style="left:1021px;top:682px;" width="13" height="12" viewBox="0 0 13 12"><g fill="none" stroke="#e4e9ef" stroke-width="1.5" stroke-linecap="round"><path d="M5.6 3.8 L7.2 2.6 A2.4 2.4 0 0 1 10.4 6.2 L8.8 7.4"/><path d="M7.4 8.2 L5.8 9.4 A2.4 2.4 0 0 1 2.6 5.8 L4.2 4.6"/><path d="M5 7.2 L8 4.8"/></g></svg>
<span style="left:1041.5px;top:679.0px;height:18px;line-height:18px;font-size:12px;color:#e4e9ef;letter-spacing:-0.09px;">Logointro1...</span>
<div style="left:942px;top:703px;width:69px;height:80.3px;background:#4577a6;border-radius:3px;"></div>
<svg style="left:943px;top:705px;overflow:hidden;border:1px solid #0a0a0c;box-sizing:content-box" width="65" height="54" viewBox="0 0 66 54"><rect width="66" height="54" fill="#fff"/><rect x="5" y="25" width="3.4" height="3.4" fill="#a9d4ea"/><rect x="56" y="25" width="3.4" height="3.4" fill="#a9d4ea"/><rect x="56" y="17" width="3.4" height="3.4" fill="#a9d4ea"/><rect x="13" y="13" width="3.4" height="3.4" fill="#a9d4ea"/><rect x="60" y="29" width="3.4" height="3.4" fill="#a9d4ea"/><rect x="60" y="33" width="3.4" height="3.4" fill="#a9d4ea"/><rect x="5" y="33" width="3.4" height="3.4" fill="#a9d4ea"/><rect x="52" y="13" width="3.4" height="3.4" fill="#a9d4ea"/><rect x="60" y="1" width="3.4" height="3.4" fill="#a9d4ea"/><rect x="1" y="21" width="3.4" height="3.4" fill="#a9d4ea"/><rect x="52" y="25" width="3.4" height="3.4" fill="#a9d4ea"/><rect x="1" y="9" width="3.4" height="3.4" fill="#a9d4ea"/><rect x="60" y="49" width="3.4" height="3.4" fill="#a9d4ea"/><rect x="5" y="13" width="3.4" height="3.4" fill="#a9d4ea"/><rect x="56" y="1" width="3.4" height="3.4" fill="#a9d4ea"/><rect x="13" y="45" width="3.4" height="3.4" fill="#a9d4ea"/><rect x="62" y="41" width="1.2" height="1.4" fill="#111"/><rect x="53" y="44" width="1.2" height="1.4" fill="#111"/><rect x="2" y="32" width="1.2" height="1.4" fill="#111"/><rect x="53" y="47" width="1.2" height="1.4" fill="#111"/><rect x="57" y="11" width="1.2" height="1.4" fill="#111"/><rect x="57" y="35" width="1.2" height="1.4" fill="#111"/><rect x="2" y="14" width="1.2" height="1.4" fill="#111"/><rect x="57" y="8" width="1.2" height="1.4" fill="#111"/><rect x="2" y="2" width="1.2" height="1.4" fill="#111"/><rect x="14" y="17" width="1.2" height="1.4" fill="#111"/><rect x="53" y="32" width="1.2" height="1.4" fill="#111"/><rect x="14" y="47" width="1.2" height="1.4" fill="#111"/><rect x="6" y="17" width="1.2" height="1.4" fill="#111"/><rect x="57" y="5" width="1.2" height="1.4" fill="#111"/><rect x="14" y="23" width="1.2" height="1.4" fill="#111"/><rect x="2" y="20" width="1.2" height="1.4" fill="#111"/><rect x="6" y="8" width="1.2" height="1.4" fill="#111"/><rect x="2" y="47" width="1.2" height="1.4" fill="#111"/><rect x="53" y="38" width="1.2" height="1.4" fill="#111"/><rect x="6" y="32" width="1.2" height="1.4" fill="#111"/><rect x="6" y="41" width="1.2" height="1.4" fill="#111"/><rect x="10" y="35" width="1.2" height="1.4" fill="#111"/><rect x="17" y="8.5" width="32" height="29" fill="#fff" stroke="#e0241a" stroke-width="1.1"/><rect x="18" y="9.5" width="30" height="3" fill="#f0821c"/><rect x="18" y="33.3" width="30" height="2.6" fill="#f0821c"/><circle cx="22" cy="18" r="2.3" fill="#1a0c06"/><rect x="29" y="15.5" width="11" height="2" fill="#f0821c"/><ellipse cx="35" cy="24" rx="3.8" ry="4.8" fill="#bfb3ae"/><path d="M25 33 Q27 27 35 28 Q43 27 45 33 Z" fill="#5e5c5b"/><rect x="21" y="41" width="13" height="1.6" fill="#a9d4ea"/><rect x="20" y="46" width="13" height="2.4" fill="#a9d4ea"/></svg>
<svg style="left:949px;top:767.3px;" width="13" height="12" viewBox="0 0 13 12"><g fill="none" stroke="#e4e9ef" stroke-width="1.5" stroke-linecap="round"><path d="M5.6 3.8 L7.2 2.6 A2.4 2.4 0 0 1 10.4 6.2 L8.8 7.4"/><path d="M7.4 8.2 L5.8 9.4 A2.4 2.4 0 0 1 2.6 5.8 L4.2 4.6"/><path d="M5 7.2 L8 4.8"/></g></svg>
<span style="left:969.5px;top:764.3px;height:18px;line-height:18px;font-size:12px;color:#e4e9ef;letter-spacing:-0.36px;">88.mkv</span>
<div style="left:1115px;top:703px;width:826.5px;height:81px;background:#4577a6;border:2.3px solid #f2503f;border-right:none;border-radius:3px 0 0 3px;"></div>
<svg style="left:1118px;top:705.5px;overflow:hidden" width="822" height="54" viewBox="0 0 822 54"><rect width="822" height="54" fill="#fff"/><g transform="translate(-54 0)"><g transform="translate(0.0 0)"><rect x="0" y="0" width="93" height="54" fill="#fff"/><rect x="0" y="1" width="93" height="15" fill="#060606"/><rect x="0" y="15.5" width="93" height="1" fill="#c02a1a"/><rect x="3" y="4" width="12" height="1.6" fill="#eee"/><rect x="3" y="7" width="12" height="1.6" fill="#eee"/><rect x="3" y="10" width="9" height="1.6" fill="#eee"/><rect x="21" y="6" width="36" height="3.4" fill="#f07a1a"/><rect x="30" y="11.5" width="14" height="1.2" fill="#2fb83a"/><rect x="60" y="2.5" width="10" height="11.5" fill="#e9c4a0"/><path d="M62 14 Q65 5 68 14 Z" fill="#d8a070"/><rect x="75" y="5" width="14" height="5" fill="#ddd"/><rect x="51" y="34" width="3.4" height="3.4" fill="#a9d4ea"/><rect x="35" y="50" width="3.4" height="3.4" fill="#a9d4ea"/><rect x="15" y="46" width="3.4" height="3.4" fill="#a9d4ea"/><rect x="27" y="18" width="3.4" height="3.4" fill="#a9d4ea"/><rect x="23" y="22" width="3.4" height="3.4" fill="#a9d4ea"/><rect x="35" y="46" width="3.4" height="3.4" fill="#a9d4ea"/><rect x="27" y="42" width="3.4" height="3.4" fill="#a9d4ea"/><rect x="47" y="22" width="3.4" height="3.4" fill="#a9d4ea"/><rect x="51" y="30" width="3.4" height="3.4" fill="#a9d4ea"/><rect x="15" y="30" width="3.4" height="3.4" fill="#a9d4ea"/><rect x="39" y="34" width="3.4" height="3.4" fill="#a9d4ea"/><rect x="23" y="42" width="3.4" height="3.4" fill="#a9d4ea"/><rect x="23" y="22" width="3.4" height="3.4" fill="#a9d4ea"/><rect x="23" y="46" width="3.4" height="3.4" fill="#a9d4ea"/><rect x="23" y="26" width="3.4" height="3.4" fill="#a9d4ea"/><rect x="15" y="18" width="3.4" height="3.4" fill="#a9d4ea"/><rect x="27" y="30" width="3.4" height="3.4" fill="#a9d4ea"/><rect x="23" y="26" width="3.4" height="3.4" fill="#a9d4ea"/><path d="M19 17 V54 M43 17 V54 M14 27 H58" stroke="#bbb" stroke-width=".7"/><circle cx="3.5" cy="48" r="2.6" fill="#1a0c06"/><path d="M1.5 50 Q3.5 52 5.5 50" stroke="#e02a1a" stroke-width="1" fill="none"/><path d="M58 54 Q63 46 77 45 Q91 46 96 54 Z" fill="#5e5c5b"/><ellipse cx="77" cy="40" rx="7.2" ry="9.5" fill="#cbbab2"/><ellipse cx="77" cy="36" rx="7" ry="6" fill="#cfc7c3"/><path d="M71 44 Q77 54 83 44 Z" fill="#e4e0dd"/><rect x="71.5" y="39" width="11" height="1.4" fill="#4a403c"/><ellipse cx="77" cy="44" rx="2" ry="1.6" fill="#c98f86"/></g></g><g transform="translate(43.5 0)"><rect x="0" y="0" width="93" height="54" fill="#fff"/><rect x="0" y="1" width="93" height="15" fill="#060606"/><rect x="0" y="15.5" width="93" height="1" fill="#c02a1a"/><rect x="3" y="4" width="12" height="1.6" fill="#eee"/><rect x="3" y="7" width="12" height="1.6" fill="#eee"/><rect x="3" y="10" width="9" height="1.6" fill="#eee"/><rect x="21" y="6" width="36" height="3.4" fill="#f07a1a"/><rect x="30" y="11.5" width="14" height="1.2" fill="#2fb83a"/><rect x="60" y="2.5" width="10" height="11.5" fill="#e9c4a0"/><path d="M62 14 Q65 5 68 14 Z" fill="#d8a070"/><rect x="75" y="5" width="14" height="5" fill="#ddd"/><rect x="51" y="34" width="3.4" height="3.4" fill="#a9d4ea"/><rect x="35" y="50" width="3.4" height="3.4" fill="#a9d4ea"/><rect x="15" y="46" width="3.4" height="3.4" fill="#a9d4ea"/><rect x="27" y="18" width="3.4" height="3.4" fill="#a9d4ea"/><rect x="23" y="22" width="3.4" height="3.4" fill="#a9d4ea"/><rect x="35" y="46" width="3.4" height="3.4" fill="#a9d4ea"/><rect x="27" y="42" width="3.4" height="3.4" fill="#a9d4ea"/><rect x="47" y="22" width="3.4" height="3.4" fill="#a9d4ea"/><rect x="51" y="30" width="3.4" height="3.4" fill="#a9d4ea"/><rect x="15" y="30" width="3.4" height="3.4" fill="#a9d4ea"/><rect x="39" y="34" width="3.4" height="3.4" fill="#a9d4ea"/><rect x="23" y="42" width="3.4" height="3.4" fill="#a9d4ea"/><rect x="23" y="22" width="3.4" height="3.4" fill="#a9d4ea"/><rect x="23" y="46" width="3.4" height="3.4" fill="#a9d4ea"/><rect x="23" y="26" width="3.4" height="3.4" fill="#a9d4ea"/><rect x="15" y="18" width="3.4" height="3.4" fill="#a9d4ea"/><rect x="27" y="30" width="3.4" height="3.4" fill="#a9d4ea"/><rect x="23" y="26" width="3.4" height="3.4" fill="#a9d4ea"/><path d="M19 17 V54 M43 17 V54 M14 27 H58" stroke="#bbb" stroke-width=".7"/><circle cx="3.5" cy="48" r="2.6" fill="#1a0c06"/><path d="M1.5 50 Q3.5 52 5.5 50" stroke="#e02a1a" stroke-width="1" fill="none"/><path d="M58 54 Q63 46 77 45 Q91 46 96 54 Z" fill="#5e5c5b"/><ellipse cx="77" cy="40" rx="7.2" ry="9.5" fill="#cbbab2"/><ellipse cx="77" cy="36" rx="7" ry="6" fill="#cfc7c3"/><path d="M71 44 Q77 54 83 44 Z" fill="#e4e0dd"/><rect x="71.5" y="39" width="11" height="1.4" fill="#4a403c"/><ellipse cx="77" cy="44" rx="2" ry="1.6" fill="#c98f86"/></g><g transform="translate(140.5 0)"><rect x="0" y="0" width="93" height="54" fill="#fff"/><rect x="0" y="1" width="93" height="15" fill="#060606"/><rect x="0" y="15.5" width="93" height="1" fill="#c02a1a"/><rect x="3" y="4" width="12" height="1.6" fill="#eee"/><rect x="3" y="7" width="12" height="1.6" fill="#eee"/><rect x="3" y="10" width="9" height="1.6" fill="#eee"/><rect x="21" y="6" width="36" height="3.4" fill="#f07a1a"/><rect x="30" y="11.5" width="14" height="1.2" fill="#2fb83a"/><rect x="60" y="2.5" width="10" height="11.5" fill="#e9c4a0"/><path d="M62 14 Q65 5 68 14 Z" fill="#d8a070"/><rect x="75" y="5" width="14" height="5" fill="#ddd"/><rect x="51" y="34" width="3.4" height="3.4" fill="#a9d4ea"/><rect x="35" y="50" width="3.4" height="3.4" fill="#a9d4ea"/><rect x="15" y="46" width="3.4" height="3.4" fill="#a9d4ea"/><rect x="27" y="18" width="3.4" height="3.4" fill="#a9d4ea"/><rect x="23" y="22" width="3.4" height="3.4" fill="#a9d4ea"/><rect x="35" y="46" width="3.4" height="3.4" fill="#a9d4ea"/><rect x="27" y="42" width="3.4" height="3.4" fill="#a9d4ea"/><rect x="47" y="22" width="3.4" height="3.4" fill="#a9d4ea"/><rect x="51" y="30" width="3.4" height="3.4" fill="#a9d4ea"/><rect x="15" y="30" width="3.4" height="3.4" fill="#a9d4ea"/><rect x="39" y="34" width="3.4" height="3.4" fill="#a9d4ea"/><rect x="23" y="42" width="3.4" height="3.4" fill="#a9d4ea"/><rect x="23" y="22" width="3.4" height="3.4" fill="#a9d4ea"/><rect x="23" y="46" width="3.4" height="3.4" fill="#a9d4ea"/><rect x="23" y="26" width="3.4" height="3.4" fill="#a9d4ea"/><rect x="15" y="18" width="3.4" height="3.4" fill="#a9d4ea"/><rect x="27" y="30" width="3.4" height="3.4" fill="#a9d4ea"/><rect x="23" y="26" width="3.4" height="3.4" fill="#a9d4ea"/><path d="M19 17 V54 M43 17 V54 M14 27 H58" stroke="#bbb" stroke-width=".7"/><circle cx="3.5" cy="48" r="2.6" fill="#1a0c06"/><path d="M1.5 50 Q3.5 52 5.5 50" stroke="#e02a1a" stroke-width="1" fill="none"/><path d="M58 54 Q63 46 77 45 Q91 46 96 54 Z" fill="#5e5c5b"/><ellipse cx="77" cy="40" rx="7.2" ry="9.5" fill="#cbbab2"/><ellipse cx="77" cy="36" rx="7" ry="6" fill="#cfc7c3"/><path d="M71 44 Q77 54 83 44 Z" fill="#e4e0dd"/><rect x="71.5" y="39" width="11" height="1.4" fill="#4a403c"/><ellipse cx="77" cy="44" rx="2" ry="1.6" fill="#c98f86"/></g><g transform="translate(236.0 0)"><rect x="0" y="0" width="97" height="54" fill="#fff"/><rect x="29" y="17" width="3.4" height="3.4" fill="#a9d4ea"/><rect x="41" y="33" width="3.4" height="3.4" fill="#a9d4ea"/><rect x="41" y="21" width="3.4" height="3.4" fill="#a9d4ea"/><rect x="9" y="25" width="3.4" height="3.4" fill="#a9d4ea"/><rect x="1" y="21" width="3.4" height="3.4" fill="#a9d4ea"/><rect x="29" y="17" width="3.4" height="3.4" fill="#a9d4ea"/><rect x="41" y="49" width="3.4" height="3.4" fill="#a9d4ea"/><rect x="29" y="45" width="3.4" height="3.4" fill="#a9d4ea"/><rect x="53" y="37" width="3.4" height="3.4" fill="#a9d4ea"/><rect x="13" y="33" width="3.4" height="3.4" fill="#a9d4ea"/><rect x="1" y="41" width="3.4" height="3.4" fill="#a9d4ea"/><rect x="37" y="9" width="3.4" height="3.4" fill="#a9d4ea"/><rect x="29" y="21" width="3.4" height="3.4" fill="#a9d4ea"/><rect x="9" y="21" width="3.4" height="3.4" fill="#a9d4ea"/><rect x="57" y="13" width="3.4" height="3.4" fill="#a9d4ea"/><rect x="1" y="37" width="3.4" height="3.4" fill="#a9d4ea"/><rect x="53" y="13" width="3.4" height="3.4" fill="#a9d4ea"/><rect x="5" y="33" width="3.4" height="3.4" fill="#a9d4ea"/><rect x="41" y="21" width="3.4" height="3.4" fill="#a9d4ea"/><rect x="41" y="25" width="3.4" height="3.4" fill="#a9d4ea"/><rect x="49" y="5" width="3.4" height="3.4" fill="#a9d4ea"/><rect x="1" y="1" width="3.4" height="3.4" fill="#a9d4ea"/><rect x="53" y="41" width="3.4" height="3.4" fill="#a9d4ea"/><rect x="33" y="13" width="3.4" height="3.4" fill="#a9d4ea"/><rect x="5" y="25" width="3.4" height="3.4" fill="#a9d4ea"/><rect x="29" y="5" width="3.4" height="3.4" fill="#a9d4ea"/><rect x="41" y="25" width="3.4" height="3.4" fill="#a9d4ea"/><rect x="9" y="33" width="3.4" height="3.4" fill="#a9d4ea"/><rect x="21" y="37" width="3.4" height="3.4" fill="#a9d4ea"/><rect x="33" y="9" width="3.4" height="3.4" fill="#a9d4ea"/><rect x="45" y="1" width="3.4" height="3.4" fill="#a9d4ea"/><rect x="33" y="9" width="3.4" height="3.4" fill="#a9d4ea"/><rect x="33" y="5" width="3.4" height="3.4" fill="#a9d4ea"/><rect x="25" y="37" width="3.4" height="3.4" fill="#a9d4ea"/><rect x="27" y="43" width="1" height="1.4" fill="#222"/><rect x="39" y="31" width="1" height="1.4" fill="#222"/><rect x="31" y="39" width="1" height="1.4" fill="#222"/><rect x="27" y="35" width="1" height="1.4" fill="#222"/><rect x="3" y="43" width="1" height="1.4" fill="#222"/><rect x="47" y="7" width="1" height="1.4" fill="#222"/><rect x="15" y="51" width="1" height="1.4" fill="#222"/><rect x="43" y="19" width="1" height="1.4" fill="#222"/><rect x="23" y="23" width="1" height="1.4" fill="#222"/><rect x="55" y="47" width="1" height="1.4" fill="#222"/><path d="M0 16.5 H58 M0 35.5 H58 M33.5 0 V54" stroke="#bbb" stroke-width=".7"/><rect x="60.5" y="8" width="32.5" height="29" fill="#fff" stroke="#e02a1a" stroke-width="1.1"/><rect x="61.5" y="9" width="30.5" height="3.2" fill="#f0821c"/><rect x="61.5" y="33" width="30.5" height="2.6" fill="#f0821c"/><circle cx="65.5" cy="17" r="2.2" fill="#1a0c06"/><rect x="74" y="15" width="10" height="2" fill="#f0821c"/><ellipse cx="77" cy="23.5" rx="3.6" ry="4.6" fill="#bfb3ae"/><path d="M68 32.5 Q70 26 77 27 Q85 26 87 32.5 Z" fill="#5e5c5b"/><rect x="66" y="40.5" width="9" height="1.6" fill="#a9d4ea"/><rect x="64" y="45.5" width="12" height="2.4" fill="#a9d4ea"/></g><g transform="translate(333.1 0)"><rect x="0" y="0" width="97" height="54" fill="#fff"/><rect x="5" y="37" width="3.4" height="3.4" fill="#a9d4ea"/><rect x="45" y="49" width="3.4" height="3.4" fill="#a9d4ea"/><rect x="41" y="33" width="3.4" height="3.4" fill="#a9d4ea"/><rect x="13" y="17" width="3.4" height="3.4" fill="#a9d4ea"/><rect x="45" y="17" width="3.4" height="3.4" fill="#a9d4ea"/><rect x="17" y="45" width="3.4" height="3.4" fill="#a9d4ea"/><rect x="5" y="41" width="3.4" height="3.4" fill="#a9d4ea"/><rect x="29" y="17" width="3.4" height="3.4" fill="#a9d4ea"/><rect x="29" y="41" width="3.4" height="3.4" fill="#a9d4ea"/><rect x="53" y="25" width="3.4" height="3.4" fill="#a9d4ea"/><rect x="25" y="49" width="3.4" height="3.4" fill="#a9d4ea"/><rect x="57" y="5" width="3.4" height="3.4" fill="#a9d4ea"/><rect x="17" y="13" width="3.4" height="3.4" fill="#a9d4ea"/><rect x="53" y="21" width="3.4" height="3.4" fill="#a9d4ea"/><rect x="21" y="49" width="3.4" height="3.4" fill="#a9d4ea"/><rect x="17" y="21" width="3.4" height="3.4" fill="#a9d4ea"/><rect x="49" y="41" width="3.4" height="3.4" fill="#a9d4ea"/><rect x="41" y="33" width="3.4" height="3.4" fill="#a9d4ea"/><rect x="9" y="9" width="3.4" height="3.4" fill="#a9d4ea"/><rect x="33" y="41" width="3.4" height="3.4" fill="#a9d4ea"/><rect x="41" y="17" width="3.4" height="3.4" fill="#a9d4ea"/><rect x="9" y="1" width="3.4" height="3.4" fill="#a9d4ea"/><rect x="41" y="5" width="3.4" height="3.4" fill="#a9d4ea"/><rect x="5" y="37" width="3.4" height="3.4" fill="#a9d4ea"/><rect x="21" y="1" width="3.4" height="3.4" fill="#a9d4ea"/><rect x="5" y="17" width="3.4" height="3.4" fill="#a9d4ea"/><rect x="13" y="25" width="3.4" height="3.4" fill="#a9d4ea"/><rect x="25" y="37" width="3.4" height="3.4" fill="#a9d4ea"/><rect x="57" y="29" width="3.4" height="3.4" fill="#a9d4ea"/><rect x="57" y="37" width="3.4" height="3.4" fill="#a9d4ea"/><rect x="5" y="41" width="3.4" height="3.4" fill="#a9d4ea"/><rect x="41" y="5" width="3.4" height="3.4" fill="#a9d4ea"/><rect x="37" y="37" width="3.4" height="3.4" fill="#a9d4ea"/><rect x="41" y="41" width="3.4" height="3.4" fill="#a9d4ea"/><rect x="23" y="11" width="1" height="1.4" fill="#222"/><rect x="55" y="7" width="1" height="1.4" fill="#222"/><rect x="47" y="31" width="1" height="1.4" fill="#222"/><rect x="35" y="43" width="1" height="1.4" fill="#222"/><rect x="15" y="19" width="1" height="1.4" fill="#222"/><rect x="31" y="39" width="1" height="1.4" fill="#222"/><rect x="15" y="31" width="1" height="1.4" fill="#222"/><rect x="51" y="19" width="1" height="1.4" fill="#222"/><rect x="35" y="19" width="1" height="1.4" fill="#222"/><rect x="7" y="7" width="1" height="1.4" fill="#222"/><path d="M0 16.5 H58 M0 35.5 H58 M33.5 0 V54" stroke="#bbb" stroke-width=".7"/><rect x="60.5" y="8" width="32.5" height="29" fill="#fff" stroke="#e02a1a" stroke-width="1.1"/><rect x="61.5" y="9" width="30.5" height="3.2" fill="#f0821c"/><rect x="61.5" y="33" width="30.5" height="2.6" fill="#f0821c"/><circle cx="65.5" cy="17" r="2.2" fill="#1a0c06"/><rect x="74" y="15" width="10" height="2" fill="#f0821c"/><ellipse cx="77" cy="23.5" rx="3.6" ry="4.6" fill="#bfb3ae"/><path d="M68 32.5 Q70 26 77 27 Q85 26 87 32.5 Z" fill="#5e5c5b"/><rect x="66" y="40.5" width="9" height="1.6" fill="#a9d4ea"/><rect x="64" y="45.5" width="12" height="2.4" fill="#a9d4ea"/></g><g transform="translate(430.2 0)"><rect x="0" y="0" width="97" height="54" fill="#fff"/><rect x="29" y="33" width="3.4" height="3.4" fill="#a9d4ea"/><rect x="53" y="49" width="3.4" height="3.4" fill="#a9d4ea"/><rect x="29" y="29" width="3.4" height="3.4" fill="#a9d4ea"/><rect x="33" y="37" width="3.4" height="3.4" fill="#a9d4ea"/><rect x="13" y="9" width="3.4" height="3.4" fill="#a9d4ea"/><rect x="49" y="33" width="3.4" height="3.4" fill="#a9d4ea"/><rect x="29" y="41" width="3.4" height="3.4" fill="#a9d4ea"/><rect x="37" y="49" width="3.4" height="3.4" fill="#a9d4ea"/><rect x="9" y="5" width="3.4" height="3.4" fill="#a9d4ea"/><rect x="29" y="17" width="3.4" height="3.4" fill="#a9d4ea"/><rect x="9" y="5" width="3.4" height="3.4" fill="#a9d4ea"/><rect x="33" y="49" width="3.4" height="3.4" fill="#a9d4ea"/><rect x="57" y="45" width="3.4" height="3.4" fill="#a9d4ea"/><rect x="41" y="1" width="3.4" height="3.4" fill="#a9d4ea"/><rect x="37" y="25" width="3.4" height="3.4" fill="#a9d4ea"/><rect x="29" y="41" width="3.4" height="3.4" fill="#a9d4ea"/><rect x="45" y="37" width="3.4" height="3.4" fill="#a9d4ea"/><rect x="41" y="9" width="3.4" height="3.4" fill="#a9d4ea"/><rect x="37" y="1" width="3.4" height="3.4" fill="#a9d4ea"/><rect x="53" y="33" width="3.4" height="3.4" fill="#a9d4ea"/><rect x="5" y="1" width="3.4" height="3.4" fill="#a9d4ea"/><rect x="1" y="13" width="3.4" height="3.4" fill="#a9d4ea"/><rect x="57" y="13" width="3.4" height="3.4" fill="#a9d4ea"/><rect x="37" y="1" width="3.4" height="3.4" fill="#a9d4ea"/><rect x="49" y="29" width="3.4" height="3.4" fill="#a9d4ea"/><rect x="21" y="29" width="3.4" height="3.4" fill="#a9d4ea"/><rect x="37" y="13" width="3.4" height="3.4" fill="#a9d4ea"/><rect x="33" y="13" width="3.4" height="3.4" fill="#a9d4ea"/><rect x="41" y="17" width="3.4" height="3.4" fill="#a9d4ea"/><rect x="29" y="1" width="3.4" height="3.4" fill="#a9d4ea"/><rect x="41" y="5" width="3.4" height="3.4" fill="#a9d4ea"/><rect x="29" y="41" width="3.4" height="3.4" fill="#a9d4ea"/><rect x="17" y="25" width="3.4" height="3.4" fill="#a9d4ea"/><rect x="33" y="5" width="3.4" height="3.4" fill="#a9d4ea"/><rect x="47" y="19" width="1" height="1.4" fill="#222"/><rect x="23" y="51" width="1" height="1.4" fill="#222"/><rect x="15" y="35" width="1" height="1.4" fill="#222"/><rect x="19" y="3" width="1" height="1.4" fill="#222"/><rect x="7" y="39" width="1" height="1.4" fill="#222"/><rect x="51" y="7" width="1" height="1.4" fill="#222"/><rect x="27" y="7" width="1" height="1.4" fill="#222"/><rect x="55" y="19" width="1" height="1.4" fill="#222"/><rect x="27" y="7" width="1" height="1.4" fill="#222"/><rect x="3" y="43" width="1" height="1.4" fill="#222"/><path d="M0 16.5 H58 M0 35.5 H58 M33.5 0 V54" stroke="#bbb" stroke-width=".7"/><rect x="60.5" y="8" width="32.5" height="29" fill="#fff" stroke="#e02a1a" stroke-width="1.1"/><rect x="61.5" y="9" width="30.5" height="3.2" fill="#f0821c"/><rect x="61.5" y="33" width="30.5" height="2.6" fill="#f0821c"/><circle cx="65.5" cy="17" r="2.2" fill="#1a0c06"/><rect x="74" y="15" width="10" height="2" fill="#f0821c"/><ellipse cx="77" cy="23.5" rx="3.6" ry="4.6" fill="#bfb3ae"/><path d="M68 32.5 Q70 26 77 27 Q85 26 87 32.5 Z" fill="#5e5c5b"/><rect x="66" y="40.5" width="9" height="1.6" fill="#a9d4ea"/><rect x="64" y="45.5" width="12" height="2.4" fill="#a9d4ea"/></g><g transform="translate(527.3 0)"><rect x="0" y="0" width="97" height="54" fill="#fff"/><rect x="17" y="17" width="3.4" height="3.4" fill="#a9d4ea"/><rect x="41" y="41" width="3.4" height="3.4" fill="#a9d4ea"/><rect x="49" y="9" width="3.4" height="3.4" fill="#a9d4ea"/><rect x="41" y="13" width="3.4" height="3.4" fill="#a9d4ea"/><rect x="41" y="9" width="3.4" height="3.4" fill="#a9d4ea"/><rect x="53" y="13" width="3.4" height="3.4" fill="#a9d4ea"/><rect x="41" y="45" width="3.4" height="3.4" fill="#a9d4ea"/><rect x="9" y="9" width="3.4" height="3.4" fill="#a9d4ea"/><rect x="5" y="33" width="3.4" height="3.4" fill="#a9d4ea"/><rect x="53" y="13" width="3.4" height="3.4" fill="#a9d4ea"/><rect x="45" y="17" width="3.4" height="3.4" fill="#a9d4ea"/><rect x="1" y="25" width="3.4" height="3.4" fill="#a9d4ea"/><rect x="9" y="41" width="3.4" height="3.4" fill="#a9d4ea"/><rect x="37" y="1" width="3.4" height="3.4" fill="#a9d4ea"/><rect x="17" y="9" width="3.4" height="3.4" fill="#a9d4ea"/><rect x="5" y="49" width="3.4" height="3.4" fill="#a9d4ea"/><rect x="49" y="49" width="3.4" height="3.4" fill="#a9d4ea"/><rect x="17" y="29" width="3.4" height="3.4" fill="#a9d4ea"/><rect x="45" y="25" width="3.4" height="3.4" fill="#a9d4ea"/><rect x="9" y="49" width="3.4" height="3.4" fill="#a9d4ea"/><rect x="57" y="17" width="3.4" height="3.4" fill="#a9d4ea"/><rect x="21" y="13" width="3.4" height="3.4" fill="#a9d4ea"/><rect x="29" y="49" width="3.4" height="3.4" fill="#a9d4ea"/><rect x="33" y="37" width="3.4" height="3.4" fill="#a9d4ea"/><rect x="25" y="41" width="3.4" height="3.4" fill="#a9d4ea"/><rect x="21" y="25" width="3.4" height="3.4" fill="#a9d4ea"/><rect x="41" y="21" width="3.4" height="3.4" fill="#a9d4ea"/><rect x="41" y="5" width="3.4" height="3.4" fill="#a9d4ea"/><rect x="21" y="37" width="3.4" height="3.4" fill="#a9d4ea"/><rect x="49" y="41" width="3.4" height="3.4" fill="#a9d4ea"/><rect x="17" y="45" width="3.4" height="3.4" fill="#a9d4ea"/><rect x="29" y="33" width="3.4" height="3.4" fill="#a9d4ea"/><rect x="37" y="45" width="3.4" height="3.4" fill="#a9d4ea"/><rect x="9" y="29" width="3.4" height="3.4" fill="#a9d4ea"/><rect x="43" y="47" width="1" height="1.4" fill="#222"/><rect x="31" y="35" width="1" height="1.4" fill="#222"/><rect x="11" y="19" width="1" height="1.4" fill="#222"/><rect x="15" y="11" width="1" height="1.4" fill="#222"/><rect x="35" y="23" width="1" height="1.4" fill="#222"/><rect x="19" y="23" width="1" height="1.4" fill="#222"/><rect x="31" y="19" width="1" height="1.4" fill="#222"/><rect x="39" y="19" width="1" height="1.4" fill="#222"/><rect x="27" y="11" width="1" height="1.4" fill="#222"/><rect x="39" y="31" width="1" height="1.4" fill="#222"/><path d="M0 16.5 H58 M0 35.5 H58 M33.5 0 V54" stroke="#bbb" stroke-width=".7"/><rect x="60.5" y="8" width="32.5" height="29" fill="#fff" stroke="#e02a1a" stroke-width="1.1"/><rect x="61.5" y="9" width="30.5" height="3.2" fill="#f0821c"/><rect x="61.5" y="33" width="30.5" height="2.6" fill="#f0821c"/><circle cx="65.5" cy="17" r="2.2" fill="#1a0c06"/><rect x="74" y="15" width="10" height="2" fill="#f0821c"/><ellipse cx="77" cy="23.5" rx="3.6" ry="4.6" fill="#bfb3ae"/><path d="M68 32.5 Q70 26 77 27 Q85 26 87 32.5 Z" fill="#5e5c5b"/><rect x="66" y="40.5" width="9" height="1.6" fill="#a9d4ea"/><rect x="64" y="45.5" width="12" height="2.4" fill="#a9d4ea"/></g><g transform="translate(624.4 0)"><rect x="0" y="0" width="97" height="54" fill="#fff"/><rect x="13" y="1" width="3.4" height="3.4" fill="#a9d4ea"/><rect x="33" y="45" width="3.4" height="3.4" fill="#a9d4ea"/><rect x="1" y="9" width="3.4" height="3.4" fill="#a9d4ea"/><rect x="57" y="13" width="3.4" height="3.4" fill="#a9d4ea"/><rect x="1" y="1" width="3.4" height="3.4" fill="#a9d4ea"/><rect x="57" y="49" width="3.4" height="3.4" fill="#a9d4ea"/><rect x="41" y="9" width="3.4" height="3.4" fill="#a9d4ea"/><rect x="53" y="45" width="3.4" height="3.4" fill="#a9d4ea"/><rect x="21" y="13" width="3.4" height="3.4" fill="#a9d4ea"/><rect x="5" y="21" width="3.4" height="3.4" fill="#a9d4ea"/><rect x="29" y="45" width="3.4" height="3.4" fill="#a9d4ea"/><rect x="21" y="17" width="3.4" height="3.4" fill="#a9d4ea"/><rect x="25" y="17" width="3.4" height="3.4" fill="#a9d4ea"/><rect x="21" y="13" width="3.4" height="3.4" fill="#a9d4ea"/><rect x="57" y="13" width="3.4" height="3.4" fill="#a9d4ea"/><rect x="53" y="21" width="3.4" height="3.4" fill="#a9d4ea"/><rect x="49" y="21" width="3.4" height="3.4" fill="#a9d4ea"/><rect x="13" y="17" width="3.4" height="3.4" fill="#a9d4ea"/><rect x="57" y="45" width="3.4" height="3.4" fill="#a9d4ea"/><rect x="33" y="25" width="3.4" height="3.4" fill="#a9d4ea"/><rect x="13" y="37" width="3.4" height="3.4" fill="#a9d4ea"/><rect x="29" y="25" width="3.4" height="3.4" fill="#a9d4ea"/><rect x="29" y="5" width="3.4" height="3.4" fill="#a9d4ea"/><rect x="29" y="37" width="3.4" height="3.4" fill="#a9d4ea"/><rect x="49" y="21" width="3.4" height="3.4" fill="#a9d4ea"/><rect x="29" y="37" width="3.4" height="3.4" fill="#a9d4ea"/><rect x="21" y="45" width="3.4" height="3.4" fill="#a9d4ea"/><rect x="41" y="29" width="3.4" height="3.4" fill="#a9d4ea"/><rect x="25" y="49" width="3.4" height="3.4" fill="#a9d4ea"/><rect x="53" y="49" width="3.4" height="3.4" fill="#a9d4ea"/><rect x="5" y="29" width="3.4" height="3.4" fill="#a9d4ea"/><rect x="53" y="1" width="3.4" height="3.4" fill="#a9d4ea"/><rect x="13" y="9" width="3.4" height="3.4" fill="#a9d4ea"/><rect x="33" y="9" width="3.4" height="3.4" fill="#a9d4ea"/><rect x="39" y="51" width="1" height="1.4" fill="#222"/><rect x="47" y="47" width="1" height="1.4" fill="#222"/><rect x="3" y="19" width="1" height="1.4" fill="#222"/><rect x="35" y="31" width="1" height="1.4" fill="#222"/><rect x="11" y="7" width="1" height="1.4" fill="#222"/><rect x="7" y="27" width="1" height="1.4" fill="#222"/><rect x="3" y="7" width="1" height="1.4" fill="#222"/><rect x="31" y="47" width="1" height="1.4" fill="#222"/><rect x="55" y="35" width="1" height="1.4" fill="#222"/><rect x="19" y="27" width="1" height="1.4" fill="#222"/><path d="M0 16.5 H58 M0 35.5 H58 M33.5 0 V54" stroke="#bbb" stroke-width=".7"/><rect x="60.5" y="8" width="32.5" height="29" fill="#fff" stroke="#e02a1a" stroke-width="1.1"/><rect x="61.5" y="9" width="30.5" height="3.2" fill="#f0821c"/><rect x="61.5" y="33" width="30.5" height="2.6" fill="#f0821c"/><circle cx="65.5" cy="17" r="2.2" fill="#1a0c06"/><rect x="74" y="15" width="10" height="2" fill="#f0821c"/><ellipse cx="77" cy="23.5" rx="3.6" ry="4.6" fill="#bfb3ae"/><path d="M68 32.5 Q70 26 77 27 Q85 26 87 32.5 Z" fill="#5e5c5b"/><rect x="66" y="40.5" width="9" height="1.6" fill="#a9d4ea"/><rect x="64" y="45.5" width="12" height="2.4" fill="#a9d4ea"/></g><g transform="translate(721.5 0)"><rect x="0" y="0" width="97" height="54" fill="#fff"/><rect x="29" y="17" width="3.4" height="3.4" fill="#a9d4ea"/><rect x="41" y="33" width="3.4" height="3.4" fill="#a9d4ea"/><rect x="41" y="21" width="3.4" height="3.4" fill="#a9d4ea"/><rect x="9" y="25" width="3.4" height="3.4" fill="#a9d4ea"/><rect x="1" y="21" width="3.4" height="3.4" fill="#a9d4ea"/><rect x="29" y="17" width="3.4" height="3.4" fill="#a9d4ea"/><rect x="41" y="49" width="3.4" height="3.4" fill="#a9d4ea"/><rect x="29" y="45" width="3.4" height="3.4" fill="#a9d4ea"/><rect x="53" y="37" width="3.4" height="3.4" fill="#a9d4ea"/><rect x="13" y="33" width="3.4" height="3.4" fill="#a9d4ea"/><rect x="1" y="41" width="3.4" height="3.4" fill="#a9d4ea"/><rect x="37" y="9" width="3.4" height="3.4" fill="#a9d4ea"/><rect x="29" y="21" width="3.4" height="3.4" fill="#a9d4ea"/><rect x="9" y="21" width="3.4" height="3.4" fill="#a9d4ea"/><rect x="57" y="13" width="3.4" height="3.4" fill="#a9d4ea"/><rect x="1" y="37" width="3.4" height="3.4" fill="#a9d4ea"/><rect x="53" y="13" width="3.4" height="3.4" fill="#a9d4ea"/><rect x="5" y="33" width="3.4" height="3.4" fill="#a9d4ea"/><rect x="41" y="21" width="3.4" height="3.4" fill="#a9d4ea"/><rect x="41" y="25" width="3.4" height="3.4" fill="#a9d4ea"/><rect x="49" y="5" width="3.4" height="3.4" fill="#a9d4ea"/><rect x="1" y="1" width="3.4" height="3.4" fill="#a9d4ea"/><rect x="53" y="41" width="3.4" height="3.4" fill="#a9d4ea"/><rect x="33" y="13" width="3.4" height="3.4" fill="#a9d4ea"/><rect x="5" y="25" width="3.4" height="3.4" fill="#a9d4ea"/><rect x="29" y="5" width="3.4" height="3.4" fill="#a9d4ea"/><rect x="41" y="25" width="3.4" height="3.4" fill="#a9d4ea"/><rect x="9" y="33" width="3.4" height="3.4" fill="#a9d4ea"/><rect x="21" y="37" width="3.4" height="3.4" fill="#a9d4ea"/><rect x="33" y="9" width="3.4" height="3.4" fill="#a9d4ea"/><rect x="45" y="1" width="3.4" height="3.4" fill="#a9d4ea"/><rect x="33" y="9" width="3.4" height="3.4" fill="#a9d4ea"/><rect x="33" y="5" width="3.4" height="3.4" fill="#a9d4ea"/><rect x="25" y="37" width="3.4" height="3.4" fill="#a9d4ea"/><rect x="27" y="43" width="1" height="1.4" fill="#222"/><rect x="39" y="31" width="1" height="1.4" fill="#222"/><rect x="31" y="39" width="1" height="1.4" fill="#222"/><rect x="27" y="35" width="1" height="1.4" fill="#222"/><rect x="3" y="43" width="1" height="1.4" fill="#222"/><rect x="47" y="7" width="1" height="1.4" fill="#222"/><rect x="15" y="51" width="1" height="1.4" fill="#222"/><rect x="43" y="19" width="1" height="1.4" fill="#222"/><rect x="23" y="23" width="1" height="1.4" fill="#222"/><rect x="55" y="47" width="1" height="1.4" fill="#222"/><path d="M0 16.5 H58 M0 35.5 H58 M33.5 0 V54" stroke="#bbb" stroke-width=".7"/><rect x="60.5" y="8" width="32.5" height="29" fill="#fff" stroke="#e02a1a" stroke-width="1.1"/><rect x="61.5" y="9" width="30.5" height="3.2" fill="#f0821c"/><rect x="61.5" y="33" width="30.5" height="2.6" fill="#f0821c"/><circle cx="65.5" cy="17" r="2.2" fill="#1a0c06"/><rect x="74" y="15" width="10" height="2" fill="#f0821c"/><ellipse cx="77" cy="23.5" rx="3.6" ry="4.6" fill="#bfb3ae"/><path d="M68 32.5 Q70 26 77 27 Q85 26 87 32.5 Z" fill="#5e5c5b"/><rect x="66" y="40.5" width="9" height="1.6" fill="#a9d4ea"/><rect x="64" y="45.5" width="12" height="2.4" fill="#a9d4ea"/></g><g transform="translate(818.6 0)"><rect x="0" y="0" width="97" height="54" fill="#fff"/><rect x="5" y="37" width="3.4" height="3.4" fill="#a9d4ea"/><rect x="45" y="49" width="3.4" height="3.4" fill="#a9d4ea"/><rect x="41" y="33" width="3.4" height="3.4" fill="#a9d4ea"/><rect x="13" y="17" width="3.4" height="3.4" fill="#a9d4ea"/><rect x="45" y="17" width="3.4" height="3.4" fill="#a9d4ea"/><rect x="17" y="45" width="3.4" height="3.4" fill="#a9d4ea"/><rect x="5" y="41" width="3.4" height="3.4" fill="#a9d4ea"/><rect x="29" y="17" width="3.4" height="3.4" fill="#a9d4ea"/><rect x="29" y="41" width="3.4" height="3.4" fill="#a9d4ea"/><rect x="53" y="25" width="3.4" height="3.4" fill="#a9d4ea"/><rect x="25" y="49" width="3.4" height="3.4" fill="#a9d4ea"/><rect x="57" y="5" width="3.4" height="3.4" fill="#a9d4ea"/><rect x="17" y="13" width="3.4" height="3.4" fill="#a9d4ea"/><rect x="53" y="21" width="3.4" height="3.4" fill="#a9d4ea"/><rect x="21" y="49" width="3.4" height="3.4" fill="#a9d4ea"/><rect x="17" y="21" width="3.4" height="3.4" fill="#a9d4ea"/><rect x="49" y="41" width="3.4" height="3.4" fill="#a9d4ea"/><rect x="41" y="33" width="3.4" height="3.4" fill="#a9d4ea"/><rect x="9" y="9" width="3.4" height="3.4" fill="#a9d4ea"/><rect x="33" y="41" width="3.4" height="3.4" fill="#a9d4ea"/><rect x="41" y="17" width="3.4" height="3.4" fill="#a9d4ea"/><rect x="9" y="1" width="3.4" height="3.4" fill="#a9d4ea"/><rect x="41" y="5" width="3.4" height="3.4" fill="#a9d4ea"/><rect x="5" y="37" width="3.4" height="3.4" fill="#a9d4ea"/><rect x="21" y="1" width="3.4" height="3.4" fill="#a9d4ea"/><rect x="5" y="17" width="3.4" height="3.4" fill="#a9d4ea"/><rect x="13" y="25" width="3.4" height="3.4" fill="#a9d4ea"/><rect x="25" y="37" width="3.4" height="3.4" fill="#a9d4ea"/><rect x="57" y="29" width="3.4" height="3.4" fill="#a9d4ea"/><rect x="57" y="37" width="3.4" height="3.4" fill="#a9d4ea"/><rect x="5" y="41" width="3.4" height="3.4" fill="#a9d4ea"/><rect x="41" y="5" width="3.4" height="3.4" fill="#a9d4ea"/><rect x="37" y="37" width="3.4" height="3.4" fill="#a9d4ea"/><rect x="41" y="41" width="3.4" height="3.4" fill="#a9d4ea"/><rect x="23" y="11" width="1" height="1.4" fill="#222"/><rect x="55" y="7" width="1" height="1.4" fill="#222"/><rect x="47" y="31" width="1" height="1.4" fill="#222"/><rect x="35" y="43" width="1" height="1.4" fill="#222"/><rect x="15" y="19" width="1" height="1.4" fill="#222"/><rect x="31" y="39" width="1" height="1.4" fill="#222"/><rect x="15" y="31" width="1" height="1.4" fill="#222"/><rect x="51" y="19" width="1" height="1.4" fill="#222"/><rect x="35" y="19" width="1" height="1.4" fill="#222"/><rect x="7" y="7" width="1" height="1.4" fill="#222"/><path d="M0 16.5 H58 M0 35.5 H58 M33.5 0 V54" stroke="#bbb" stroke-width=".7"/><rect x="60.5" y="8" width="32.5" height="29" fill="#fff" stroke="#e02a1a" stroke-width="1.1"/><rect x="61.5" y="9" width="30.5" height="3.2" fill="#f0821c"/><rect x="61.5" y="33" width="30.5" height="2.6" fill="#f0821c"/><circle cx="65.5" cy="17" r="2.2" fill="#1a0c06"/><rect x="74" y="15" width="10" height="2" fill="#f0821c"/><ellipse cx="77" cy="23.5" rx="3.6" ry="4.6" fill="#bfb3ae"/><path d="M68 32.5 Q70 26 77 27 Q85 26 87 32.5 Z" fill="#5e5c5b"/><rect x="66" y="40.5" width="9" height="1.6" fill="#a9d4ea"/><rect x="64" y="45.5" width="12" height="2.4" fill="#a9d4ea"/></g></svg>
<svg style="left:1122px;top:767.3px;" width="13" height="12" viewBox="0 0 13 12"><g fill="none" stroke="#e4e9ef" stroke-width="1.5" stroke-linecap="round"><path d="M5.6 3.8 L7.2 2.6 A2.4 2.4 0 0 1 10.4 6.2 L8.8 7.4"/><path d="M7.4 8.2 L5.8 9.4 A2.4 2.4 0 0 1 2.6 5.8 L4.2 4.6"/><path d="M5 7.2 L8 4.8"/></g></svg>
<span style="left:1143.0px;top:764.3px;height:18px;line-height:18px;font-size:12px;color:#e4e9ef;letter-spacing:-0.36px;">88.mkv</span>
<div style="left:942px;top:788.6px;width:69px;height:58.6px;background:#45926a;border-radius:3px;"></div>
<div style="left:943px;top:822.0020000000001px;width:67px;height:1px;background:#367a56;"></div>
<svg style="left:942px;top:804.5px;overflow:visible;" width="69.5" height="1" viewBox="0 0 69.5 1"><path d="M0 0 H69.5" stroke="#cfe6d8" stroke-width="1"/><path d="M8 -0.4 9 -4.2 10 -5.3 11 -3.8 12 -5.4 13 -5.4 14 -6.6 15 -7.3 16 -3.3 17 -2.7 18 -5.6 19 -2.9 20 -0.4 L20 0.4 19 2.8 18 5.3 17 2.6 16 3.1 15 6.9 14 6.3 13 5.1 12 5.1 11 3.6 10 5.0 9 4.0 8 0.4ZM20 -0.4 21 -2.3 22 -4.0 23 -2.9 24 -6.3 25 -6.5 26 -2.7 27 -2.8 28 -5.3 29 -7.2 30 -4.4 31 -3.4 32 -4.1 33 -2.2 34 -2.4 35 -2.3 36 -0.4 L36 0.4 35 2.2 34 2.3 33 2.0 32 3.9 31 3.3 30 4.2 29 6.9 28 5.1 27 2.6 26 2.6 25 6.2 24 6.0 23 2.8 22 3.8 21 2.2 20 0.4ZM36 -0.4 37 -2.3 38 -3.0 39 -4.7 40 -4.4 41 -3.2 42 -8.2 43 -6.7 44 -7.3 45 -4.4 46 -9.1 47 -7.9 48 -3.5 49 -4.1 50 -5.0 51 -3.7 52 -0.4 L52 0.4 51 3.5 50 4.8 49 3.9 48 3.3 47 7.5 46 8.7 45 4.2 44 6.9 43 6.4 42 7.8 41 3.0 40 4.2 39 4.5 38 2.9 37 2.2 36 0.4ZM52 -0.4 53 -3.4 54 -4.1 55 -3.4 56 -5.0 57 -6.7 58 -6.8 59 -5.2 60 -5.5 61 -2.7 62 -3.5 63 -5.3 64 -3.2 65 -1.8 66 -0.4 L66 0.4 65 1.7 64 3.1 63 5.1 62 3.3 61 2.6 60 5.2 59 4.9 58 6.4 57 6.4 56 4.7 55 3.2 54 3.9 53 3.3 52 0.4Z" fill="#d9f0e2"/></svg>
<svg style="left:949px;top:829.5px;" width="13" height="12" viewBox="0 0 13 12"><g fill="none" stroke="#e4e9ef" stroke-width="1.5" stroke-linecap="round"><path d="M5.6 3.8 L7.2 2.6 A2.4 2.4 0 0 1 10.4 6.2 L8.8 7.4"/><path d="M7.4 8.2 L5.8 9.4 A2.4 2.4 0 0 1 2.6 5.8 L4.2 4.6"/><path d="M5 7.2 L8 4.8"/></g></svg>
<span style="left:969.5px;top:826.5px;height:18px;line-height:18px;font-size:12px;color:#e4e9ef;letter-spacing:-0.36px;">88.mkv</span>
<div style="left:1115px;top:789px;width:826.5px;height:58.5px;background:#45926a;border:2.3px solid #f2503f;border-right:none;border-radius:3px 0 0 3px;"></div>
<div style="left:1116px;top:822.345px;width:824.5px;height:1px;background:#367a56;"></div>
<svg style="left:1118px;top:804.5px;overflow:visible;" width="822" height="1" viewBox="0 0 822 1"><path d="M0 0 H822" stroke="#cfe6d8" stroke-width="1"/><path d="M6 -0.4 7 -4.0 8 -2.2 9 -2.7 10 -6.7 11 -6.7 12 -6.8 13 -5.0 14 -6.9 15 -7.0 16 -6.9 17 -4.3 18 -5.9 19 -5.5 20 -7.1 21 -8.1 22 -7.2 23 -4.7 24 -3.6 25 -2.2 26 -0.4 L26 0.4 25 2.1 24 3.4 23 4.5 22 6.9 21 7.7 20 6.7 19 5.2 18 5.6 17 4.1 16 6.6 15 6.7 14 6.6 13 4.7 12 6.4 11 6.4 10 6.3 9 2.6 8 2.1 7 3.8 6 0.4ZM27 -0.4 28 -2.6 29 -2.8 30 -3.4 31 -5.2 32 -3.5 33 -2.8 34 -0.4 L34 0.4 33 2.7 32 3.4 31 5.0 30 3.2 29 2.7 28 2.4 27 0.4ZM35 -0.4 36 -1.8 37 -1.9 38 -3.6 39 -5.8 40 -4.9 41 -3.0 42 -6.2 43 -5.8 44 -5.4 45 -5.9 46 -4.9 47 -4.5 48 -2.6 49 -3.2 50 -0.4 L50 0.4 49 3.1 48 2.4 47 4.3 46 4.7 45 5.6 44 5.1 43 5.5 42 5.9 41 2.9 40 4.7 39 5.5 38 3.4 37 1.8 36 1.7 35 0.4ZM51 -0.4 52 -2.3 53 -2.9 54 -2.7 55 -3.2 56 -3.2 57 -4.5 58 -3.1 59 -3.7 60 -2.1 61 -2.5 62 -0.4 L62 0.4 61 2.4 60 2.0 59 3.5 58 2.9 57 4.3 56 3.0 55 3.0 54 2.6 53 2.8 52 2.1 51 0.4ZM63 -0.4 64 -2.9 65 -5.1 66 -5.3 67 -4.8 68 -3.8 69 -4.6 70 -6.8 71 -3.9 72 -8.0 73 -4.4 74 -7.7 75 -4.3 76 -7.0 77 -5.2 78 -3.7 79 -2.7 80 -0.4 L80 0.4 79 2.6 78 3.5 77 4.9 76 6.6 75 4.0 74 7.3 73 4.2 72 7.6 71 3.7 70 6.4 69 4.3 68 3.6 67 4.5 66 5.0 65 4.9 64 2.7 63 0.4ZM81 -0.4 82 -1.8 83 -2.1 84 -3.4 85 -5.2 86 -4.3 87 -2.3 88 -4.8 89 -4.1 90 -4.1 91 -1.5 92 -0.4 L92 0.4 91 1.5 90 3.9 89 3.9 88 4.6 87 2.2 86 4.1 85 5.0 84 3.3 83 2.0 82 1.7 81 0.4ZM110 -0.4 111 -2.4 112 -2.2 113 -2.4 114 -4.9 115 -2.4 116 -3.9 117 -5.1 118 -2.7 119 -2.4 120 -3.8 121 -1.9 122 -0.4 L122 0.4 121 1.8 120 3.7 119 2.3 118 2.6 117 4.8 116 3.7 115 2.2 114 4.7 113 2.3 112 2.1 111 2.3 110 0.4ZM123 -0.4 124 -1.6 125 -1.7 126 -3.5 127 -2.0 128 -5.2 129 -2.1 130 -5.0 131 -2.3 132 -3.3 133 -5.8 134 -3.0 135 -3.1 136 -5.3 137 -3.9 138 -2.4 139 -6.0 140 -2.6 141 -2.0 142 -2.8 143 -3.3 144 -3.1 145 -1.1 146 -0.4 L146 0.4 145 1.1 144 2.9 143 3.1 142 2.7 141 1.9 140 2.5 139 5.7 138 2.3 137 3.7 136 5.0 135 3.0 134 2.9 133 5.5 132 3.2 131 2.2 130 4.8 129 2.0 128 5.0 127 1.9 126 3.3 125 1.6 124 1.5 123 0.4ZM147 -0.4 148 -4.0 149 -6.8 150 -7.1 151 -7.5 152 -5.3 153 -0.4 L153 0.4 152 5.0 151 7.1 150 6.7 149 6.5 148 3.8 147 0.4ZM158 -0.4 159 -1.2 160 -0.4 L160 0.4 159 1.2 158 0.4ZM170 -0.4 171 -1.1 172 -1.2 173 -2.1 174 -3.4 175 -1.8 176 -3.2 177 -2.7 178 -3.2 179 -2.1 180 -4.6 181 -2.4 182 -3.5 183 -2.8 184 -1.6 185 -2.9 186 -1.7 187 -1.3 188 -1.0 189 -0.9 190 -0.4 L190 0.4 189 0.9 188 1.0 187 1.2 186 1.6 185 2.8 184 1.5 183 2.7 182 3.3 181 2.3 180 4.4 179 2.0 178 3.0 177 2.6 176 3.0 175 1.7 174 3.3 173 2.0 172 1.1 171 1.1 170 0.4ZM204 -0.4 205 -1.1 206 -1.9 207 -1.6 208 -0.4 L208 0.4 207 1.5 206 1.8 205 1.1 204 0.4ZM212 -0.4 213 -1.5 214 -1.7 215 -2.8 216 -3.2 217 -3.9 218 -3.8 219 -2.5 220 -2.9 221 -3.1 222 -1.5 223 -1.4 224 -2.0 225 -1.0 226 -0.4 L226 0.4 225 1.0 224 1.9 223 1.4 222 1.4 221 3.0 220 2.8 219 2.3 218 3.6 217 3.7 216 3.1 215 2.7 214 1.6 213 1.5 212 0.4ZM232 -0.4 233 -0.6 234 -1.0 235 -1.1 236 -1.2 237 -1.6 238 -1.3 239 -0.8 240 -0.4 L240 0.4 239 0.8 238 1.3 237 1.5 236 1.1 235 1.1 234 0.9 233 0.6 232 0.4ZM258 -0.4 259 -1.7 260 -2.4 261 -2.3 262 -1.8 263 -1.9 264 -1.8 265 -0.7 266 -0.4 L266 0.4 265 0.7 264 1.7 263 1.8 262 1.7 261 2.2 260 2.3 259 1.7 258 0.4ZM272 -0.4 273 -1.2 274 -1.4 275 -3.4 276 -2.5 277 -2.9 278 -4.0 279 -2.9 280 -1.8 281 -2.5 282 -0.4 L282 0.4 281 2.4 280 1.7 279 2.8 278 3.8 277 2.8 276 2.3 275 3.2 274 1.3 273 1.1 272 0.4ZM313 -0.4 314 -4.2 315 -3.0 316 -4.7 317 -8.6 318 -8.1 319 -3.9 320 -7.2 321 -7.0 322 -7.6 323 -5.4 324 -7.9 325 -4.1 326 -5.1 327 -5.1 328 -6.9 329 -2.1 330 -0.4 L330 0.4 329 2.0 328 6.6 327 4.8 326 4.8 325 3.9 324 7.5 323 5.2 322 7.2 321 6.7 320 6.8 319 3.7 318 7.7 317 8.1 316 4.5 315 2.8 314 4.0 313 0.4ZM398 -0.4 399 -1.9 400 -2.2 401 -2.8 402 -3.9 403 -3.0 404 -2.2 405 -2.2 406 -2.1 407 -4.5 408 -3.6 409 -4.1 410 -2.9 411 -1.0 412 -0.4 L412 0.4 411 0.9 410 2.7 409 3.9 408 3.4 407 4.3 406 2.0 405 2.1 404 2.1 403 2.9 402 3.7 401 2.6 400 2.1 399 1.8 398 0.4ZM414 -0.4 415 -1.7 416 -1.9 417 -1.9 418 -2.4 419 -3.4 420 -2.2 421 -2.9 422 -2.8 423 -4.1 424 -3.6 425 -3.8 426 -3.3 427 -1.8 428 -1.4 429 -1.4 430 -0.4 L430 0.4 429 1.3 428 1.3 427 1.7 426 3.1 425 3.6 424 3.4 423 3.9 422 2.7 421 2.8 420 2.1 419 3.2 418 2.2 417 1.8 416 1.8 415 1.6 414 0.4ZM431 -0.4 432 -1.4 433 -2.3 434 -2.1 435 -2.8 436 -1.4 437 -2.1 438 -3.7 439 -1.7 440 -2.4 441 -1.5 442 -1.5 443 -3.2 444 -3.2 445 -2.2 446 -1.0 447 -1.0 448 -0.4 L448 0.4 447 0.9 446 1.0 445 2.1 444 3.0 443 3.0 442 1.4 441 1.4 440 2.2 439 1.6 438 3.5 437 2.0 436 1.3 435 2.7 434 2.0 433 2.2 432 1.3 431 0.4ZM514 -0.4 515 -1.6 516 -1.8 517 -2.2 518 -1.5 519 -2.6 520 -3.7 521 -3.1 522 -1.5 523 -2.2 524 -2.3 525 -1.1 526 -0.4 L526 0.4 525 1.0 524 2.2 523 2.1 522 1.4 521 3.0 520 3.5 519 2.5 518 1.4 517 2.1 516 1.7 515 1.6 514 0.4ZM646 -0.4 647 -1.1 648 -1.1 649 -1.9 650 -1.5 651 -1.0 652 -0.4 L652 0.4 651 1.0 650 1.5 649 1.8 648 1.0 647 1.1 646 0.4ZM657 -0.4 658 -0.7 659 -1.8 660 -2.7 661 -1.5 662 -2.5 663 -2.6 664 -2.5 665 -3.5 666 -4.3 667 -3.7 668 -3.1 669 -4.6 670 -2.7 671 -4.0 672 -3.7 673 -3.9 674 -4.1 675 -2.2 676 -3.2 677 -2.5 678 -3.1 679 -3.6 680 -2.5 681 -1.0 682 -1.6 683 -1.5 684 -0.4 L684 0.4 683 1.4 682 1.5 681 1.0 680 2.4 679 3.4 678 2.9 677 2.4 676 3.1 675 2.1 674 3.9 673 3.7 672 3.5 671 3.8 670 2.5 669 4.4 668 2.9 667 3.5 666 4.1 665 3.3 664 2.4 663 2.5 662 2.3 661 1.5 660 2.6 659 1.7 658 0.6 657 0.4ZM702 -0.4 703 -3.2 704 -1.8 705 -5.4 706 -5.0 707 -4.6 708 -5.7 709 -5.2 710 -2.0 711 -3.2 712 -0.4 L712 0.4 711 3.0 710 1.9 709 4.9 708 5.4 707 4.4 706 4.7 705 5.1 704 1.7 703 3.0 702 0.4ZM713 -0.4 714 -1.8 715 -2.1 716 -1.6 717 -3.3 718 -1.8 719 -3.3 720 -2.9 721 -2.4 722 -3.4 723 -3.1 724 -2.3 725 -4.5 726 -1.7 727 -1.5 728 -2.5 729 -3.0 730 -2.2 731 -1.8 732 -0.4 L732 0.4 731 1.7 730 2.1 729 2.9 728 2.4 727 1.4 726 1.7 725 4.2 724 2.2 723 2.9 722 3.2 721 2.3 720 2.7 719 3.1 718 1.7 717 3.2 716 1.5 715 2.0 714 1.7 713 0.4ZM752 -0.4 753 -1.4 754 -1.7 755 -2.5 756 -1.4 757 -1.5 758 -2.7 759 -1.1 760 -0.4 L760 0.4 759 1.1 758 2.6 757 1.4 756 1.3 755 2.4 754 1.6 753 1.3 752 0.4ZM812 -0.4 813 -0.8 814 -1.1 815 -0.4 L815 0.4 814 1.0 813 0.8 812 0.4Z" fill="#d9f0e2"/></svg>
<svg style="left:1122px;top:829.5px;" width="13" height="12" viewBox="0 0 13 12"><g fill="none" stroke="#e4e9ef" stroke-width="1.5" stroke-linecap="round"><path d="M5.6 3.8 L7.2 2.6 A2.4 2.4 0 0 1 10.4 6.2 L8.8 7.4"/><path d="M7.4 8.2 L5.8 9.4 A2.4 2.4 0 0 1 2.6 5.8 L4.2 4.6"/><path d="M5 7.2 L8 4.8"/></g></svg>
<span style="left:1143.0px;top:826.5px;height:18px;line-height:18px;font-size:12px;color:#e4e9ef;letter-spacing:-0.36px;">88.mkv</span>
<div style="left:1012.5px;top:849.8px;width:101.5px;height:58.2px;background:#45926a;border-radius:3px;"></div>
<div style="left:1013.5px;top:882.9739999999999px;width:99.5px;height:1px;background:#367a56;"></div>
<svg style="left:1012.5px;top:866px;overflow:visible;" width="101" height="1" viewBox="0 0 101 1"><path d="M0 0 H101" stroke="#cfe6d8" stroke-width="1"/><rect x="13" y="-1" width="24" height="2" fill="#d9f0e2"/><rect x="40" y="-1" width="1.6" height="2" fill="#d9f0e2"/><rect x="46" y="-1" width="1.6" height="2" fill="#d9f0e2"/><rect x="50" y="-1" width="1.6" height="2" fill="#d9f0e2"/><rect x="54" y="-1" width="1.6" height="2" fill="#d9f0e2"/><rect x="58" y="-1" width="1.6" height="2" fill="#d9f0e2"/><rect x="62" y="-1" width="1.6" height="2" fill="#d9f0e2"/><rect x="66" y="-1" width="1.6" height="2" fill="#d9f0e2"/><rect x="73" y="-1" width="1.6" height="2" fill="#d9f0e2"/></svg>
<svg style="left:1020px;top:891px;" width="13" height="12" viewBox="0 0 13 12"><g fill="none" stroke="#e4e9ef" stroke-width="1.5" stroke-linecap="round"><path d="M5.6 3.8 L7.2 2.6 A2.4 2.4 0 0 1 10.4 6.2 L8.8 7.4"/><path d="M7.4 8.2 L5.8 9.4 A2.4 2.4 0 0 1 2.6 5.8 L4.2 4.6"/><path d="M5 7.2 L8 4.8"/></g></svg>
<span style="left:1040.5px;top:888.0px;height:18px;line-height:18px;font-size:12px;color:#e4e9ef;letter-spacing:-0.07px;">Logointro1....</span>
<div style="left:1013px;top:910.8px;width:80px;height:58.2px;background:#45926a;border-radius:3px;"></div>
<div style="left:1014px;top:943.9739999999999px;width:78px;height:1px;background:#367a56;"></div>
<svg style="left:1013px;top:927px;overflow:visible;" width="80" height="1" viewBox="0 0 80 1"><path d="M0 0 H80" stroke="#cfe6d8" stroke-width="1"/><path d="M19 -0.4 20 -2.7 21 -5.2 22 -4.4 23 -4.1 24 -6.3 25 -9.3 26 -7.5 27 -5.5 28 -0.4 L28 0.4 27 5.2 26 7.1 25 8.8 24 6.0 23 3.9 22 4.2 21 4.9 20 2.6 19 0.4ZM30 -0.4 31 -2.2 32 -2.5 33 -2.4 34 -2.6 35 -4.0 36 -0.4 L36 0.4 35 3.8 34 2.5 33 2.3 32 2.3 31 2.1 30 0.4ZM37 -0.4 38 -3.4 39 -2.5 40 -3.3 41 -4.9 42 -5.5 43 -5.9 44 -5.6 45 -2.1 46 -2.9 47 -0.4 L47 0.4 46 2.8 45 2.0 44 5.3 43 5.6 42 5.2 41 4.7 40 3.2 39 2.4 38 3.2 37 0.4ZM60 -0.4 61 -2.0 62 -3.7 63 -2.6 64 -6.4 65 -5.9 66 -4.0 67 -2.4 68 -0.4 L68 0.4 67 2.2 66 3.8 65 5.6 64 6.0 63 2.5 62 3.6 61 1.9 60 0.4Z" fill="#d9f0e2"/></svg>
<span style="left:1017.0px;top:949.0px;height:18px;line-height:18px;font-size:12px;color:#e4e9ef;letter-spacing:-0.10px;">Audio 3</span>
<div style="left:942px;top:971.8px;width:999px;height:34.2px;background:#3a6a4d;"></div>
<div style="left:942px;top:993.5px;width:999px;height:1px;background:#86b89a;"></div>
<svg style="left:942px;top:988px;overflow:visible;" width="999" height="1" viewBox="0 0 999 1"><path d="M0 0 H999" stroke="#d9f0e2" stroke-width=".9"/><rect x="6" y="-1.3" width="5" height="2.6" fill="#d9f0e2"/><rect x="22" y="-1.3" width="1.5" height="2.6" fill="#d9f0e2"/><rect x="38" y="-1.3" width="2" height="2.6" fill="#d9f0e2"/><rect x="45" y="-1.3" width="2" height="2.6" fill="#d9f0e2"/><rect x="103" y="-1.3" width="1" height="2.6" fill="#d9f0e2"/><rect x="120" y="-1.3" width="1" height="2.6" fill="#d9f0e2"/><rect x="137" y="-1.3" width="1" height="2.6" fill="#d9f0e2"/><rect x="160" y="-1.3" width="2" height="2.6" fill="#d9f0e2"/><rect x="176" y="-1.3" width="1.5" height="2.6" fill="#d9f0e2"/><rect x="195" y="-1.3" width="5" height="2.6" fill="#d9f0e2"/><rect x="210" y="-1.3" width="1.5" height="2.6" fill="#d9f0e2"/><rect x="228" y="-1.3" width="1" height="2.6" fill="#d9f0e2"/><rect x="300" y="-1.3" width="2" height="2.6" fill="#d9f0e2"/><rect x="310" y="-1.3" width="1.5" height="2.6" fill="#d9f0e2"/><rect x="322" y="-1.3" width="1.5" height="2.6" fill="#d9f0e2"/><rect x="355" y="-1.3" width="1" height="2.6" fill="#d9f0e2"/><rect x="372" y="-1.3" width="5" height="2.6" fill="#d9f0e2"/><rect x="388" y="-1.3" width="1" height="2.6" fill="#d9f0e2"/><rect x="492" y="-1.3" width="5" height="2.6" fill="#d9f0e2"/><rect x="505" y="-1.3" width="5" height="2.6" fill="#d9f0e2"/><rect x="510" y="-1.3" width="1" height="2.6" fill="#d9f0e2"/><rect x="518" y="-1.3" width="1" height="2.6" fill="#d9f0e2"/><rect x="540" y="-1.3" width="1" height="2.6" fill="#d9f0e2"/><rect x="660" y="-1.3" width="1" height="2.6" fill="#d9f0e2"/><rect x="672" y="-1.3" width="1" height="2.6" fill="#d9f0e2"/><rect x="688" y="-1.3" width="1" height="2.6" fill="#d9f0e2"/><rect x="700" y="-1.3" width="1.5" height="2.6" fill="#d9f0e2"/><rect x="712" y="-1.3" width="1.5" height="2.6" fill="#d9f0e2"/><rect x="728" y="-1.3" width="1" height="2.6" fill="#d9f0e2"/><rect x="742" y="-1.3" width="5" height="2.6" fill="#d9f0e2"/><rect x="770" y="-1.3" width="1" height="2.6" fill="#d9f0e2"/><rect x="856" y="-1.3" width="2" height="2.6" fill="#d9f0e2"/><rect x="862" y="-1.3" width="1" height="2.6" fill="#d9f0e2"/><rect x="930" y="-1.3" width="1" height="2.6" fill="#d9f0e2"/><rect x="942" y="-1.3" width="5" height="2.6" fill="#d9f0e2"/><rect x="956" y="-1.3" width="1" height="2.6" fill="#d9f0e2"/><rect x="962" y="-1.3" width="2" height="2.6" fill="#d9f0e2"/><rect x="980" y="-1.3" width="1" height="2.6" fill="#d9f0e2"/></svg>
<div style="left:1931px;top:516px;width:10px;height:490px;background:linear-gradient(90deg,rgba(22,22,22,0),rgba(22,22,22,.7));"></div>
<div style="left:940.3px;top:522px;width:1.4px;height:484px;background:#e5463a;"></div>
<svg style="left:932.6px;top:516px;" width="16" height="13" viewBox="0 0 16 13"><path d="M1.5 0 H14.5 Q16 0 16 1.5 V6 L8 12.5 L0 6 V1.5 Q0 0 1.5 0 Z" fill="#e5463a"/></svg>
<div style="left:1941px;top:557px;width:10px;height:449px;background:#2c2d33;"></div>
<div style="left:1941px;top:557px;width:1px;height:449px;background:#1a1a1e;"></div>
<div style="left:1942px;top:557px;width:8px;height:227px;background:#3b3d45;"></div>
<div style="left:1942.3px;top:664px;width:8px;height:119.5px;background:#565a65;border-radius:4px;border:1px solid #1c1c20;"></div>
<div style="left:1942.3px;top:789px;width:8px;height:193px;background:#565a65;border-radius:4px;border:1px solid #1c1c20;"></div>
<div style="left:1942px;top:982px;width:8px;height:24px;background:#3b3d45;"></div>
<div style="left:708px;top:1006px;width:1243px;height:11px;background:#303036;"></div>
<div style="left:708px;top:1005.5px;width:1243px;height:1px;background:#1a1a1e;"></div>
<div style="left:941px;top:1007px;width:45px;height:8.5px;background:#575b66;border-radius:4px;border:1px solid #1c1c20;"></div>
<svg style="left:1203px;top:550px;" width="13" height="20" viewBox="0 0 13 20"><path d="M1 1 V16 L4.6 12.6 L7 18.4 L9.4 17.4 L7 11.8 L11.8 11.8 Z" fill="#fafafa" stroke="#111" stroke-width="1"/></svg>
<div style="left:32px;top:1017px;width:1919px;height:1px;background:#0b0b0d;"></div>
<div style="left:32px;top:1018px;width:1919px;height:32px;background:#17181b;"></div>
<svg style="left:57px;top:1024px;" width="19" height="18" viewBox="0 0 19 18"><circle cx="9.5" cy="4.8" r="4.5" fill="#f2f2f2"/><circle cx="4.8" cy="13" r="4.5" fill="#f2f2f2"/><circle cx="14.2" cy="13" r="4.5" fill="#f2f2f2"/></svg>
<span style="left:85.0px;top:1023.7px;height:19px;line-height:19px;font-size:13px;color:#ececec;letter-spacing:-0.01px;">DaVinci Resolve 18</span>
<div style="left:753px;top:1018px;width:118px;height:31px;background:#000;"></div>
<div style="left:753px;top:1046.5px;width:118px;height:3px;background:#e5463a;"></div>
<svg style="left:682px;top:1025px;" width="20" height="17" viewBox="0 0 20 17"><path d="M3 1 H17 M2 3.2 H18" stroke="#5c5c60" stroke-width="1"/><rect x=".6" y="5" width="18.8" height="11.4" rx="1" fill="none" stroke="#5c5c60" stroke-width="1.1"/><circle cx="5" cy="8.5" r="1" fill="#5c5c60"/><path d="M2.5 14.5 L7.5 10.5 L10.5 13 L14 9.8 L17.5 13 V14.5 Z" fill="#5c5c60"/></svg>
<svg style="left:801px;top:1023px;" width="23" height="22" viewBox="0 0 23 22"><rect x="1" y="5.5" width="8.5" height="2.3" rx="1" fill="#4a90d8"/><rect x="13" y="5.5" width="8.5" height="2.3" rx="1" fill="#4a90d8"/><rect x="3" y="9.8" width="6.5" height="2.3" rx="1" fill="#4a90d8"/><rect x="13" y="9.8" width="6.5" height="2.3" rx="1" fill="#4a90d8"/><rect x="1" y="14.1" width="8.5" height="2.3" rx="1" fill="#48a848"/><rect x="13" y="14.1" width="9" height="2.3" rx="1" fill="#48a848"/><rect x="10.6" y="2" width="1.3" height="19" fill="#e5463a"/><path d="M9.4 .5 H13.1 V3 L11.25 4.4 L9.4 3 Z" fill="#e5463a"/></svg>
<svg style="left:921px;top:1023px;" width="22" height="22" viewBox="0 0 22 22"><path d="M12.5 17 L18.5 4.5" stroke="#5c5c60" stroke-width="3.4" stroke-linecap="round"/><path d="M7 2 L7.9 4.8 L10.7 5.7 L7.9 6.6 L7 9.4 L6.1 6.6 L3.3 5.7 L6.1 4.8 Z M12 .5 L12.5 2 L14 2.5 L12.5 3 L12 4.5 L11.5 3 L10 2.5 L11.5 2 Z M3.5 9.5 L4.1 11.4 L6 12 L4.1 12.6 L3.5 14.5 L2.9 12.6 L1 12 L2.9 11.4 Z" fill="#5c5c60"/></svg>
<svg style="left:1042px;top:1024.5px;" width="18" height="18" viewBox="0 0 18 18"><circle cx="16.0" cy="9.0" r="1.2" fill="#5c5c60"/><circle cx="13.9" cy="13.9" r="1.5" fill="#5c5c60"/><circle cx="9.0" cy="16.0" r="1.2" fill="#5c5c60"/><circle cx="4.1" cy="13.9" r="1.5" fill="#5c5c60"/><circle cx="2.0" cy="9.0" r="1.2" fill="#5c5c60"/><circle cx="4.1" cy="4.1" r="1.5" fill="#5c5c60"/><circle cx="9.0" cy="2.0" r="1.2" fill="#5c5c60"/><circle cx="13.9" cy="4.1" r="1.5" fill="#5c5c60"/><circle cx="9" cy="9" r="1.5" fill="#5c5c60"/></svg>
<svg style="left:1164px;top:1025px;" width="16" height="17" viewBox="0 0 16 17"><path d="M4.5 3.4 L15 .6 L15 12 A2.8 2.3 0 1 1 13.4 9.9 L13.4 4.4 L6.1 6.4 L6.1 14.2 A2.8 2.3 0 1 1 4.5 12.1 Z" fill="#8a8a8e"/></svg>
<svg style="left:1282px;top:1024px;" width="19" height="19" viewBox="0 0 19 19"><path d="M17.5 1 Q11 1.5 7.5 7 L6 11.5 L8 13.5 L12.5 12 Q17.5 8.5 17.5 1 Z" fill="none" stroke="#5c5c60" stroke-width="1.3"/><circle cx="12.5" cy="6.5" r="1.5" fill="#5c5c60"/><path d="M7 8 L3 9 L1.5 12 L5.5 11.5 M11 12.5 L10 16.5 L7 18 L7.5 14" fill="none" stroke="#5c5c60" stroke-width="1.2"/><path d="M4.5 14.5 L1.5 17.5" stroke="#5c5c60" stroke-width="1.2"/></svg>
<svg style="left:1860.5px;top:1026.5px;" width="16" height="14" viewBox="0 0 16 14"><path d="M8 0 L16 7.2 H13.6 V14 H9.6 V9.4 H6.4 V14 H2.4 V7.2 H0 Z" fill="#8c8c90"/></svg>
<svg style="left:1909px;top:1025.5px;" width="16" height="16" viewBox="0 0 16 16"><circle cx="8" cy="8" r="4.2" fill="none" stroke="#8c8c90" stroke-width="2.2"/><rect x="7" y="0" width="2" height="3.4" fill="#8c8c90" transform="rotate(0 8 8)"/><rect x="7" y="0" width="2" height="3.4" fill="#8c8c90" transform="rotate(45 8 8)"/><rect x="7" y="0" width="2" height="3.4" fill="#8c8c90" transform="rotate(90 8 8)"/><rect x="7" y="0" width="2" height="3.4" fill="#8c8c90" transform="rotate(135 8 8)"/><rect x="7" y="0" width="2" height="3.4" fill="#8c8c90" transform="rotate(180 8 8)"/><rect x="7" y="0" width="2" height="3.4" fill="#8c8c90" transform="rotate(225 8 8)"/><rect x="7" y="0" width="2" height="3.4" fill="#8c8c90" transform="rotate(270 8 8)"/><rect x="7" y="0" width="2" height="3.4" fill="#8c8c90" transform="rotate(315 8 8)"/></svg>
</body></html>
